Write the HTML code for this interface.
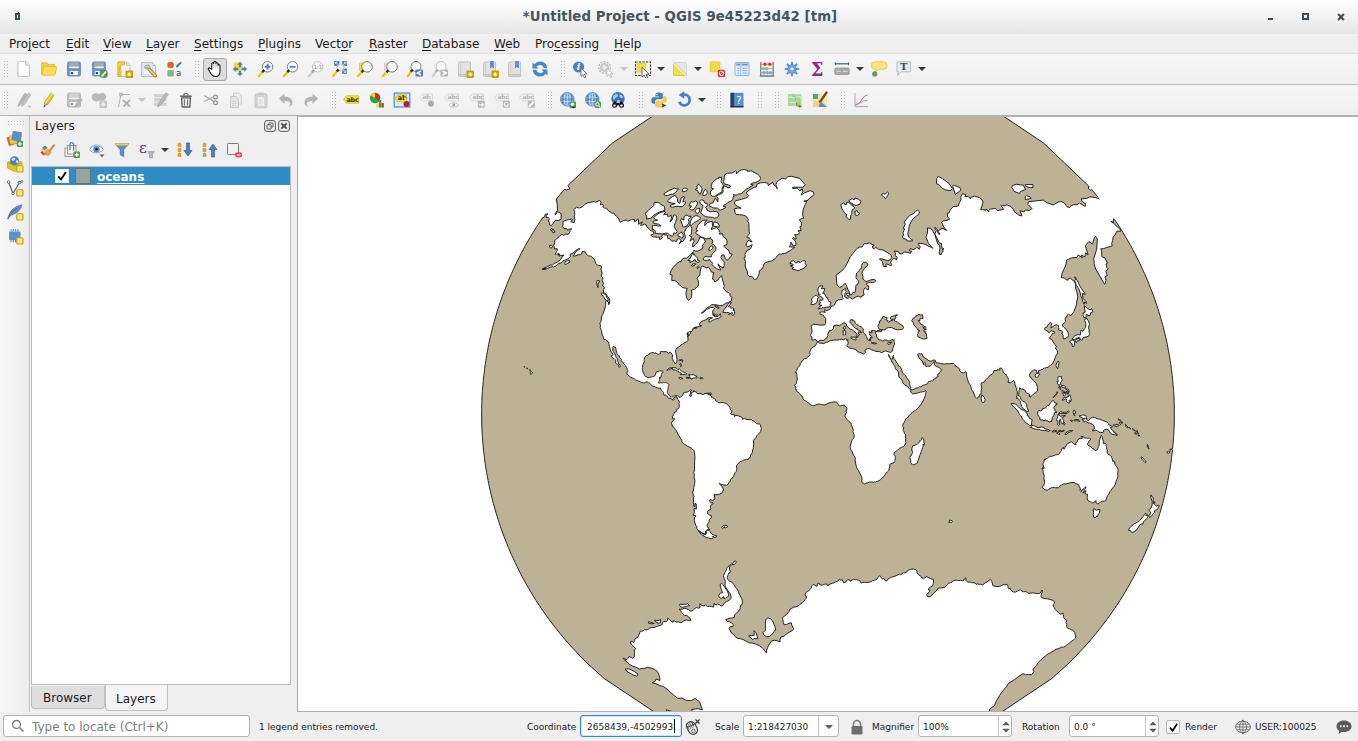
<!DOCTYPE html><html><head><meta charset="utf-8"><title>QGIS</title><style>
*{box-sizing:border-box;margin:0;padding:0}
html,body{width:1358px;height:741px;overflow:hidden;background:#efefef}
body{position:relative;font-family:"DejaVu Sans","Liberation Sans",sans-serif;font-size:12px;color:#1b1b1b}
.abs{position:absolute}
#title{left:0;top:0;width:1358px;height:34px;background:linear-gradient(#fefefe 0,#f5f5f5 40%,#e4e4e4 100%)}
#title .t{position:absolute;left:1px;width:1358px;top:9px;letter-spacing:.065px;text-align:center;font-weight:bold;font-size:13.33px;color:#44555f;line-height:16px;white-space:pre}
#menu{left:0;top:34px;width:1358px;height:20px;background:#efefef;border-bottom:1px solid #dcdcdc}
#menu span{position:absolute;top:3px;line-height:14px;white-space:pre}
#menu u{text-decoration:underline;text-underline-offset:1.5px;text-decoration-thickness:1px}
.tb{left:0;width:1358px;background:linear-gradient(#f6f6f6,#efefef)}
#tb1{top:54px;height:31px;border-bottom:1px solid #bdbdbd}
#tb2{top:85px;height:31px;border-bottom:1px solid #b2b2b2}
.ic{position:absolute;width:24px;height:24px}
.ic svg{position:absolute;left:0;top:0}
.hd{position:absolute;width:5px;height:17px;background-image:radial-gradient(circle at 1px 1px,#b0b0b0 0.55px,transparent 0.95px);background-size:3px 3px}
.arr{position:absolute;width:0;height:0;border-left:4px solid transparent;border-right:4px solid transparent;border-top:4.5px solid #3a3a3a}
.arr.dis{border-top-color:#c4c4c4}
#ltb{left:0;top:116px;width:29px;height:596px;background:linear-gradient(90deg,#f9f9f9,#ececec)}
#lsep{left:29px;top:116px;width:1px;height:596px;background:#c4c4c4}
#dock{left:30px;top:116px;width:267px;height:596px;background:#efefef}
#tree{left:31px;top:166px;width:260px;height:519px;background:#fff;border:1px solid #bdbdbd}
#row{left:32px;top:167px;width:258px;height:18px;background:#308cc6}
#canvasframe{left:297px;top:116px;width:1062px;height:596px;background:#fff;border:1px solid #b0b0b0;border-left-color:#a4a4a4}
#status{left:0;top:712px;width:1358px;height:29px;background:#efefef}
.fld{position:absolute;background:#fff;border:1px solid #b3b3b3;border-radius:3px;height:22px}
.st{position:absolute;font-size:9px;line-height:12px;white-space:pre;color:#1b1b1b}
</style></head><body>
<div id="title" class="abs"><div class="t">*Untitled Project - QGIS 9e45223d42 [tm]</div><svg class="abs" style="left:14px;top:11px" width="8" height="10" viewBox="0 0 8 10"><rect x="0.3" y="1.3" width="6.4" height="8.400" rx="1" fill="#fff" opacity=".85"/><rect x="1" y="2" width="5" height="7" fill="#354b58"/><rect x="4" y="1" width="1.200" height="1.200" fill="#354b58"/><rect x="3" y="4" width="1" height="3.200" fill="#fff"/></svg><svg class="abs" style="left:1268px;top:18px" width="5" height="2" viewBox="0 0 5 2"><rect width="5" height="2" fill="#3e4e59"/></svg><svg class="abs" style="left:1302px;top:13px" width="7" height="7" viewBox="0 0 7 7"><rect x="1" y="1" width="5" height="5" fill="#fff" stroke="#3e4e59" stroke-width="2"/></svg><svg class="abs" style="left:1336.5px;top:12.7px" width="8" height="8" viewBox="0 0 8 8"><path d="M1.100 1.100L6.900 6.900M6.900 1.100L1.100 6.900" stroke="#3e4e59" stroke-width="2.100"/></svg></div>
<div id="menu" class="abs"><span style="left:9px">Pro<u>j</u>ect</span><span style="left:66px"><u>E</u>dit</span><span style="left:103px"><u>V</u>iew</span><span style="left:146px"><u>L</u>ayer</span><span style="left:194px"><u>S</u>ettings</span><span style="left:258px"><u>P</u>lugins</span><span style="left:315px">Vect<u>o</u>r</span><span style="left:369px"><u>R</u>aster</span><span style="left:422px"><u>D</u>atabase</span><span style="left:494px"><u>W</u>eb</span><span style="left:535px">Pro<u>c</u>essing</span><span style="left:614px"><u>H</u>elp</span></div>
<div id="tb1" class="abs tb"><svg class="abs" style="left:4px;top:7px" width="6" height="18" fill="#b9b9b9"><rect x="0" y="0" width="1" height="1"/><rect x="0" y="3" width="1" height="1"/><rect x="0" y="6" width="1" height="1"/><rect x="0" y="9" width="1" height="1"/><rect x="0" y="12" width="1" height="1"/><rect x="0" y="15" width="1" height="1"/><rect x="3" y="0" width="1" height="1"/><rect x="3" y="3" width="1" height="1"/><rect x="3" y="6" width="1" height="1"/><rect x="3" y="9" width="1" height="1"/><rect x="3" y="12" width="1" height="1"/><rect x="3" y="15" width="1" height="1"/></svg><svg class="abs" style="left:15px;top:6px" width="18" height="18" viewBox="0 0 18 18"><path d="M3.9 1.5h6.8l3.8 3.8v10.2a1 1 0 0 1-1 1H3.9a1 1 0 0 1-1-1V2.5a1 1 0 0 1 1-1z" fill="#fff" stroke="#c6c6c6" stroke-width="1.2"/><path d="M10.7 1.5v3.8h3.8" fill="#eee" stroke="#c6c6c6" stroke-width="1"/></svg><svg class="abs" style="left:40px;top:6px" width="18" height="18" viewBox="0 0 18 18"><path d="M1.6 3.6a.8.8 0 0 1 .8-.8h4.2l1.4 1.6h6a.8.8 0 0 1 .8.8v9.2H1.6z" fill="#f3cf46" stroke="#d6b534" stroke-width=".8"/><path d="M3.6 6.6h12.6a.5.5 0 0 1 .5.6l-1.6 7.4a.8.8 0 0 1-.8.6H1.9z" fill="#fddc55" stroke="#dcbb3a" stroke-width=".8"/></svg><svg class="abs" style="left:65px;top:6px" width="18" height="18" viewBox="0 0 18 18"><rect x="2" y="1.5" width="14" height="15" rx="2" fill="#6a94c6"/><rect x="4.3" y="2.4" width="9.4" height="5.4" fill="#a9a9a9"/><rect x="4.3" y="6.6" width="9.4" height="1.6" fill="#f4f4f4"/><rect x="4.8" y="11" width="8.4" height="4" fill="#f2f2f2"/><rect x="5.8" y="12" width="2.2" height="2.2" fill="#2d4a73"/></svg><svg class="abs" style="left:90px;top:6px" width="18" height="18" viewBox="0 0 18 18"><rect x="2" y="1.5" width="14" height="15" rx="2" fill="#6a94c6"/><rect x="4.3" y="2.4" width="9.4" height="5.4" fill="#a9a9a9"/><rect x="4.3" y="6.6" width="9.4" height="1.6" fill="#f4f4f4"/><rect x="4.8" y="11" width="8.4" height="4" fill="#f2f2f2"/><rect x="5.8" y="12" width="2.2" height="2.2" fill="#2d4a73"/><rect x="10.2" y="10.4" width="7" height="7" rx="1.6" fill="#4e9a4e" stroke="#3d7f3d" stroke-width=".6"/><path d="M12 16l3.6-3.8" stroke="#fff" stroke-width="1.7" stroke-linecap="round"/></svg><svg class="abs" style="left:115px;top:6px" width="18" height="18" viewBox="0 0 18 18"><path d="M3 2h8.5l3.5 3.5v11H3z" fill="#f4f7fb" stroke="#bdbdbd" stroke-width="1"/><path d="M11.5 2v3.5H15" fill="#e6e6e6" stroke="#bdbdbd" stroke-width=".9"/><path d="M3 2h6.5v3H6v11.5H3z" fill="#f5d33a" stroke="#d1ae1f" stroke-width=".7"/><path d="M4 7h1.3M4 9.5h1.3M4 12h1.3M4 14.5h1.3" stroke="#c9a51c" stroke-width=".8"/><rect x="10.5" y="10.5" width="7.5" height="7.5" rx="1" fill="#c4a000"/><path d="M14.25 11.95v4.6M11.95 14.25h4.6M12.75 12.75l3 3M15.75 12.75l-3 3" stroke="#fff" stroke-width=".85"/></svg><svg class="abs" style="left:140px;top:6px" width="18" height="18" viewBox="0 0 18 18"><path d="M1.5 2.5h11l3 3v11h-14z" fill="#e9f0fb" stroke="#bcbcbc"/><path d="M12.5 2.5v3h3" fill="#e2e2e2" stroke="#bcbcbc" stroke-width=".9"/><rect x="3" y="4" width="9.5" height="10.5" fill="#f3f7fe" stroke="#c8d6ee" stroke-width=".8"/><path d="M9 9l6.3 6.8" stroke="#8a7a35" stroke-width="3.4" stroke-linecap="round"/><path d="M9.4 9.4l5.7 6.1" stroke="#f0cf58" stroke-width="2" stroke-linecap="round"/><path d="M6.2 5.2c1.2-.8 2.6-.4 3.4.8c.6 1 .5 2.100-.2 3l-1.500-1.6l-1.600.3l-.2 1.500l-1.500-1.500c-.5-1 .1-2 1.600-2.500z" fill="#c9c9c9" stroke="#8b8b8b" stroke-width=".7"/></svg><svg class="abs" style="left:165px;top:6px" width="18" height="18" viewBox="0 0 18 18"><circle cx="5.6" cy="5" r="3.3" fill="#d9672f"/><rect x="2.4" y="10" width="6.4" height="6.4" rx=".8" fill="#86b586"/><path d="M11.3 7l4.700-4.6" stroke="#3f6ea8" stroke-width="1.9"/><text x="11" y="16" font-family="DejaVu Sans,Liberation Sans,sans-serif" font-size="8.5" fill="#333">a</text></svg><svg class="abs" style="left:195px;top:7px" width="6" height="18" fill="#b9b9b9"><rect x="0" y="0" width="1" height="1"/><rect x="0" y="3" width="1" height="1"/><rect x="0" y="6" width="1" height="1"/><rect x="0" y="9" width="1" height="1"/><rect x="0" y="12" width="1" height="1"/><rect x="0" y="15" width="1" height="1"/><rect x="3" y="0" width="1" height="1"/><rect x="3" y="3" width="1" height="1"/><rect x="3" y="6" width="1" height="1"/><rect x="3" y="9" width="1" height="1"/><rect x="3" y="12" width="1" height="1"/><rect x="3" y="15" width="1" height="1"/></svg><div class="abs" style="left:203px;top:4px;width:24px;height:23px;background:#dcdcdc;border:1px solid #a6a6a6;border-radius:3px"></div><svg class="abs" style="left:206px;top:6px" width="18" height="18" viewBox="0 0 18 18"><g transform="translate(9 9) scale(1.08) translate(-9.3 -9.5)"><path d="M6.3 9.800V4.700c0-1.4 1.900-1.4 1.9 0V3.500c0-1.4 2-1.4 2 0v1.200c0-1.3 1.900-1.3 1.9 0v1.500c0-1.2 1.800-1.2 1.8 0v5.300c0 2.800-1.4 5-4.3 5c-2.3 0-3.300-1.100-4.500-3.200L3.2 10c-.7-1.300.9-2.1 1.700-1z" fill="#fff" stroke="#1a1a1a" stroke-width="1" stroke-linejoin="round"/><path d="M8.2 4.700v4M10.2 4.700v4M12.1 6.200v2.8" stroke="#9a9a9a" stroke-width=".6"/></g></svg><svg class="abs" style="left:231px;top:6px" width="18" height="18" viewBox="0 0 18 18"><rect x="2.5" y="2.5" width="9" height="9" rx="1" fill="#f7dc3f"/><path d="M9 1.800l2.7 3h-1.500v2.500h-2.400V4.800H6.300zM9 16.200l2.700-3h-1.500v-2.500h-2.400v2.500H6.300zM1.8 9l3-2.700v1.500h2.500v2.400H4.800v1.500zM16.2 9l-3-2.700v1.500h-2.500v2.400h2.500v1.500z" fill="#4f81bd"/></svg><svg class="abs" style="left:257px;top:6px" width="18" height="18" viewBox="0 0 18 18"><circle cx="10.6" cy="6.8" r="5.2" fill="#fdfdfd" stroke="#6f6f6f" stroke-width=".9"/><path d="M5.9236 11.4764L1.8 16.2" stroke="#f1c40f" stroke-width="2.3" stroke-linecap="round"/><path d="M7.2236 10.1764L5.2236 12.1764" stroke="#2b2b2b" stroke-width="2.3"/><path d="M10.6 3.800v6M7.6 6.800h6" stroke="#4f81bd" stroke-width="1.9"/></svg><svg class="abs" style="left:282px;top:6px" width="18" height="18" viewBox="0 0 18 18"><circle cx="10.6" cy="6.8" r="5.2" fill="#fdfdfd" stroke="#6f6f6f" stroke-width=".9"/><path d="M5.9236 11.4764L1.8 16.2" stroke="#f1c40f" stroke-width="2.3" stroke-linecap="round"/><path d="M7.2236 10.1764L5.2236 12.1764" stroke="#2b2b2b" stroke-width="2.3"/><path d="M7.6 6.800h6" stroke="#4f81bd" stroke-width="1.9"/></svg><svg class="abs" style="left:307px;top:6px" width="18" height="18" viewBox="0 0 18 18"><circle cx="10.6" cy="6.8" r="5.2" fill="#fafafa" stroke="#b5b5b5" stroke-width=".9"/><path d="M5.9236 11.4764L1.8 16.2" stroke="#cfcfcf" stroke-width="2.3" stroke-linecap="round"/><path d="M7.2236 10.1764L5.2236 12.1764" stroke="#a5a5a5" stroke-width="2.3"/><text x="10.6" y="9.2" text-anchor="middle" font-family="DejaVu Sans,Liberation Sans,sans-serif" font-size="6" fill="#8f8f8f" letter-spacing="-.5">1:1</text></svg><svg class="abs" style="left:331px;top:6px" width="18" height="18" viewBox="0 0 18 18"><path d="M3.500 1h5l-5 5zM16 1v5l-5-5zM16 13.500h-5l5-5zM3.500 13.500" fill="#4f81bd"/><path d="M3.500 1h5v1.800h-3.200v3.200h-1.800zM16 1v5h-1.800v-3.200h-3.200v-1.800zM16 13.500h-5v-1.800h3.200v-3.200h1.800z" fill="#4f81bd"/><rect x="3.500" y="1" width="4.600" height="4.600" fill="#4f81bd"/><rect x="11.400" y="1" width="4.600" height="4.600" fill="#4f81bd"/><rect x="11.400" y="8.900" width="4.600" height="4.600" fill="#4f81bd"/><path d="M4.600 2.100l2.500 2.500M4.600 4v-1.900h1.900M14.900 2.100l-2.500 2.500M13 2.100h1.900v1.900M14.900 12.400l-2.500-2.500M14.900 10.500v1.900h-1.900" fill="none" stroke="#dfeaf7" stroke-width=".9"/><circle cx="9.700" cy="7.300" r="3.400" fill="#e9e9e9" stroke="#a5a5a5" stroke-width=".7"/><path d="M7 10.200L1.800 16.200" stroke="#f1c40f" stroke-width="2.300" stroke-linecap="round"/><path d="M7.600 9.600l-1.800 1.900" stroke="#2b2b2b" stroke-width="2.300"/></svg><svg class="abs" style="left:356px;top:6px" width="18" height="18" viewBox="0 0 18 18"><rect x="3.5" y="3" width="7" height="8" rx=".8" fill="#f7dc3f" stroke="#d9bc2b" stroke-width=".6"/><circle cx="11" cy="6.8" r="5.3" fill="rgba(250,250,245,.86)" stroke="#6f6f6f" stroke-width=".9"/><path d="M6.2529 11.5471L1.8 16.2" stroke="#f1c40f" stroke-width="2.3" stroke-linecap="round"/><path d="M7.5529 10.2471L5.5529 12.2471" stroke="#2b2b2b" stroke-width="2.3"/></svg><svg class="abs" style="left:381px;top:6px" width="18" height="18" viewBox="0 0 18 18"><rect x="3.5" y="3" width="7" height="8" rx=".8" fill="#dcdcdc" stroke="#c4c4c4" stroke-width=".6"/><circle cx="11" cy="6.8" r="5.3" fill="rgba(250,250,250,.86)" stroke="#6f6f6f" stroke-width=".9"/><path d="M6.2529 11.5471L1.8 16.2" stroke="#f1c40f" stroke-width="2.3" stroke-linecap="round"/><path d="M7.5529 10.2471L5.5529 12.2471" stroke="#2b2b2b" stroke-width="2.3"/></svg><svg class="abs" style="left:406px;top:6px" width="18" height="18" viewBox="0 0 18 18"><circle cx="10" cy="6.5" r="5" fill="#fdfdfd" stroke="#6f6f6f" stroke-width=".9"/><path d="M5.465 11.035L1.8 16.2" stroke="#f1c40f" stroke-width="2.3" stroke-linecap="round"/><path d="M6.765 9.735L4.765 11.735" stroke="#2b2b2b" stroke-width="2.3"/><rect x="9.5" y="9.5" width="7.5" height="7" rx=".8" fill="#4f81bd"/><path d="M15 11l-3.6 2l3.6 2" fill="none" stroke="#fff" stroke-width="1.5"/></svg><svg class="abs" style="left:431px;top:6px" width="18" height="18" viewBox="0 0 18 18"><circle cx="10" cy="6.5" r="5" fill="#fdfdfd" stroke="#b5b5b5" stroke-width=".9"/><path d="M5.465 11.035L1.8 16.2" stroke="#cfcfcf" stroke-width="2.3" stroke-linecap="round"/><path d="M6.765 9.735L4.765 11.735" stroke="#a5a5a5" stroke-width="2.3"/><rect x="9.5" y="9.5" width="7.5" height="7" rx=".8" fill="#b4b4b4"/><path d="M11.5 11l3.6 2l-3.6 2" fill="none" stroke="#fff" stroke-width="1.5"/></svg><svg class="abs" style="left:456px;top:6px" width="18" height="18" viewBox="0 0 18 18"><path d="M2.5 3.500c0-1 .6-1.5 1.500-1.500h10.500v12.500H4.500c-1.2 0-2 .5-2 1.500z" fill="#e2e2e2" stroke="#bdbdbd" stroke-width=".9"/><path d="M2.5 16c0-1 .8-1.5 2-1.500h10v2h-10.500c-1 0-1.500-.2-1.500-.5z" fill="#d2d2d2" stroke="#bdbdbd" stroke-width=".8"/><path d="M4.5 2v12.5" stroke="#c9c9c9" stroke-width=".8"/><rect x="10.5" y="10.5" width="7.5" height="7.5" rx="1" fill="#c4a000"/><path d="M14.25 11.95v4.6M11.95 14.25h4.6M12.75 12.75l3 3M15.75 12.75l-3 3" stroke="#fff" stroke-width=".85"/></svg><svg class="abs" style="left:481px;top:6px" width="18" height="18" viewBox="0 0 18 18"><path d="M2.5 3.500c0-1 .6-1.5 1.500-1.500h10.500v12.500H4.500c-1.2 0-2 .5-2 1.500z" fill="#e2e2e2" stroke="#bdbdbd" stroke-width=".9"/><path d="M2.5 16c0-1 .8-1.5 2-1.500h10v2h-10.500c-1 0-1.500-.2-1.500-.5z" fill="#d2d2d2" stroke="#bdbdbd" stroke-width=".8"/><path d="M4.5 2v12.5" stroke="#c9c9c9" stroke-width=".8"/><path d="M9.5 1.500h3v6.500l-1.500-1.600l-1.5 1.600z" fill="#5b8fc9" stroke="#3f6ea8" stroke-width=".5"/><rect x="10.5" y="10.5" width="7.5" height="7.5" rx="1" fill="#c4a000"/><path d="M14.25 11.95v4.6M11.95 14.25h4.6M12.75 12.75l3 3M15.75 12.75l-3 3" stroke="#fff" stroke-width=".85"/></svg><svg class="abs" style="left:506px;top:6px" width="18" height="18" viewBox="0 0 18 18"><path d="M2.5 3.500c0-1 .6-1.5 1.500-1.500h10.500v12.500H4.500c-1.2 0-2 .5-2 1.500z" fill="#e2e2e2" stroke="#bdbdbd" stroke-width=".9"/><path d="M2.5 16c0-1 .8-1.5 2-1.500h10v2h-10.500c-1 0-1.500-.2-1.500-.5z" fill="#d2d2d2" stroke="#bdbdbd" stroke-width=".8"/><path d="M4.5 2v12.5" stroke="#c9c9c9" stroke-width=".8"/><path d="M9.5 1.500h3v6.500l-1.500-1.600l-1.5 1.600z" fill="#5b8fc9" stroke="#3f6ea8" stroke-width=".5"/></svg><svg class="abs" style="left:531px;top:6px" width="18" height="18" viewBox="0 0 18 18"><path d="M16.200 8.300A7.200 7.200 0 0 0 3.300 4.300L1.500 2.600v6h6L5.500 6.600a4 4 0 0 1 7.200 1.700z" fill="#4a86cc"/><path d="M1.800 9.700a7.200 7.200 0 0 0 12.900 4l1.800 1.700v-6h-6l2 2a4 4 0 0 1-7.200-1.700z" fill="#4a86cc"/></svg><svg class="abs" style="left:561px;top:7px" width="6" height="18" fill="#b9b9b9"><rect x="0" y="0" width="1" height="1"/><rect x="0" y="3" width="1" height="1"/><rect x="0" y="6" width="1" height="1"/><rect x="0" y="9" width="1" height="1"/><rect x="0" y="12" width="1" height="1"/><rect x="0" y="15" width="1" height="1"/><rect x="3" y="0" width="1" height="1"/><rect x="3" y="3" width="1" height="1"/><rect x="3" y="6" width="1" height="1"/><rect x="3" y="9" width="1" height="1"/><rect x="3" y="12" width="1" height="1"/><rect x="3" y="15" width="1" height="1"/></svg><svg class="abs" style="left:571px;top:6px" width="18" height="18" viewBox="0 0 18 18"><circle cx="7.6" cy="7" r="5.6" fill="#4f81bd"/><text x="7.6" y="10.3" text-anchor="middle" font-family="DejaVu Serif,Liberation Serif,serif" font-weight="bold" font-style="italic" font-size="9.5" fill="#fff">i</text><path d="M10 8.3l0 8l1.900-1.700l1.5 3.200l1.500-.7l-1.500-3.100l2.600-.2z" fill="#fff" stroke="#555" stroke-width=".8" stroke-linejoin="round"/></svg><svg class="abs" style="left:597px;top:6px" width="18" height="18" viewBox="0 0 18 18"><circle cx="7.5" cy="7.5" r="5.8" fill="none" stroke="#bdbdbd" stroke-width="1.4" stroke-dasharray="2 1.2"/><circle cx="7.5" cy="7.5" r="4" fill="#d4d4d4" stroke="#b4b4b4" stroke-width=".8"/><path d="M6.2 5.300l3.8 2.200l-3.8 2.200z" fill="#f4f4f4"/><path d="M10 8.3l0 8l1.900-1.700l1.5 3.200l1.500-.7l-1.500-3.100l2.600-.2z" fill="#fff" stroke="#b0b0b0" stroke-width=".8" stroke-linejoin="round"/></svg><div class="arr dis" style="left:620px;top:13px"></div><svg class="abs" style="left:634px;top:6px" width="18" height="18" viewBox="0 0 18 18"><rect x="1.500" y="2" width="15" height="13.500" fill="none" stroke="#333" stroke-width="1.100" stroke-dasharray="2.200 1.300"/><rect x="3" y="3.300" width="9" height="9" rx=".6" fill="#f7dc3f" stroke="#dcc032" stroke-width=".5"/><path d="M8 7.300l0 9.800l2.300-2l1.800 3.600l1.700-.8l-1.800-3.500l3-.3z" fill="#fff" stroke="#444" stroke-width=".8" stroke-linejoin="round"/></svg><div class="arr" style="left:657px;top:13px"></div><svg class="abs" style="left:671px;top:6px" width="18" height="18" viewBox="0 0 18 18"><rect x="2.5" y="2.5" width="13" height="13" rx="1" fill="#e6e6e6" stroke="#c9c9c9" stroke-width=".7"/><path d="M2.5 2.800v12.700h12.700z" fill="#f7dc3f" stroke="#d8bc2e" stroke-width=".6"/><path d="M2.5 2.5l13 13" stroke="#fff" stroke-width="1.5"/><path d="M2.9 2.3l13 13" stroke="#777" stroke-width=".5"/></svg><div class="arr" style="left:694px;top:13px"></div><svg class="abs" style="left:708px;top:6px" width="18" height="18" viewBox="0 0 18 18"><rect x="2" y="1.8" width="10" height="10" rx="1" fill="#f7dc3f" stroke="#dcc032" stroke-width=".6"/><rect x="9.8" y="9.8" width="7.2" height="7.2" rx="1.6" fill="#d9212c"/><circle cx="13.4" cy="13.4" r="2.3" fill="none" stroke="#fff" stroke-width="1"/><path d="M11.9 14.900l3-3" stroke="#fff" stroke-width="1"/></svg><svg class="abs" style="left:733px;top:6px" width="18" height="18" viewBox="0 0 18 18"><rect x="2" y="2.5" width="14" height="13" rx="1" fill="#eaf1fa" stroke="#8cb0dd" stroke-width="1"/><rect x="2.5" y="3" width="13" height="3.2" fill="#a9c6ea"/><path d="M3.8 4.600h3.500M9 4.600h5.5" stroke="#5b8fc9" stroke-width="1"/><path d="M7.7 6.200v9" stroke="#8cb0dd" stroke-width=".8"/><path d="M3.8 8.300h2.700M9 8.300h5.500M3.8 10.700h2.700M9 10.700h5.500M3.8 13.100h2.700M9 13.100h5.5" stroke="#8cb0dd" stroke-width="1"/></svg><svg class="abs" style="left:758px;top:6px" width="18" height="18" viewBox="0 0 18 18"><path d="M2.8 2v14M15.2 2v14" stroke="#7d7d7d" stroke-width="1.3"/><path d="M1.8 16h14.4" stroke="#8a8a8a" stroke-width="1.8"/><path d="M2.8 4.200h12.400M2.8 8.600h12.400M2.8 12.800h12.4" stroke="#9a9a9a" stroke-width=".8"/><circle cx="7" cy="4.2" r="1.7" fill="#d9352b"/><circle cx="11.8" cy="4.2" r="1.7" fill="#d9352b"/><circle cx="5.6" cy="8.6" r="1.7" fill="#7fc77f"/><circle cx="8.8" cy="8.6" r="1.7" fill="#7fc77f"/><circle cx="6" cy="12.8" r="1.7" fill="#7fa8d6"/><circle cx="9.3" cy="12.8" r="1.7" fill="#7fa8d6"/><circle cx="12.5" cy="12.8" r="1.7" fill="#7fa8d6"/></svg><svg class="abs" style="left:783px;top:6px" width="18" height="18" viewBox="0 0 18 18"><path d="M16.36 8.27L16.36 9.73L13.40 10.34L13.06 11.17L14.72 13.69L13.69 14.72L11.17 13.06L10.34 13.40L9.73 16.36L8.27 16.36L7.66 13.40L6.83 13.06L4.31 14.72L3.28 13.69L4.94 11.17L4.60 10.34L1.64 9.73L1.64 8.27L4.60 7.66L4.94 6.83L3.28 4.31L4.31 3.28L6.83 4.94L7.66 4.60L8.27 1.64L9.73 1.64L10.34 4.60L11.17 4.94L13.69 3.28L14.72 4.31L13.06 6.83L13.40 7.66Z" fill="#5b8fd0"/><circle cx="9" cy="9" r="1.7" fill="#f4f4f4"/><circle cx="9" cy="9" r="3.3" fill="none" stroke="#8fb3e0" stroke-width=".7"/></svg><svg class="abs" style="left:808px;top:6px" width="18" height="18" viewBox="0 0 18 18"><text x="9" y="15.8" text-anchor="middle" font-family="DejaVu Serif,Liberation Serif,serif" font-weight="bold" font-size="18" fill="#93268f">Σ</text></svg><svg class="abs" style="left:833px;top:6px" width="18" height="18" viewBox="0 0 18 18"><path d="M2.3 3.800h13.4" stroke="#2f5d8f" stroke-width="1.2"/><path d="M2.3 2.300v3M15.7 2.300v3" stroke="#2f5d8f" stroke-width="1"/><rect x="1.8" y="8" width="14.4" height="6.5" rx="1.3" fill="#a9a9a9" stroke="#8f8f8f" stroke-width=".7"/><path d="M3.5 11.300h4.500M10 11.300h4.5" stroke="#d4d4d4" stroke-width="1.2"/></svg><div class="arr" style="left:856px;top:13px"></div><svg class="abs" style="left:870px;top:6px" width="18" height="18" viewBox="0 0 18 18"><path d="M5 1.800h8.500a3.2 3.2 0 0 1 0 7.400H8.500L5 13.500l.8-4.300H5a3.2 3.2 0 0 1 0-7.400z" fill="#fbe47e" stroke="#e6c84a" stroke-width=".9"/><circle cx="4.8" cy="14" r="2.3" fill="#5ea65e" stroke="#3f8a3f" stroke-width=".7"/></svg><svg class="abs" style="left:895px;top:6px" width="18" height="18" viewBox="0 0 18 18"><path d="M2 1.800h13.500v10H6.500L2.5 15.500l1-3.700H2z" fill="#e3edf5" stroke="#b7bcc0" stroke-width="1"/><text x="8.8" y="10.3" text-anchor="middle" font-family="DejaVu Serif,Liberation Serif,serif" font-weight="bold" font-size="10" fill="#4a4a4a">T</text></svg><div class="arr" style="left:918px;top:13px"></div></div>
<div id="tb2" class="abs tb"><svg class="abs" style="left:4px;top:7px" width="6" height="18" fill="#b9b9b9"><rect x="0" y="0" width="1" height="1"/><rect x="0" y="3" width="1" height="1"/><rect x="0" y="6" width="1" height="1"/><rect x="0" y="9" width="1" height="1"/><rect x="0" y="12" width="1" height="1"/><rect x="0" y="15" width="1" height="1"/><rect x="3" y="0" width="1" height="1"/><rect x="3" y="3" width="1" height="1"/><rect x="3" y="6" width="1" height="1"/><rect x="3" y="9" width="1" height="1"/><rect x="3" y="12" width="1" height="1"/><rect x="3" y="15" width="1" height="1"/></svg><svg class="abs" style="left:15px;top:6px" width="18" height="18" viewBox="0 0 18 18"><path d="M3 15.500l1-4l6-9.500l2.5 1.600l-6 9.500z" fill="#b4b4b4" stroke="#a5a5a5" stroke-width=".5"/><path d="M6.5 15.500l1-4l6-9.500l2.5 1.600l-6 9.500z" fill="#c2c2c2" stroke="#a9a9a9" stroke-width=".5"/><path d="M12.5 14.800h4l-2 2.200z" fill="#c4c4c4"/></svg><svg class="abs" style="left:40px;top:6px" width="18" height="18" viewBox="0 0 18 18"><path d="M3.7 16.3L4.3 11.6L7.6 13.8z" fill="#9a9a9a"/><path d="M3.7 16.3l.3-2l1.300 .9z" fill="#2b2b2b"/><path d="M4.3 11.6L10.6 2.4l3.300 2.300L7.6 13.8z" fill="#dcc116" stroke="#a98f0f" stroke-width=".5"/><path d="M5.4 12.300L11.700 3.100" stroke="#f6e66a" stroke-width="1.200"/><path d="M10.6 2.4l.8-1.200l3.300 2.300l-.8 1.200z" fill="#e2e2e2" stroke="#aaa" stroke-width=".4"/></svg><svg class="abs" style="left:65px;top:6px" width="18" height="18" viewBox="0 0 18 18"><rect x="2" y="1.5" width="14" height="15" rx="2" fill="#bcbcbc"/><rect x="4.3" y="2.4" width="9.4" height="5.4" fill="#d2d2d2"/><rect x="4.3" y="6.6" width="9.4" height="1.6" fill="#f4f4f4"/><rect x="4.8" y="11" width="8.4" height="4" fill="#f2f2f2"/><rect x="5.8" y="12" width="2.2" height="2.2" fill="#9a9a9a"/><path d="M10 16l1-3l4.600-5.500l1.7 1.400l-4.6 5.500z" fill="#b4b4b4" stroke="#a0a0a0" stroke-width=".5"/></svg><svg class="abs" style="left:90px;top:6px" width="18" height="18" viewBox="0 0 18 18"><path d="M2 6c0-3 3.500-3.8 6-3c2 .6 3.200-.8 5.500-.5c2.500.4 2.8 3.5 1.5 5.500c-1 1.500-3 1.200-4.5 1c-2-.3-2.5 1.500-4.5 1.200c-2.500-.4-4-2-4-4.200z" fill="#b9b9b9" stroke="#a7a7a7" stroke-width=".6"/><rect x="9.5" y="9.5" width="7.5" height="7.5" rx="1" fill="#c2c2c2"/><path d="M13.250 10.800v5M10.750 13.300h5M11.5 11.500l3.5 3.500M15 11.500l-3.5 3.5" stroke="#f0f0f0" stroke-width="1"/></svg><svg class="abs" style="left:115px;top:6px" width="18" height="18" viewBox="0 0 18 18"><path d="M3.5 16L6 3.500h9" fill="none" stroke="#b4b4b4" stroke-width="1.1"/><rect x="4.6" y="2" width="3" height="3" fill="#c2c2c2" stroke="#aaa" stroke-width=".5"/><path d="M8 9l7 6.500M15 9l-6.5 6.5" stroke="#b0b0b0" stroke-width="1.9"/></svg><div class="arr dis" style="left:138px;top:13px"></div><svg class="abs" style="left:152px;top:6px" width="18" height="18" viewBox="0 0 18 18"><rect x="2" y="3" width="12.5" height="3.2" rx=".6" fill="#d0d0d0"/><rect x="2" y="7.3" width="12.5" height="3.2" rx=".6" fill="#d0d0d0"/><rect x="2" y="11.6" width="12.5" height="3.2" rx=".6" fill="#d0d0d0"/><path d="M5.5 16l1.200-4L14 1.800l2.4 1.600L9 13.800z" fill="#b9b9b9" stroke="#9f9f9f" stroke-width=".6"/></svg><svg class="abs" style="left:177px;top:6px" width="18" height="18" viewBox="0 0 18 18"><path d="M3.3 5.200h11.4" stroke="#5e5e5e" stroke-width="1.5"/><path d="M6.8 4.500c0-1.500.5-2 2.200-2s2.200.5 2.2 2" fill="none" stroke="#5e5e5e" stroke-width="1.2"/><path d="M4.5 6.800h9l-.7 9.200h-7.600z" fill="#e4e4e4" stroke="#5e5e5e" stroke-width="1.3" stroke-linejoin="round"/><path d="M7.4 8.500v6M10.6 8.500v6" stroke="#6a6a6a" stroke-width="1"/></svg><svg class="abs" style="left:202px;top:6px" width="18" height="18" viewBox="0 0 18 18"><path d="M2 4.500l10 6M2 10.500l10-5" stroke="#a9a9a9" stroke-width="1.2"/><circle cx="13.5" cy="6" r="1.9" fill="none" stroke="#8f8f8f" stroke-width="1.2"/><circle cx="13.5" cy="11.8" r="1.9" fill="none" stroke="#8f8f8f" stroke-width="1.2"/></svg><svg class="abs" style="left:227px;top:6px" width="18" height="18" viewBox="0 0 18 18"><path d="M6.5 2h5.500l2.5 2.500v8.500h-8z" fill="#ececec" stroke="#c9c9c9" stroke-width=".9"/><path d="M3.5 5.500h5.500l2.5 2.500v8.500h-8z" fill="#e4e4e4" stroke="#c4c4c4" stroke-width=".9"/><path d="M5 10.500h4.500M5 12.500h4.500M5 14.500h3" stroke="#cfcfcf" stroke-width=".9"/></svg><svg class="abs" style="left:252px;top:6px" width="18" height="18" viewBox="0 0 18 18"><rect x="3" y="2.8" width="12" height="14" rx="1.3" fill="#d6d6d6" stroke="#c2c2c2" stroke-width=".9"/><rect x="6.5" y="1.5" width="5" height="2.6" rx=".8" fill="#c9c9c9"/><path d="M5.3 5.500h5.500l2 2v7.800H5.300z" fill="#efefef" stroke="#c9c9c9" stroke-width=".7"/><path d="M6.8 9h4M6.8 11h4M6.8 13h2.5" stroke="#cfcfcf" stroke-width=".9"/></svg><svg class="abs" style="left:277px;top:6px" width="18" height="18" viewBox="0 0 18 18"><path d="M2 7.500l5.500-5v3.200c4.5 0 8 2 8 5.800c0 2.500-1.8 4-4 4.500c1.200-.8 1.800-1.8 1.800-3c0-2-2-3-5.800-3v3z" fill="#b4b4b4"/></svg><svg class="abs" style="left:302px;top:6px" width="18" height="18" viewBox="0 0 18 18"><path d="M16 7.500l-5.500-5v3.200c-4.5 0-8 2-8 5.800c0 2.5 1.8 4 4 4.500c-1.200-.8-1.800-1.800-1.800-3c0-2 2-3 5.800-3v3z" fill="#b4b4b4"/></svg><svg class="abs" style="left:332px;top:7px" width="6" height="18" fill="#b9b9b9"><rect x="0" y="0" width="1" height="1"/><rect x="0" y="3" width="1" height="1"/><rect x="0" y="6" width="1" height="1"/><rect x="0" y="9" width="1" height="1"/><rect x="0" y="12" width="1" height="1"/><rect x="0" y="15" width="1" height="1"/><rect x="3" y="0" width="1" height="1"/><rect x="3" y="3" width="1" height="1"/><rect x="3" y="6" width="1" height="1"/><rect x="3" y="9" width="1" height="1"/><rect x="3" y="12" width="1" height="1"/><rect x="3" y="15" width="1" height="1"/></svg><svg class="abs" style="left:342px;top:6px" width="18" height="18" viewBox="0 0 18 18"><path d="M1.5 8.5l3-3.8h12v7.6h-12z" fill="#f7dc3f" stroke="#d4b21c" stroke-width=".7" stroke-linejoin="round"/><text x="4.5" y="10.7" font-family="DejaVu Sans,Liberation Sans,sans-serif" font-weight="bold" font-size="6.5" fill="#3a3000" letter-spacing="-.3">abc</text></svg><svg class="abs" style="left:368px;top:6px" width="18" height="18" viewBox="0 0 18 18"><circle cx="7" cy="7" r="5.2" fill="#2fa14b"/><path d="M7 7V1.800a5.2 5.2 0 0 1 4.5 7.800z" fill="#d42a2a"/><path d="M7 7L2.5 4.400A5.2 5.2 0 0 1 7 1.800z" fill="#f4d03f"/><path d="M7 7l4.5 2.600A5.2 5.2 0 0 1 4 11.300z" fill="#c0392b" opacity=".0"/><rect x="8.5" y="12.5" width="2.3" height="4" fill="#f4d03f"/><rect x="11" y="9" width="2.3" height="7.5" fill="#2fa14b"/><rect x="13.5" y="12" width="2.3" height="4.5" fill="#d42a2a"/></svg><svg class="abs" style="left:393px;top:6px" width="18" height="18" viewBox="0 0 18 18"><rect x="1.2" y="2" width="15.6" height="14" fill="#dbe8f8" stroke="#4a8be0" stroke-width="1.2"/><path d="M1.8 7.3l3-3.5h9v7h-9z" fill="#f7dc3f" stroke="#d4b21c" stroke-width=".7" stroke-linejoin="round"/><text x="4.8" y="9.2" font-family="DejaVu Sans,Liberation Sans,sans-serif" font-weight="bold" font-size="6.5" fill="#3a3000" letter-spacing="-.3">ab</text><path d="M12.5 6.500v5" stroke="#e8e8e8" stroke-width="1.6"/><circle cx="13.5" cy="13" r="3" fill="#b22222"/></svg><svg class="abs" style="left:418px;top:6px" width="18" height="18" viewBox="0 0 18 18"><path d="M1.5 6.5l3-3.5h10v7h-10z" fill="#f3f3f3" stroke="#cdcdcd" stroke-width=".7" stroke-linejoin="round"/><text x="4.5" y="8.4" font-family="DejaVu Sans,Liberation Sans,sans-serif" font-weight="bold" font-size="6" fill="#b4b4b4" letter-spacing="-.3">ab</text><path d="M12 6v4.5" stroke="#ddd" stroke-width="1.4"/><circle cx="13" cy="12.8" r="3" fill="#ababab"/></svg><svg class="abs" style="left:443px;top:6px" width="18" height="18" viewBox="0 0 18 18"><path d="M1.5 6.5l3-3.5h11v7h-11z" fill="#f3f3f3" stroke="#cdcdcd" stroke-width=".7" stroke-linejoin="round"/><text x="4.5" y="8.4" font-family="DejaVu Sans,Liberation Sans,sans-serif" font-weight="bold" font-size="6" fill="#b4b4b4" letter-spacing="-.3">abc</text><path d="M6 14c2-3 7-3 9.5 0c-2.5 3-7.5 3-9.5 0z" fill="#f6f6f6" stroke="#b9b9b9" stroke-width=".8"/><circle cx="10.8" cy="14" r="1.4" fill="#999"/></svg><svg class="abs" style="left:468px;top:6px" width="18" height="18" viewBox="0 0 18 18"><path d="M1.5 6.5l3-3.5h11v7h-11z" fill="#f3f3f3" stroke="#cdcdcd" stroke-width=".7" stroke-linejoin="round"/><text x="4.5" y="8.4" font-family="DejaVu Sans,Liberation Sans,sans-serif" font-weight="bold" font-size="6" fill="#b4b4b4" letter-spacing="-.3">abc</text><rect x="9.8" y="9.8" width="7" height="7" rx="1" fill="#b9b9b9"/><path d="M10.8 13.300h3v-1.800l2.5 2.300l-2.5 2.300v-1.800h-3z" fill="#fff"/></svg><svg class="abs" style="left:493px;top:6px" width="18" height="18" viewBox="0 0 18 18"><path d="M1.5 6.5l3-3.5h11v7h-11z" fill="#f3f3f3" stroke="#cdcdcd" stroke-width=".7" stroke-linejoin="round"/><text x="4.5" y="8.4" font-family="DejaVu Sans,Liberation Sans,sans-serif" font-weight="bold" font-size="6" fill="#b4b4b4" letter-spacing="-.3">abc</text><rect x="9.8" y="9.8" width="7" height="7" rx="1" fill="#b9b9b9"/><path d="M15.3 13.300a2 2 0 1 1-1-1.7" fill="none" stroke="#fff" stroke-width="1.1"/><path d="M13.5 10.700l1.800.8l-1 1.500z" fill="#fff"/></svg><svg class="abs" style="left:518px;top:6px" width="18" height="18" viewBox="0 0 18 18"><path d="M1.5 6.5l3-3.5h11v7h-11z" fill="#f3f3f3" stroke="#cdcdcd" stroke-width=".7" stroke-linejoin="round"/><text x="4.5" y="8.4" font-family="DejaVu Sans,Liberation Sans,sans-serif" font-weight="bold" font-size="6" fill="#b4b4b4" letter-spacing="-.3">abc</text><rect x="9.8" y="9.8" width="7" height="7" rx="1" fill="#b9b9b9"/><path d="M11.3 15.300l3.800-3.8" stroke="#fff" stroke-width="1.8" stroke-linecap="round"/></svg><svg class="abs" style="left:548px;top:7px" width="6" height="18" fill="#b9b9b9"><rect x="0" y="0" width="1" height="1"/><rect x="0" y="3" width="1" height="1"/><rect x="0" y="6" width="1" height="1"/><rect x="0" y="9" width="1" height="1"/><rect x="0" y="12" width="1" height="1"/><rect x="0" y="15" width="1" height="1"/><rect x="3" y="0" width="1" height="1"/><rect x="3" y="3" width="1" height="1"/><rect x="3" y="6" width="1" height="1"/><rect x="3" y="9" width="1" height="1"/><rect x="3" y="12" width="1" height="1"/><rect x="3" y="15" width="1" height="1"/></svg><svg class="abs" style="left:559px;top:6px" width="18" height="18" viewBox="0 0 18 18"><circle cx="8.3" cy="8.3" r="6.8" fill="#5b9be0"/><ellipse cx="8.3" cy="8.3" rx="3.2" ry="6.8" fill="none" stroke="#cfe2f7" stroke-width="1"/><path d="M8.3 1.500v13.600M1.8 6h13M1.8 10.600h13" stroke="#cfe2f7" stroke-width=".9"/><path d="M3.3 4.500c1.5 2.5 1.5 5.5 0 7.600M13.3 4.500c-1.5 2.500-1.5 5.5 0 7.6" fill="none" stroke="#777" stroke-width="1.6" stroke-dasharray="2 1"/><circle cx="8.3" cy="8.3" r="6.8" fill="none" stroke="#4a86c9" stroke-width=".8"/><rect x="10.5" y="10.5" width="6.5" height="6.5" rx="1" fill="#4e9a4e"/><circle cx="13.5" cy="13.3" r="1.8" fill="#e9f5e9"/><path d="M12 15.800h4.500l-2.2 1.700z" fill="#222"/></svg><svg class="abs" style="left:584px;top:6px" width="18" height="18" viewBox="0 0 18 18"><circle cx="8.3" cy="8.3" r="6.8" fill="#5b9be0"/><ellipse cx="8.3" cy="8.3" rx="3.2" ry="6.8" fill="none" stroke="#cfe2f7" stroke-width="1"/><path d="M8.3 1.500v13.600M1.8 6h13M1.8 10.600h13" stroke="#cfe2f7" stroke-width=".9"/><path d="M3.3 4.500c1.5 2.5 1.5 5.5 0 7.600M13.3 4.500c-1.5 2.500-1.5 5.5 0 7.6" fill="none" stroke="#777" stroke-width="1.6" stroke-dasharray="2 1"/><circle cx="8.3" cy="8.3" r="6.8" fill="none" stroke="#4a86c9" stroke-width=".8"/><rect x="10.5" y="10.5" width="6.5" height="6.5" rx="1" fill="#4e9a4e"/><circle cx="13.4" cy="13.4" r="1.7" fill="none" stroke="#fff" stroke-width="1"/><path d="M14.7 14.700l1.6 1.6" stroke="#fff" stroke-width="1.1"/></svg><svg class="abs" style="left:609px;top:6px" width="18" height="18" viewBox="0 0 18 18"><circle cx="9" cy="7.8" r="6.8" fill="#3f73b5"/><path d="M4 5c1.500-1.5 3-2 4.500-1.500c1 .5.5 2-.5 2.500s-2 1-2 2s-1.500.500-2-.500zM10.5 3.500c2 0 3.5 1.5 4 3c-1 0-1.5 1-2.500.500s-2-2-1.500-3.500zM8.5 9c1.5 0 3 .5 3 2s-1.5 2.500-2.5 2s-1.500-2.500-.5-4z" fill="#a9c8ea"/><circle cx="5.5" cy="14.3" r="2.5" fill="#111"/><circle cx="12.5" cy="14.3" r="2.5" fill="#111"/><circle cx="5.5" cy="14.5" r="1.2" fill="#f2f2f2"/><circle cx="12.5" cy="14.5" r="1.2" fill="#f2f2f2"/><path d="M6.5 10.500l-1.5 2.500M11.5 10.500l1.5 2.500M7.5 13h3" stroke="#111" stroke-width="2"/></svg><svg class="abs" style="left:639px;top:7px" width="6" height="18" fill="#b9b9b9"><rect x="0" y="0" width="1" height="1"/><rect x="0" y="3" width="1" height="1"/><rect x="0" y="6" width="1" height="1"/><rect x="0" y="9" width="1" height="1"/><rect x="0" y="12" width="1" height="1"/><rect x="0" y="15" width="1" height="1"/><rect x="3" y="0" width="1" height="1"/><rect x="3" y="3" width="1" height="1"/><rect x="3" y="6" width="1" height="1"/><rect x="3" y="9" width="1" height="1"/><rect x="3" y="12" width="1" height="1"/><rect x="3" y="15" width="1" height="1"/></svg><svg class="abs" style="left:650px;top:6px" width="18" height="18" viewBox="0 0 18 18"><path d="M8.8 1.500c-3 0-3.3 1.300-3.3 2.300v1.800h3.600v.7H3.600c-1.5 0-2.3 1.200-2.3 3.200s.8 3.2 2.3 3.200h1.400v-2c0-1.4 1-2.4 2.400-2.400h3.400c1.2 0 2-.8 2-2V3.800c0-1.400-1.300-2.300-4-2.300z" fill="#3f7cc0"/><circle cx="7" cy="3.5" r=".7" fill="#fff"/><path d="M9.2 16.500c3 0 3.300-1.3 3.300-2.300v-1.800H8.900v-.7h5.500c1.5 0 2.300-1.2 2.300-3.200s-.8-3.200-2.300-3.200H13v2c0 1.400-1 2.400-2.4 2.400H7.200c-1.2 0-2 .8-2 2v2.500c0 1.4 1.3 2.3 4 2.300z" fill="#f7c93d"/><circle cx="11" cy="14.5" r=".7" fill="#fff"/><path d="M11.5 12l5 2.500l-5 2.200l1-2.200z" fill="#444"/></svg><svg class="abs" style="left:675px;top:6px" width="18" height="18" viewBox="0 0 18 18"><path d="M9.3 2.300a6.7 6.7 0 1 1-6.3 9l2.600-.9a4 4 0 1 0 3.700-5.400v2.800L3.6 4l5.700-3.700z" fill="#3f7fd0"/><path d="M9.3 2.300a6.7 6.7 0 0 1 6.7 6.7" fill="none" stroke="#7fb0ea" stroke-width="1"/></svg><div class="arr" style="left:698px;top:13px"></div><svg class="abs" style="left:717px;top:7px" width="6" height="18" fill="#b9b9b9"><rect x="0" y="0" width="1" height="1"/><rect x="0" y="3" width="1" height="1"/><rect x="0" y="6" width="1" height="1"/><rect x="0" y="9" width="1" height="1"/><rect x="0" y="12" width="1" height="1"/><rect x="0" y="15" width="1" height="1"/><rect x="3" y="0" width="1" height="1"/><rect x="3" y="3" width="1" height="1"/><rect x="3" y="6" width="1" height="1"/><rect x="3" y="9" width="1" height="1"/><rect x="3" y="12" width="1" height="1"/><rect x="3" y="15" width="1" height="1"/></svg><svg class="abs" style="left:728px;top:6px" width="18" height="18" viewBox="0 0 18 18"><rect x="2.5" y="1.8" width="13" height="14.4" rx="1" fill="#5b8fc9"/><rect x="2.5" y="1.8" width="3.6" height="14.4" fill="#2c3e50"/><rect x="2.5" y="15" width="13" height="1.4" fill="#23303e"/><text x="11" y="12.8" text-anchor="middle" font-family="DejaVu Sans,Liberation Sans,sans-serif" font-size="10" fill="#fff">?</text></svg><svg class="abs" style="left:758px;top:7px" width="6" height="18" fill="#b9b9b9"><rect x="0" y="0" width="1" height="1"/><rect x="0" y="3" width="1" height="1"/><rect x="0" y="6" width="1" height="1"/><rect x="0" y="9" width="1" height="1"/><rect x="0" y="12" width="1" height="1"/><rect x="0" y="15" width="1" height="1"/><rect x="3" y="0" width="1" height="1"/><rect x="3" y="3" width="1" height="1"/><rect x="3" y="6" width="1" height="1"/><rect x="3" y="9" width="1" height="1"/><rect x="3" y="12" width="1" height="1"/><rect x="3" y="15" width="1" height="1"/></svg><svg class="abs" style="left:775px;top:7px" width="6" height="18" fill="#b9b9b9"><rect x="0" y="0" width="1" height="1"/><rect x="0" y="3" width="1" height="1"/><rect x="0" y="6" width="1" height="1"/><rect x="0" y="9" width="1" height="1"/><rect x="0" y="12" width="1" height="1"/><rect x="0" y="15" width="1" height="1"/><rect x="3" y="0" width="1" height="1"/><rect x="3" y="3" width="1" height="1"/><rect x="3" y="6" width="1" height="1"/><rect x="3" y="9" width="1" height="1"/><rect x="3" y="12" width="1" height="1"/><rect x="3" y="15" width="1" height="1"/></svg><svg class="abs" style="left:786px;top:6px" width="18" height="18" viewBox="0 0 18 18"><path d="M2 3c2 1 4-1 6.5 0s4.500-.5 7 .500v12c-2.500-1-4.500.500-7-.500s-4.5 1-6.5 0z" fill="#a9d6a0"/><path d="M3 6c3-1 5 2 8 0s3 1 4 1M4 12c2-2 4 1 7-1" fill="none" stroke="#d6ecd0" stroke-width="1.3"/><path d="M7 5c2 0 3 1.5 2.5 3.5" fill="none" stroke="#7fb3d5" stroke-width="1"/><path d="M10.5 11l5.5 5l-2.500.500l-3.500-2.500z" fill="#4a7d2c"/><circle cx="12.5" cy="13" r="1.8" fill="#d6c23a"/></svg><svg class="abs" style="left:811px;top:6px" width="18" height="18" viewBox="0 0 18 18"><path d="M2 3h14v13H2z" fill="#f4e2b0"/><path d="M2 3h5v5H2z" fill="#4fae5e"/><path d="M8 9l8 7H6z" fill="#5b8fd0"/><path d="M2 10h6v6H2z" fill="#f0d090"/><path d="M15.5 1.500L9 11" stroke="#7a4a20" stroke-width="2.3" stroke-linecap="round"/><path d="M9 11l-2.5 3.500l3.500-2z" fill="#e9c46a"/></svg><svg class="abs" style="left:841px;top:7px" width="6" height="18" fill="#b9b9b9"><rect x="0" y="0" width="1" height="1"/><rect x="0" y="3" width="1" height="1"/><rect x="0" y="6" width="1" height="1"/><rect x="0" y="9" width="1" height="1"/><rect x="0" y="12" width="1" height="1"/><rect x="0" y="15" width="1" height="1"/><rect x="3" y="0" width="1" height="1"/><rect x="3" y="3" width="1" height="1"/><rect x="3" y="6" width="1" height="1"/><rect x="3" y="9" width="1" height="1"/><rect x="3" y="12" width="1" height="1"/><rect x="3" y="15" width="1" height="1"/></svg><svg class="abs" style="left:852px;top:6px" width="18" height="18" viewBox="0 0 18 18"><path d="M3 2v13.500h13" fill="none" stroke="#a9a9a9" stroke-width="1"/><path d="M3.5 13.500c3-.5 4-1 5.500-3.500s3-5.5 6.500-6" fill="none" stroke="#e05a6a" stroke-width="1"/><path d="M3.5 14c3-.3 5-2.5 7-3.500s3-.8 5-1" fill="none" stroke="#7a8fe0" stroke-width=".9"/><path d="M4.5 15.500v1M6.5 15.500v1M8.5 15.500v1M10.5 15.500v1M12.5 15.500v1M14.5 15.500v1" stroke="#bbb" stroke-width=".6"/></svg></div>
<div id="ltb" class="abs"><svg class="abs" style="left:8px;top:5px" width="18" height="6" fill="#b9b9b9"><rect x="0" y="0" width="1" height="1"/><rect x="0" y="3" width="1" height="1"/><rect x="3" y="0" width="1" height="1"/><rect x="3" y="3" width="1" height="1"/><rect x="6" y="0" width="1" height="1"/><rect x="6" y="3" width="1" height="1"/><rect x="9" y="0" width="1" height="1"/><rect x="9" y="3" width="1" height="1"/><rect x="12" y="0" width="1" height="1"/><rect x="12" y="3" width="1" height="1"/><rect x="15" y="0" width="1" height="1"/><rect x="15" y="3" width="1" height="1"/></svg><svg class="abs" style="left:6px;top:14px" width="18" height="18" viewBox="0 0 18 18"><rect x="1.5" y="6" width="9" height="9" rx="1" transform="rotate(-18 6 10.500)" fill="#d9672f"/><rect x="3.5" y="4.5" width="9" height="9" rx="1" transform="rotate(-8 8 9)" fill="#f3c53a"/><rect x="6" y="1.5" width="9.5" height="9.5" rx="1" transform="rotate(8 10.7 6.200)" fill="#5b8fc9"/><rect x="10.8" y="10.8" width="6.2" height="6.2" rx="1.2" fill="#4e9a4e"/><path d="M13.9 12v3.800M12 13.900h3.8" stroke="#fff" stroke-width="1.4"/></svg><svg class="abs" style="left:6px;top:39px" width="18" height="18" viewBox="0 0 18 18"><path d="M1.5 7.500l7-3l7.5 3v5.500l-7.5 3.500l-7-3.500z" fill="#e9c21f" stroke="#b8960f" stroke-width=".7"/><path d="M1.5 7.500l7 3l7.500-3" fill="none" stroke="#b8960f" stroke-width=".7"/><circle cx="8.5" cy="5.8" r="4.5" fill="#4f81bd"/><path d="M5.5 4c1-1 2.500-1.5 3.500-1s0 2-1 2.500s-2 .500-2.500-1.500zM10 5.500c1-.5 2.5 0 2.5 1.500s-2 1.500-2.5 0z" fill="#cfe0f4"/><rect x="10.8" y="10.8" width="6.2" height="6.2" rx="1" fill="#f5e38c" stroke="#c4a000" stroke-width="1.1"/></svg><svg class="abs" style="left:6px;top:63px" width="18" height="18" viewBox="0 0 18 18"><path d="M2.5 3L7 14.500L13.5 3.5" fill="none" stroke="#4a5a66" stroke-width="1.1"/><circle cx="2.5" cy="3" r="1.3" fill="#fff" stroke="#4a5a66" stroke-width=".8"/><circle cx="7" cy="14.5" r="1.3" fill="#fff" stroke="#4a5a66" stroke-width=".8"/><circle cx="13.5" cy="3.5" r="1.3" fill="#fff" stroke="#4a5a66" stroke-width=".8"/><path d="M11.5 3.300l4.500-.8" stroke="#4a5a66" stroke-width=".9"/><circle cx="16" cy="2.5" r="1" fill="#fff" stroke="#4a5a66" stroke-width=".7"/><rect x="10.8" y="10.8" width="6.2" height="6.2" rx="1" fill="#f5e38c" stroke="#c4a000" stroke-width="1.1"/></svg><svg class="abs" style="left:6px;top:87px" width="18" height="18" viewBox="0 0 18 18"><path d="M1.8 16C3 9 7 3.5 16 1.800C15 7 11 10.5 4.5 12.500z" fill="#5b8fc9" stroke="#3f6ea8" stroke-width=".6"/><path d="M1.8 16c1.500-4 4-7 9-10.5" fill="none" stroke="#2f5d8f" stroke-width=".8"/><rect x="10.8" y="10.8" width="6.2" height="6.2" rx="1" fill="#f5e38c" stroke="#c4a000" stroke-width="1.1"/></svg><svg class="abs" style="left:6px;top:111px" width="18" height="18" viewBox="0 0 18 18"><rect x="3" y="4.5" width="11.5" height="8.5" rx="1.2" fill="#5b8fc9"/><path d="M5 4.500v-2.300M7.3 4.500v-2.300M9.6 4.500v-2.300M11.9 4.500v-2.300M5 13v2.300M7.3 13v2.300M9.6 13v2.3" stroke="#5b8fc9" stroke-width="1.2"/><rect x="10.8" y="10.8" width="6.2" height="6.2" rx="1" fill="#f5e38c" stroke="#c4a000" stroke-width="1.1"/></svg></div><div id="lsep" class="abs"></div>
<div id="dock" class="abs"></div>
<div class="abs" style="left:35px;top:118px;line-height:17px">Layers</div>
<svg class="abs" style="left:263.5px;top:119.5px" width="12" height="12" viewBox="0 0 12 12"><rect x="0.6" y="0.6" width="10.8" height="10.8" rx="2.4" fill="none" stroke="#5a5a5a" stroke-width="1"/><rect x="4.800" y="3" width="4.200" height="4.200" rx=".5" fill="none" stroke="#5a5a5a" stroke-width="1"/><rect x="3" y="4.800" width="4.200" height="4.200" rx=".5" fill="#efefef" stroke="#5a5a5a" stroke-width="1"/></svg><svg class="abs" style="left:277.5px;top:119.5px" width="12" height="12" viewBox="0 0 12 12"><rect x="0.6" y="0.6" width="10.8" height="10.8" rx="2.4" fill="none" stroke="#5a5a5a" stroke-width="1"/><path d="M3.3 3.3L8.7 8.7M8.7 3.3L3.3 8.7" stroke="#4a4a4a" stroke-width="1.9"/></svg>
<svg class="abs" style="left:38px;top:141px" width="18" height="18" viewBox="0 0 18 18"><path d="M2.300 11.200l3.500-2.200l3.200 3.400l-3.600 2z" fill="#e3342f"/><path d="M2.800 8.600l5-3l3.600 4.200l-5 3z" fill="#f3d03a"/><path d="M4.200 6.300l3.200-1.900l2.200 2.600l-3.200 1.900z" fill="#4f81bd"/><path d="M8.300 10.800l2.400-2.300l2.600 2.800l-2.300 2.700c-.8.800-2 .8-2.700 0c-.8-.9-.8-2.300 0-3.200z" fill="#d9a866" stroke="#b98a4a" stroke-width=".5"/><path d="M11.600 9.900L16 4.200" stroke="#d8883a" stroke-width="2" stroke-linecap="round"/></svg><svg class="abs" style="left:63px;top:141px" width="18" height="18" viewBox="0 0 18 18"><rect x="2" y="7" width="8.5" height="8.5" fill="#f2f2f2" stroke="#8f8f8f" stroke-width=".9"/><rect x="4.5" y="4.5" width="8.5" height="8.5" fill="#f2f2f2" stroke="#8f8f8f" stroke-width=".9"/><path d="M7 9V3.500a1.8 1.8 0 0 1 3.6 0v6" fill="none" stroke="#4f81bd" stroke-width="1.2"/><rect x="10.5" y="10.5" width="6.5" height="6.5" rx="1.2" fill="#4e9a4e"/><path d="M13.750 11.800v4M11.750 13.800h4" stroke="#fff" stroke-width="1.4"/></svg><svg class="abs" style="left:88px;top:141px" width="18" height="18" viewBox="0 0 18 18"><path d="M1.5 8.500c3-5 10-5 14 0c-4 4.500-11 4.500-14 0z" fill="#f4f4f4" stroke="#9a9a9a" stroke-width=".9"/><path d="M2 6.500c3-3.5 9-3.5 12.500-.5" fill="none" stroke="#b4b4b4" stroke-width=".8"/><circle cx="8.5" cy="8.3" r="3.2" fill="#5b8fc9"/><circle cx="8.5" cy="8.3" r="1.4" fill="#1c2b3a"/><path d="M11.5 13.500h5l-2.5 2.800z" fill="#555"/></svg><svg class="abs" style="left:113px;top:141px" width="18" height="18" viewBox="0 0 18 18"><path d="M2 2.800h14l-5.3 6v7l-3.400-2v-5z" fill="#5b8fc9" stroke="#3f6ea8" stroke-width=".7"/><path d="M2.3 3.500h13.4" stroke="#f3d03a" stroke-width="2"/></svg><svg class="abs" style="left:138px;top:141px" width="18" height="18" viewBox="0 0 18 18"><text x="1" y="12" font-family="DejaVu Serif,Liberation Serif,serif" font-size="15" fill="#6a2c7a">ε</text><path d="M9.5 10.500h7l-2 3v3.500h-3v-3.500z" fill="#b4b4b4" stroke="#8f8f8f" stroke-width=".5"/></svg><svg class="abs" style="left:175px;top:141px" width="18" height="18" viewBox="0 0 18 18"><path d="M3 2.500h3v3H3zM3 7.500h3v3H3zM3 12.500h3v3H3z" fill="#f5a623" stroke="#c97f10" stroke-width=".5"/><path d="M4.5 1v16" stroke="#999" stroke-width=".6" stroke-dasharray="1 1"/><path d="M11.5 2h3v7.500h2.500l-4 5.500l-4-5.500h2.500z" fill="#4f81bd" stroke="#2f5d8f" stroke-width=".7"/></svg><svg class="abs" style="left:200px;top:141px" width="18" height="18" viewBox="0 0 18 18"><path d="M3 2.500h3v3H3zM3 7.500h3v3H3zM3 12.500h3v3H3z" fill="#f5a623" stroke="#c97f10" stroke-width=".5"/><path d="M4.5 1v16" stroke="#999" stroke-width=".6" stroke-dasharray="1 1"/><path d="M11.5 16h3V8.500h2.500l-4-5.500l-4 5.500h2.500z" fill="#4f81bd" stroke="#2f5d8f" stroke-width=".7"/></svg><svg class="abs" style="left:225px;top:141px" width="18" height="18" viewBox="0 0 18 18"><rect x="2.5" y="2.5" width="11" height="11" rx=".8" fill="#f2f2f2" stroke="#7a7a7a" stroke-width="1"/><rect x="10.3" y="11.5" width="6.5" height="4.8" rx="1.2" fill="#e8384f"/><path d="M11.8 13.900h3.5" stroke="#fff" stroke-width="1.3"/></svg><div class="arr" style="left:161px;top:148px"></div>
<div id="tree" class="abs"></div><div id="row" class="abs"></div>
<div class="abs" style="left:55px;top:169px;width:14px;height:14px;background:#fff;border:1px solid #e8e8e8"></div><svg class="abs" style="left:56px;top:170px" width="12" height="12" viewBox="0 0 12 12"><path d="M2.300 6.300L5 9.500L9.900 2" fill="none" stroke="#000" stroke-width="1.800"/></svg><div class="abs" style="left:75px;top:168px;width:16px;height:16px;background:#95a5a0;border:1px solid #66726f"></div>
<div class="abs" style="left:97px;top:169px;line-height:17px;color:#fff;font-weight:bold;text-decoration:underline;text-underline-offset:2px">oceans</div>
<div class="abs" style="left:31px;top:686px;width:74px;height:23px;background:#dedede;border:1px solid #bebebe;border-top:none;border-radius:0 0 4px 4px"></div>
<div class="abs" style="left:43px;top:690px;line-height:17px">Browser</div>
<div class="abs" style="left:105px;top:685px;width:63px;height:26px;background:#f5f5f5;border:1px solid #bebebe;border-top:none;border-radius:0 0 4px 4px"></div>
<div class="abs" style="left:116px;top:691px;line-height:17px">Layers</div>
<div id="canvasframe" class="abs"></div>
<svg width="1060" height="594" viewBox="0 0 1060 594" style="position:absolute;left:298px;top:117px;background:#fff">
<path fill="#bdb196" stroke="#232323" stroke-width="1" stroke-linejoin="round" d="M530 -49.2L631 -34.2L669.8 -19.8L697.7 -6L745.8 26.2L790.4 68.8L793.6 72.4L801.5 82L815.8 101.4L818.9 106L821.9 110.6L824.7 115.1L827.4 119.6L829.9 123.9L832.4 128.2L834.7 132.4L836.9 136.6L839 140.7L841 144.7L842.9 148.7L844.7 152.6L846.5 156.4L848.1 160.2L849.7 163.9L851.2 167.5L852.6 171.2L854 174.7L855.3 178.2L856.5 181.7L857.7 185L858.8 188.4L859.9 191.7L860.9 194.9L861.9 198.1L862.8 201.3L863.7 204.4L864.6 207.5L865.4 210.5L866.1 213.5L866.8 216.4L867.5 219.3L868.2 222.2L868.8 225L869.4 227.8L869.9 230.6L870.4 233.3L870.9 236L871.4 238.6L871.8 241.2L872.2 243.8L872.6 246.4L873 248.9L873.3 251.4L873.6 253.8L873.9 256.2L874.2 258.6L874.5 261L874.7 263.3L874.9 265.6L875.1 267.9L875.3 270.1L875.5 272.4L875.6 274.6L875.8 276.7L875.9 278.9L876 281L876.1 283.1L876.1 285.2L876.2 287.2L876.3 289.2L876.3 291.2L876.3 293.2L876.3 295.2L876.3 297.1L876.3 299L876.3 301L876.3 303L876.3 305L876.2 307L876.1 309L876.1 311.1L876 313.2L875.9 315.3L875.8 317.5L875.6 319.6L875.5 321.8L875.3 324.1L875.1 326.3L874.9 328.6L874.7 330.9L874.5 333.2L874.2 335.6L873.9 338L873.6 340.4L873.3 342.8L873 345.3L872.6 347.8L872.2 350.4L871.8 353L871.4 355.6L870.9 358.2L870.4 360.9L869.9 363.6L869.4 366.4L868.8 369.2L868.2 372L867.5 374.9L866.8 377.8L866.1 380.7L865.4 383.7L864.6 386.7L863.7 389.8L862.8 392.9L861.9 396.1L860.9 399.3L859.9 402.5L858.8 405.8L857.7 409.2L856.5 412.6L855.3 416L854 419.5L852.6 423L851.2 426.7L849.7 430.3L848.1 434L846.5 437.8L844.7 441.6L842.9 445.5L841 449.5L839 453.5L836.9 457.6L834.7 461.8L832.4 466L829.9 470.3L827.4 474.6L824.7 479.1L821.9 483.6L818.9 488.2L815.7 492.9L812.4 497.6L808.9 502.5L805.2 507.4L801.3 512.4L797.2 517.5L792.8 522.7L788.2 528L783.2 533.4L778 538.9L772.4 544.5L766.4 550.2L760 556L753.2 562L688.6 605L669.8 614L631 628.4L530 643.5L429 628.4L390.2 614L371.4 605L306.8 562L300 556L293.6 550.2L287.6 544.5L282 538.9L276.8 533.4L271.8 528L267.2 522.7L262.8 517.5L258.7 512.4L254.8 507.4L251.1 502.5L247.6 497.6L244.3 492.9L241.1 488.2L238.1 483.6L235.3 479.1L232.6 474.6L230.1 470.3L227.6 466L225.3 461.8L223.1 457.6L221 453.5L219 449.5L217.1 445.5L215.3 441.6L213.5 437.8L211.9 434L210.3 430.3L208.8 426.7L207.4 423L206 419.5L204.7 416L203.5 412.6L202.3 409.2L201.2 405.8L200.1 402.5L199.1 399.3L198.1 396.1L197.2 392.9L196.3 389.8L195.4 386.7L194.6 383.7L193.9 380.7L193.2 377.8L192.5 374.9L191.8 372L191.2 369.2L190.6 366.4L190.1 363.6L189.6 360.9L189.1 358.2L188.6 355.6L188.2 353L187.8 350.4L187.4 347.8L187 345.3L186.7 342.8L186.4 340.4L186.1 338L185.8 335.6L185.5 333.2L185.3 330.9L185.1 328.6L184.9 326.3L184.7 324.1L184.5 321.8L184.4 319.6L184.2 317.5L184.1 315.3L184 313.2L183.9 311.1L183.9 309L183.8 307L183.7 305L183.7 303L183.7 301L183.7 299L183.6 297.1L183.7 295.2L183.7 293.2L183.7 291.2L183.7 289.2L183.8 287.2L183.9 285.2L183.9 283.1L184 281L184.1 278.9L184.2 276.7L184.4 274.6L184.5 272.4L184.7 270.1L184.9 267.9L185.1 265.6L185.3 263.3L185.5 261L185.8 258.6L186.1 256.2L186.4 253.8L186.7 251.4L187 248.9L187.4 246.4L187.8 243.8L188.2 241.2L188.6 238.6L189.1 236L189.6 233.3L190.1 230.6L190.6 227.8L191.2 225L191.8 222.2L192.5 219.3L193.2 216.4L193.9 213.5L194.6 210.5L195.4 207.5L196.3 204.4L197.2 201.3L198.1 198.1L199.1 194.9L200.1 191.7L201.2 188.4L202.3 185L203.5 181.7L204.7 178.2L206 174.7L207.4 171.2L208.8 167.5L210.3 163.9L211.9 160.2L213.5 156.4L215.3 152.6L217.1 148.7L219 144.7L221 140.7L223.1 136.6L225.3 132.4L227.6 128.2L230.1 123.9L232.6 119.6L235.3 115.1L238.1 110.6L241.1 106L244.2 101.4L258.5 82L266.4 72.4L269.6 68.8L314.2 26.2L362.3 -6L390.2 -19.8L429 -34.2L530 -49.2Z"/>
<path fill="#fff" d="M301.6 83.5L302.9 85.3L302.3 87.9L303.6 87.2L305.8 88.4L304.9 89.5L306.5 91.1L308.4 91.2L310.4 93.8L312.9 95.2L313.6 96.2L316 96.1L317.3 98.2L318.5 99.4L320.6 101.4L321.5 104.3L322.8 105.2L325.3 103.7L328 102.9L329.9 104.1L333.4 102.8L336.5 102.4L336.4 104.6L338.1 103.9L339.8 101.8L340.5 102.6L340.6 107.3L344.4 104.9L342.6 108.3L344.8 108.1L346.2 107L347.8 107.7L349.1 110.2L351.7 112.7L353.4 114L355 114L356 116.7L352.7 118.3L355 119.8L359.5 120.3L361.1 119.9L361.6 122.7L364.3 121L363.6 118.9L365.3 117.7L367.2 118L368.7 117.8L369.4 119.1L369.9 121.6L371.7 121.7L373.6 124.1L376.3 123.9L378.5 124.5L379.5 122L381.2 121.6L383 123.4L381.2 127.2L383.7 124.2L384.8 124.6L387.4 120.7L386.9 117.8L386 115.8L388.4 111.1L391.7 108.3L393.3 109.5L393.8 111.7L393.6 116.9L391.3 118.7L393.8 120.1L391.9 124.2L395.4 121.4L396.1 124.3L394.4 127.2L394.8 130L397.6 127.6L400.1 124.4L402 120L404.1 120.7L406 121.7L407.3 124.1L406.6 126L404.6 127.9L404.9 130.1L404 132L399.9 134.1L397.5 134.3L396.3 132.9L395.1 134.7L392.4 137.5L391.3 139L388.5 141.2L386.1 141.1L384.2 142.3L383.2 144.6L381.2 144.7L378.1 147.3L374.9 150.8L373.2 153.4L371.8 157.2L374.1 158.1L373.8 161.2L373.8 163.7L376.4 163.4L379.1 165.1L380.5 166.5L381.3 168.1L383.2 169.2L384.6 170.6L387.4 171.1L389.2 171.6L388.2 174.1L388 177.1L388.4 180.4L390.3 183.3L391.9 182.5L393.6 179.7L393.9 175L393.1 173.4L396.2 172.3L398.7 170.4L400.3 168.4L400.7 166.4L400.3 163.6L398.9 161.1L401.9 158L402.1 154.9L403.2 149.7L404.6 149.1L407.1 150.3L408.7 150.9L410.3 150.2L411.5 151.5L412.9 153.6L413.1 154.9L415.9 155.5L415.1 158.2L414.6 162.2L416 162.8L416.8 164.8L419.6 163.3L422.1 160L423.6 158.7L424.2 161.6L425.4 165.7L426.4 169.4L425.3 171.2L427.2 173L428.4 174.8L431 175.7L431.9 176.6L432.1 179.1L433.4 179.5L433.9 180.6L433.4 183.7L432 184.6L430.5 185.5L427.5 186.3L424.8 188.4L421.8 188.6L418.1 187.8L415.5 187.6L413.6 187.7L411.7 189.5L409.2 190.6L405.9 193.9L403.3 196.2L404.9 195.8L408.5 192.6L412.7 190.6L415.4 190.5L416.7 191.9L414.7 193.6L414.7 196.4L415 198.3L417.1 199.7L420.1 199.5L422.4 196.7L422.2 198.6L423.2 199.6L420.7 201.1L416.5 202.4L414.5 203.3L412.2 205L410.8 204.8L411.1 202.6L414.6 200.7L411.7 200.7L409.6 200.9L409.8 201.7L407.7 202.8L405.6 203.6L403.6 204.3L402.3 205.7L401.9 206.2L401.7 207.5L402 208.9L402.8 209L402.8 208L403.2 208.6L402.9 209.3L401.6 209.6L400.8 209.6L399.3 209.9L397.4 210.1L395.8 210.7L398.6 210.4L399 210.9L396.3 211.5L395.2 211.4L395.3 211.2L394.6 211.8L395.1 211.9L394.4 213.7L392.7 215.4L392.7 214.8L392.3 214.7L391.8 214L392 215.4L392.4 215.8L392.2 216.7L391.5 217.6L390.2 219.5L390 219.4L390.8 217.8L390 216.8L390.2 214.8L389.6 215.8L389.8 217.4L388.6 217L389.8 217.8L389.5 220L390 220.2L390 221L389.9 223.4L388.5 225L386.4 225.7L385 227L384.1 227.1L383 227.9L382.6 228.7L380.3 230.1L379.1 231.1L378 232.5L377.5 234L377.7 235.6L378 237.5L378.7 239.1L378.6 240.1L379.1 242.6L378.9 244.1L378.7 244.9L378.1 246.2L377.5 246.5L376.6 246.2L376.4 245.3L375.8 244.8L375 242.9L374.3 241.2L374.1 240.3L374.7 238.9L374.3 237.6L373.1 235.7L372.4 235.4L370.4 236.3L370.1 236.2L369.3 235.1L368.2 234.5L366 234.8L364.4 234.5L362.9 234.6L362.1 234.9L362.3 235.5L362.2 236.4L362.5 236.9L362.1 237.2L361.5 236.8L360.7 237.2L359.3 237.1L358.1 235.9L356.4 236.1L355.1 235.6L353.9 235.7L352.2 236.2L350.3 237.8L348.3 238.7L347.1 239.8L346.5 240.8L346.3 242.3L346.2 243.4L346.5 244.1L345.5 246.1L345 247.6L344.5 250.6L344.2 251.6L344.4 252.8L344.9 253.9L345.1 255.5L346.2 257.1L346.5 258.3L347.2 259.4L349.2 260L349.9 260.9L351.6 260.3L353.1 260.1L354.5 259.7L355.8 259.4L357.1 258.6L357.6 257.3L358 255.5L358.3 254.9L359.7 254.4L361.8 253.9L363.4 254L364.6 253.9L365 254.3L364.9 255.3L363.7 256.6L363.2 257.8L363.5 258.2L363.1 259.1L362.5 260.7L362.1 260.2L361.7 260.2L361.6 261.3L362 260.6L361.9 261.1L361.5 262L361.7 262.3L361.4 263.1L361.5 263.3L361.2 264.3L360.8 264.8L360.5 264.9L360 265.6L360.6 266L360.8 265.7L361.3 266L361.5 266L362 265.7L362.5 265.7L362.7 265.8L363 265.7L363.9 265.9L364.8 265.9L365.4 265.7L365.7 265.4L366.3 265.5L366.7 265.7L367.2 265.6L367.6 265.5L368.4 265.7L368.7 265.8L369.3 266.2L369.8 266.7L370.5 267L371 267.5L370.8 267.7L370.7 268.2L370.8 268.9L370.3 269.6L370.1 270.4L370 271.3L370 271.8L370 272.7L369.7 272.9L369.5 273.8L369.6 274.3L369.2 274.8L369.3 275.4L369.5 275.7L370 276.8L370.7 277.6L371.5 278.4L372.2 279.1L372.1 279.6L372.9 279.7L373.1 279.5L373.6 280L374.6 279.8L375.4 279.3L376.6 279L377.3 278.4L378.3 278.5L378.2 278.7L379.3 278.7L380.1 279.1L380.8 279.7L381.5 280.2L382.4 280.3L383.9 278.9L384.7 278.7L384.8 278.1L385.2 276.4L386.3 275.5L387.6 275.4L387.7 275L389.2 275.2L390.8 274.2L391.5 273.7L392.5 272.8L393.2 272.9L393.7 273.4L393.3 274.1L392 274.4L392.6 275.7L392.6 276.7L391.7 277.9L392.3 279.5L393.2 279.3L393.7 277.9L393.1 277.2L393.1 275.7L395.5 274.9L395.3 274L396 273.4L396.6 274.7L397.9 274.8L399.1 275.9L399.2 276.6L400.9 276.6L403 276.4L404 277.3L405.5 277.5L406.6 276.9L406.6 276.4L409 276.3L411.3 276.3L409.7 276.8L410.3 277.8L411.8 277.9L413.2 278.9L413.5 280.5L414.5 280.4L415.2 280.9L416.5 281.6L417.6 282.9L417.7 283.9L418.4 283.9L419.4 284.9L420.1 285.6L422.4 286L422.7 285.6L424.2 285.4L426.3 286L426.9 286.2L428.3 286.7L430.3 288.3L430.6 289.1L431.3 289L431.8 290.1L432.8 293.4L433.9 293.7L433.9 295.1L432.4 296.7L433 297.3L436.4 297.6L436.5 299.5L438 298.2L440.4 298.9L443.6 300.1L444.5 301.2L444.2 302.3L446.5 301.7L450.2 302.7L453.1 302.6L455.9 304.2L458.4 306.4L459.9 307L461.6 307L462.3 307.6L462.9 310.1L463.3 311.3L462.6 314.5L461.6 315.8L459 318.5L457.8 320.7L456.5 322.4L456 322.4L455.5 323.9L455.7 327.6L455.3 330.7L455.2 332L454.6 332.8L454.4 335.5L452.6 338.1L452.4 340.2L450.9 341.1L450.5 342.4L448.5 342.4L445.5 343.2L444.3 344.1L442.2 344.7L440.1 346.4L438.6 348.5L438.5 350L438.9 351.2L438.7 353.4L438.3 354.4L437.1 355.6L435.4 359.4L433.9 361.2L432.7 362.2L432.1 364.3L431 365.6L430.3 367L428.4 368.3L427 367.9L426 368.2L424.2 367.3L422.9 367.4L421.6 366.2L421.6 367.3L424.2 369.2L424.2 370.8L425.4 371.7L425.5 372.8L424.1 375.8L421.6 377.2L417.9 377.8L415.9 377.6L416.5 379L416.4 380.8L416.9 382L415.9 382.9L414.1 383.3L412.2 382.5L411.6 383.1L412.2 385.5L413.6 386.2L414.4 385.4L415.2 386.6L413.6 387.4L412.5 389.1L412.6 391.6L412.4 392.9L410.7 393L409.6 394.4L409.4 396.3L411.5 398.1L413.3 398.5L413.2 400.9L411.4 402.5L410.9 405.7L409.5 406.8L409 408.2L410.2 411L411.8 412.5L411 412.4L409.4 412.5L408.7 413.3L407.4 414.4L407.7 417L407 417.2L404.8 416.4L402.4 414.6L399.8 413.2L398.8 411.4L398.9 409.8L397.6 408L396.3 403.4L396.5 400.8L398 398.7L395.1 398.1L396.3 395.7L396.1 391.4L398.3 392.2L398.2 386.9L396.9 386.4L396.9 389.5L395.7 389.2L395.6 385.6L395.4 381.1L396 379.4L395.1 377.1L394.5 374.4L395.3 374.3L395.8 370.5L396.6 366.8L396.9 363.4L396 360.1L396.4 358.3L395.8 355.6L396.6 352.9L396.5 348.7L396.7 344.3L396.9 339.6L396.5 336.2L395.9 333.3L393.9 332.2L393.7 331.3L389.7 329.3L386.2 327.1L384.6 325.9L383.7 324.2L384 323.7L382.2 321L380.2 317.4L378.2 313.4L377.4 312.5L376.7 311.1L375.2 309.8L373.8 309L374.4 308.1L373.4 306.3L374 304.9L375.5 303.7L376.5 302.2L376.1 301.4L375.4 302.3L374.2 301.4L374.6 300.9L374.3 299.1L375 298.9L375.3 297.6L376 296.4L375.9 295.6L377 295.2L378.3 294.4L378 293.8L378.7 293.7L378.7 292.7L379.1 292L380.1 291.9L380.9 290.7L381.6 289.7L380.9 289.2L381.3 288.1L380.9 286.3L381.4 285.8L381.1 284.1L380.4 283.1L379.7 282.5L379.3 281.4L379.8 280.9L379.4 280.8L379 280.1L378.1 279.6L377.2 279.7L376.8 280.4L376 280.9L375.6 280.9L375.4 281.4L376.3 282.4L375.8 282.7L375.5 283L374.6 283.1L374.3 281.9L374 282.2L373.4 282.1L373 281.3L372.2 281.2L371.8 281L370.9 281L370.9 281.4L370.6 281.1L369.6 280.6L369.2 280.2L369.5 279.9L369.4 279.5L368.9 279L368.2 278.6L367.5 278.3L367.4 277.7L366.9 277.4L367 278L366.6 278.4L366.2 277.9L365.6 277.7L365.3 277.3L365.4 276.7L365.7 276.1L365.1 275.8L365.6 275.4L365 274.8L364.1 273.9L363.7 273.3L362.9 272.6L362 271.7L362.3 271.4L362.6 271.7L362.7 271.6L362.4 270.9L361.9 270.8L361.6 271.2L360.5 271.2L359.8 271L359.1 270.6L358 270.4L357.5 270L356.5 269.6L355.3 269.6L354.5 269.2L353.5 268.3L351.5 266.1L350.5 265.4L349 264.9L348 265L346.4 265.8L345.4 266L344.1 265.4L342.7 265L340.9 264.1L339.5 263.7L337.4 262.8L335.9 261.7L335.5 261.2L334.4 261L332.5 260.3L331.8 259.4L329.9 258.1L329.1 256.8L328.7 255.7L329.4 255.5L329.3 254.9L329.8 254.3L329.8 253.6L329.3 252.6L329.2 251.7L328.7 250.6L327.3 248.4L325.6 246.6L324.9 245.2L323.4 244.2L323.1 243.7L323.6 242.3L322.7 241.7L321.7 240.6L321.5 239L320.5 238.8L319.6 237.5L318.9 236.3L318.9 235.6L318.2 233.8L317.8 231.9L318 231L316.8 230L316.1 230.1L315.2 229.4L314.7 230.4L314.8 231.5L314.7 233.3L315.2 234.3L316.3 236L316.6 236.5L316.8 236.7L316.9 237.5L317.3 237.5L317.4 239L317.9 239.6L318.2 240.5L319.2 241.7L319.6 243.8L320 244.8L320.4 245.9L320.3 247L321.2 247.1L321.9 248.2L322.4 249.2L322.3 249.6L321.4 250.4L321.1 250.4L320.8 249L319.7 247.7L318.4 246.6L317.5 246L317.8 244.3L317.7 243.1L316.9 242.4L315.8 241.3L315.4 241.6L315.1 241L314 240.4L313 239L313.2 238.9L314 239L314.8 238.2L315.1 237.1L313.9 235.4L312.9 234.7L312.4 233.2L312 231.6L311.5 229.6L311.1 227.4L311 226.2L310.1 224.7L309.2 224.4L309.2 223.6L308.1 223.4L307.6 222.7L305.9 222.4L305.5 222L305.6 220.6L304.3 217.9L303.5 214.2L303.7 213.6L303.1 212.7L302.2 210.4L302.5 208.2L301.8 206.7L302.8 204.4L303.4 202.1L303.4 199.9L304.8 197.3L306.7 192.2L307.6 188.3L307.8 185.7L307.7 184.2L308.1 183.7L310.4 185L310.5 187.8L311.2 187.1L311.7 184.7L311.8 182.1L311.6 182.1L309.1 178.7L308.3 177.2L305.5 175.5L305.5 172.6L306.5 170.7L304.7 168.9L305.4 166.3L304.2 163.5L304.9 161.8L304.4 160.4L303.3 159.1L304.1 156L303.1 152.7L303.6 149.2L302.1 148.7L299.4 148.1L297.9 146.6L296.2 142.1L295 141L292.7 139.1L290.2 138.9L287.8 136.3L286.7 134.3L284.4 134.6L283.4 137.4L282.3 137.5L280 137.8L277.8 138.8L275.5 139.2L276.4 136.9L279.2 133.2L281.6 132.4L281.7 131.3L278.4 133L275.9 135.4L272 137.6L272.3 139.8L269.3 142.2L266.7 143.4L264.4 144.2L263.2 145.8L259.6 147.2L258.2 148.9L255.4 150L254.4 149.5L252.2 150.2L249.9 151.2L247.9 152.1L244.4 152.6L244.4 151.9L247.1 150.5L249.4 149.7L252.2 148L254.5 148L256.1 146.6L259.6 144.9L260.4 144.2L262.3 143.1L264 140.2L266.1 138.1L263.5 138.8L263.3 138L261.7 139.3L261.6 137L260.4 138.3L260.8 136.2L258.3 137.4L257.2 137.2L258.4 134.7L259.4 133.4L259.1 131.6L256.5 131.9L256.2 129.6L255.6 128.3L256.9 126L256.7 123.8L258.7 121.6L261.4 119.5L263.4 117.4L264.9 117.5L265.5 118.5L268.1 116.8L269 117.5L271.1 116.5L272 114.5L271.6 113.4L273.8 112L272.8 111.8L270.5 112.3L269.4 113.1L268.8 111.7L266.2 111.5L264.6 109.8L265.1 107.7L264.9 104.5L268.3 103.2L273.3 102.1L274.6 102.6L272.8 104.8L276.2 105.7L276.9 102.4L276.2 100L276.7 97.3L276.7 94.8L275.8 92.5L278.4 90.3L281.2 91.1L284.7 89.6L286.8 87.3L290 85.6L291.9 85.6L296.3 84.4L297.3 85.3L301.6 83.5ZM406.9 105.7L406.7 108.7L409.7 105.4L414.2 104.3L414.5 109.4L413.1 112.3L416.5 111.6L418.6 110.1L420.8 112.9L422 115.3L421.5 117.2L424.6 116.7L425.1 119.6L428.1 121.7L428.9 123.6L429 127.4L425.6 128.8L428.4 131.8L430.6 133L431.8 136.6L434.2 137.2L432.9 139.6L429 143.4L427.4 141.7L426 137.9L423.8 138.1L423 140.2L424 142.4L425.7 144.3L426.1 145.3L426.2 148.7L425 151.1L423.1 149.9L419.9 146.8L421.3 150L422.4 152.1L422.4 153.3L418.3 151.5L415.4 149.2L413.9 147.3L414.8 146.4L412.9 144.3L411.2 142.3L410.9 143.3L406 143.3L405.1 141.9L407 139.4L410.1 139.8L413.5 139.8L413.4 138.4L414.6 136.7L417.8 133.4L418 131.7L417.8 130.3L416.2 128.1L413.6 126.3L414.9 125.4L414.3 122.7L413 122.2L412.4 120.6L411.1 121.7L408.1 121.8L403.1 119.8L400.4 118L398.3 116.9L397.7 115.2L400.1 113.5L398 113.1L399.7 108.6L402.7 104.9L405.1 103.3L409.3 103L406.9 105.7ZM479 64.8L484 61.1L487.6 62.1L489.8 59.6L493.7 59.4L501.7 61.4L507.3 67.8L504.9 70.3L500.6 70.2L494.5 70.2L494.8 71.5L498.9 71.2L501.9 73.7L504.4 72L504.9 74.4L503.1 78L506.4 75.9L512.2 73.7L515.5 75.1L515.9 77.9L510.7 82L509.9 83.3L505.9 84.1L508.7 84.6L506.7 88.6L505.3 92.1L504.6 97.9L505.7 101.2L503.7 101.4L501.3 102.8L503.4 105.4L503.3 109.4L501.8 109.7L503.1 113.6L500 113.8L501.4 115.6L500.7 117.2L498.7 117.7L496.7 117.6L498.1 120.5L497.9 122.3L495.3 120.5L494.4 121.5L496.2 122.7L497.8 125.2L498 128.4L495.2 129L494.3 127.4L492.8 125.1L492.9 127.8L490.9 129.7L494.8 130.1L496.8 130.4L492.4 133.4L487.9 136.1L483.3 137.1L481.6 137L479.8 138.3L477 141.8L473.3 144L472.2 144.1L469.9 144.8L467.5 145.4L465.8 147.4L465.3 149.7L464.1 151.8L461 154.2L461.2 156.8L460 159.3L458.6 162.2L456.2 162.3L454.3 159.6L451 159.3L449.7 157.5L449.3 154.3L447.4 150L447.1 147.8L447.6 144.7L446.2 141.3L447.5 138.8L446.7 137.4L449.4 133.3L452 132.2L453.1 130.6L454.2 127.7L452.1 128.9L451.1 129.3L449.6 129.8L448.1 128.3L448.8 125.6L449.9 123.6L451.3 123.7L454.1 125.1L452.2 122.3L451.3 120.7L449.7 121.1L448.8 120L451.6 116.3L451.2 114.6L451 111.4L450.9 106.4L449.7 104.4L450.4 102.4L447.8 99L445.1 98.1L441.4 97.7L438 97.4L437.1 95.5L436.2 91.9L440.3 91L443.1 91.2L438.1 88.7L436.2 85.9L437.4 83.9L443.3 82.3L449.1 80.6L450.5 78.6L448.2 75.8L450.3 73.6L456.3 70.3L458.3 70L459.1 67L462.6 65.8L466.4 65.5L469.8 66.2L470.3 68.5L474.6 65.4L476.3 68.4L477.7 69.2L479.3 71.7L477.8 67.7L479 64.8ZM590.2 234.6L587.7 234L586.1 234.3L583.9 235.6L581.2 234.6L576.8 234.2L576.4 233.5L573.2 232.9L572.5 231.9L570 231.5L567.4 232.8L566.9 233.8L567.4 235.5L566.5 236.4L565.6 237L563.6 236L560.9 235.1L559.3 234.7L558.3 232.8L555.8 231.9L554.3 231.5L551.3 231L550.6 230.6L550.1 229.6L549.1 229.6L548.8 228.4L550 227.3L550.2 225.4L549.5 223.9L550.4 222.8L550.2 222.4L548.7 223.2L548.7 222.1L547.4 221.8L545.5 222.7L543.4 222.3L541.5 222.4L539.8 223.2L538.8 222.9L535.8 223.1L532.7 223.5L530.9 224.2L529.8 225.1L527.8 225.4L526 226.6L525.2 226.6L523.3 226.1L521.5 226.3L520.4 225.3L519.1 225.3L518.5 226.7L517.2 228.9L515.8 229.8L513.9 230.8L512.7 232.2L512.5 233.3L511.7 235.2L512.1 237.8L510.5 239.5L509.6 240.1L508.1 241.5L506.3 241.7L505.3 242.6L504.1 244.7L502.8 245.4L502.1 246.7L502.1 247.8L501.5 249L500.9 249.3L499.8 250.6L499.1 252L499.2 252.7L498.6 253.7L497.8 254.3L497.7 255.2L497.6 256.1L498 255.4L499.1 257.9L498.9 258.9L499.1 259.9L499.2 261.9L499 263.7L498.4 264.7L498.6 265.8L498.1 266.8L497.2 268.2L496.3 268.5L497.3 269.3L498 270.8L497.8 271.6L498.1 273.2L499.1 272.8L498.2 273.6L498.8 274L499.2 274.8L500 274.9L501 275.8L501.5 276.1L501.8 276.5L502 277.4L502.5 277.8L503 278L503.7 278.8L504.6 279.9L505.1 282.1L506.1 283.1L507.5 283.9L508 284L509.3 285.3L510.9 286.3L512.7 287.8L514.7 288.7L515.5 288.7L517.4 288L518.8 287.5L521.1 287.1L523.6 287.5L524.5 287.5L526.2 288L528 287.5L530 286.4L532 285.7L533.6 285.3L535.2 285L536.9 285L538.3 285L539.7 286.3L540.3 287.7L541.3 288.9L542.9 288.9L543.6 288.5L544.3 288.6L546.3 287.9L546.3 288.4L547.2 289.6L548.1 289.9L548.9 291.2L548.6 292.7L547.9 294.9L548.3 295.2L548.9 295L547.9 296.6L547 298.6L546.9 299.2L548.1 301.2L549.4 302.8L551.3 304.8L552.8 305.9L553.4 308.3L553.7 308.9L554.5 310.5L555.4 313.6L554.8 314.4L555.7 317.1L556.2 317.8L556.3 318.9L556.1 320.4L555.5 321.2L554.4 322.5L553.9 323.3L553.3 325.1L553.2 325.9L552.2 329.5L552.4 330.7L552.5 332.2L554 334.2L555.3 337.8L557 340.3L557.2 341.5L557.2 343.9L557.8 347L558.6 350.5L559.3 352L560.6 353.6L561.9 356.4L562.8 358.2L563.9 360.1L563.9 361.8L563.8 364.9L564 365.5L564.9 366.1L565.5 366.2L566.2 367L567.1 366.9L568.3 366.1L569.8 365.8L571.8 364.9L572.6 365.1L573.7 364.8L575.7 365.3L576.6 364.8L577.7 365.2L578 364.6L579 364.5L580.9 363.7L582.4 362.7L583.8 361.4L586 359.2L587.2 357.7L587.7 356.6L588.6 355.5L589 355.3L590.3 354.2L590.9 353.3L591.2 351.5L591.7 350L592 348.9L591.4 347.9L592.2 347.1L596.2 345.4L597 344.6L597.3 343.8L596.9 343.4L597.4 340.5L597 338.8L595.9 337.2L596.1 335.8L596.9 335.3L598.3 333.9L599.1 333.6L601.3 331.4L603.5 330.4L605.3 329.7L606.5 328.5L608 325.7L607.6 324.7L607.7 321.6L607.5 319.9L607.6 318L607.3 317.1L606.6 316.6L605.9 314.7L605.2 313.5L605.4 312.6L605.3 312L605.8 310.3L604.6 309.6L604.5 308.5L605.4 306.1L606.2 305.5L606.6 304.2L607.2 303.4L607.5 302L608.2 301.9L608.6 301.1L610 300.3L610.9 298.9L613 296.5L614.8 295.1L617.7 293.2L619.6 291.6L621.8 289L623.4 286.8L625 284L626.2 281.5L627 279.3L627.5 277.2L627.9 276.5L627.9 275.4L628 274.3L627.9 273.7L627.2 273.7L626.3 274.4L625.3 274.6L624.4 274.9L623.8 275L622.7 275L622.1 275.4L621.1 275.5L619.5 276.1L617.4 276.4L615.6 276.9L614.6 276.9L613.7 276.1L613.3 275.2L612.7 274.9L611.9 274.3L612.9 273.9L613 273.1L612.5 272.4L611.5 271.9L610.9 271.2L609.8 270L608.7 268.9L606.5 267.9L606.1 267L605 266.1L604.4 264.3L603.2 262L602.1 261.2L601.4 260.7L600.5 258.3L600.6 255.9L599.9 253.9L597.2 251.7L597.1 250.3L597.4 250L595.6 247.7L595 246.5L594.2 245.4L592.6 242.2L591.3 240.1L590.4 237.9L590.9 237.5L591.3 238.5L592.1 240.7L593 241.6L593.7 242.3L594.3 242.1L594.6 240.8L594.8 239.2L595.3 238.4L595.4 238.7L595.2 239.5L595.9 241.4L597 242.8L598.2 244.5L599 246L599.6 246.5L600.1 248L600.8 249.2L601.8 249.6L602.8 250.4L604 253.9L604.3 255.3L605.6 257.2L606.5 257.6L607.9 258.9L608.5 260.6L609.6 262.3L610.6 263L610.8 263.8L611.4 264.4L611.7 265.2L611.8 266.1L611.6 266.5L611.8 267.4L612 268.3L612.4 269.8L612.8 270.3L612.7 271.4L613.3 272.6L614.6 272.7L615.2 272.4L616.2 272.4L616.4 271.9L616.9 271.8L617.3 271.3L617.8 271.1L619.4 271L620.6 270.7L621.7 269.8L622.3 269.9L623.1 269.8L624.8 268.4L627.8 267.5L629.7 266.6L630 265.1L631.4 264.5L633.5 263.7L634.5 263.9L635.4 263.3L635.4 262.5L636.1 262L637.3 262L637.7 261.6L637.8 260.6L639 259.8L639.8 259.8L640 259.6L639.7 258.2L639.9 257.2L640.3 256.7L641.2 256.8L641.8 255.4L642.5 254.7L642.8 254.1L643.4 252.9L643.4 252.4L642.7 252.2L642.1 251.5L641.1 250.3L640 249.9L638.6 249.7L637.5 249L636.5 247.5L636.1 245.9L636.4 244.6L636.2 244.4L635.7 245.2L634.6 246.5L633.3 247.8L632.1 249.3L630.9 249.2L629.4 249.2L627.9 249.5L627.5 249L627.1 248.3L627.4 247L627.3 245.8L626.6 245.2L626.1 245.4L625.7 246.5L625.9 248L625.6 247.5L624.7 246.2L624.4 245.5L624.6 244.8L624.4 244L623 243.1L622.7 242.4L621.7 241.9L620.8 240.1L620.1 238.5L619.7 237L620.8 237.1L621.5 236.3L622.7 237L623.7 236.6L625.3 239.5L626.8 241.4L628.6 242L630.7 243.6L633 244.3L634.8 243.3L636.3 242.9L637.2 243.2L638.2 245.8L640.4 246L642.5 246.5L646.1 247.1L648.8 246.7L651.8 246.7L655.3 246.2L656.9 247.8L657.6 249.3L659 249.8L661.4 251.6L662.1 252.4L661.2 253.2L663.9 255.7L665.3 255.9L667.9 254.6L668.5 256.6L668.7 259.1L669.4 261.7L670.5 265.6L672.4 268.4L672.8 269.7L673.4 272.2L674.5 274.1L675.3 275L676.1 277L677.1 279.8L678.9 281.6L679.7 281.1L680.3 279.7L682 279.1L681.4 278.5L682.2 277L683.2 276.9L683.1 273.5L683.8 271.6L683.6 269.9L683 267.3L683.5 265.7L684.4 265.6L686.1 264.9L687 264.3L686.9 263.4L688.7 262.1L690 260.7L692 258.3L694.6 256.8L695.4 255.6L695.3 254L697.6 253.5L698.9 253.5L699 252.7L700.4 253.1L700.6 252.7L701.5 253.1L701.9 252L701.7 251.1L703.4 251.1L704.4 252.4L704.8 253.4L705 254.5L705.7 255.6L707.2 257.3L708.4 257.5L708.2 258.3L709.9 260.7L710.5 262.7L710 265.2L711.3 265.7L712.3 265.9L714.4 264.4L715.6 263.3L716.6 265.1L717.1 267.7L717.9 270.1L718.7 271.2L718.7 273.4L719.4 274.6L719.2 277.6L718.5 280.8L718.9 281.9L719.2 280.7L720.2 281.6L721.2 282.8L721.6 283.7L722.4 284.5L722.7 286.8L723.4 287.8L723.7 289.5L724.8 290.8L725.1 291.8L727.3 293.3L729.2 294.7L730.5 294.6L730.6 294L729.8 292.2L728.8 289.9L728.9 289L728.8 287.7L728 286.4L726.8 285.2L726.4 285L724.2 283.7L723 282.6L722.6 280.9L721.8 279.1L720.5 279L720.3 277.5L720.9 275.8L721 273.7L721.6 272.8L721.7 270.6L723.2 272.1L724.9 272.1L726.7 273L727.8 275.1L728.6 276.2L730.2 276.5L731.7 277.6L731.2 279L732 280.2L734.3 278.4L735.8 276.7L737.9 275.4L739.4 274L739.5 270.4L738.3 266.6L737 264.9L735.2 263.6L733.1 260.9L731.4 258.7L731.7 257.2L733.1 255.1L735.4 253.2L736.3 252.8L738.9 253.5L738.6 254.3L739.3 255.9L740.3 255.8L740.7 253.5L742.7 253.1L745.2 251.9L746.2 250.8L746.9 251.5L748 250.5L750.1 250.2L752.5 248.3L754.9 246.1L756.2 243.4L757.3 240.3L758.3 237.7L759.3 237.4L759.5 235.5L759.1 233.4L757.5 231.6L758.3 229.1L756.7 227.3L755.1 225L753.9 222.6L751.6 221.4L752.2 219.5L753.7 218.2L754.3 216.7L756.8 215.9L756.2 214.5L754.9 214.5L753 213.6L751.4 215.6L749.7 214.9L749.4 213.8L747.8 213.4L746.4 211.7L747.1 210.5L748.8 210.2L749.6 208.4L751.2 206.4L752.6 205.3L753.9 206.7L752.9 208.6L753.6 209.6L752.8 210.9L754.7 210L755.8 208.7L758.2 207.7L760.4 208.6L760.6 209L760.5 210.5L760.8 211L760.8 212.9L760.2 212.5L761.3 213.1L761.5 213.6L763.1 213.3L764.9 215.5L763.6 216L765.1 218.6L765.1 220.6L765.6 221.9L767.3 221.6L768.6 220.5L770.1 219.9L770.6 218.4L769.9 215.4L769 213.7L766.6 210.7L765.3 209.6L764.5 209.2L764.6 208.9L764.3 207.7L765 206.9L766.1 206.4L766.6 205.5L766.8 205L767.6 204.3L767 202.4L767.3 201.4L767.8 200.3L768.6 200.4L769 198.3L770.5 197.2L772.1 198.4L773.2 198.3L775.9 194.5L777.3 190.9L778.7 187.1L778.6 184.9L779.8 180.1L778.8 174.9L777.5 171L777.6 167.4L776.4 164.6L772.4 161.3L770.4 161.4L769.9 163.2L767.9 162.7L766.2 160.8L763.3 160.8L764.1 156.3L766.4 151.4L767.8 148.1L768.6 143.1L773.6 140.8L779.1 140.4L780.2 138L784.4 140.8L783.2 138L786.9 139.9L787.5 135.9L790.1 138L788.7 133.2L787.3 128.5L790.9 124.5L794.5 127.3L795.5 124L796.3 120.6L797.5 119.4L799.3 121.8L799 127.1L798.7 132.2L797.2 137.1L795.7 141.9L796.3 145.5L796.1 146.8L797.7 152.2L801.1 157.7L805.1 165L806.7 167.3L808 163.7L807 159.9L809.2 158.6L808 154.3L810.2 151.8L808.7 150.3L808 147L809.5 146.5L806.9 140.8L804.4 140.1L803.7 138.8L803.7 134.5L802.8 131.7L805.4 131.7L807.6 130.9L814.2 128.8L813.7 126.7L814.6 123.4L815.3 119.7L816.5 118.8L819 114.1L822.6 114.2L822.3 112.8L820.9 111L819.4 110L816 106.5L812.9 104.5L815.7 105.4L815.2 104.2L817.8 100L803.4 80.5L797.7 80.6L791.6 79.9L788.8 81.4L783.1 81.9L784.3 84.4L787.9 87.1L787.2 89.4L781.4 86L779 87.6L775.5 87.7L773.1 88.8L771.8 90.5L769 89.8L766.5 86.2L763.7 84.6L760.3 84.9L755.2 88L748.7 85.6L745.3 83.1L730.2 84.7L729.9 87.4L734.1 91.6L731.2 93.4L727.4 92.9L725.8 95L722.1 93.6L723.9 99L720.4 97.9L716.2 94.7L715.7 92.5L712.9 89.6L708.9 87.8L706.7 88.6L703.2 88.7L705.6 92.4L699.2 93.6L697.4 91.4L692.5 92.1L690.7 93.5L690.9 94.9L688.2 92L687.5 93.3L684.7 92.7L682.6 92.6L684.6 87L685.1 85L683.6 82.2L681.3 80.6L676.6 79.1L672.7 80.3L672.4 81.9L670.3 79.5L666.8 79.6L667.8 77.7L664.4 76.7L662.8 79.8L663 82.5L661.5 85.5L660.2 89L655.2 89.7L652.3 92.8L651 95.9L649.4 96.3L649.4 99.9L651.7 102L649 103.3L645.5 103.9L643.5 105.3L645.8 110L648.6 113.4L644.9 111.4L642 112.2L640.2 114.4L642.1 117.3L640.2 116.8L639.1 112.6L637.4 110.4L636.7 110.6L638.3 113.6L636.8 116.9L640.4 124.2L641.6 126.3L643.4 126.4L643.6 129L644.6 133.1L645.3 131.1L644.8 134.9L643.4 136.1L643.2 137.5L641.2 137.2L641.4 134.2L641.9 131.8L641.6 128.7L639.5 126.1L637.9 121.3L636.8 117.6L634.5 113.5L632.7 111.3L629.6 110.9L629.4 116L628 120.2L630.5 126.3L634.7 131.3L632.4 130L627.8 127.7L625.3 126.8L620.4 126.2L620.1 127.6L622.3 129.6L621.3 132.3L618.9 130.3L617.1 132.1L614.3 132.6L612.4 131.4L611.5 133.8L613.5 134L612.6 136.3L610.1 135.5L606.7 135.1L603.5 136.9L601.8 136.7L600.4 134.8L595.9 134L597.5 136.1L597.2 138.4L599 140.3L598.6 142.8L596.9 141.7L595.4 141.6L593.3 143.8L592.4 145.3L593.9 147.7L592.7 148.6L588.5 146.8L587.7 148.1L588.9 149.5L585.4 149.5L584.7 146L584.4 144.5L581.4 142.1L582.5 141.6L589.9 143.7L592.3 142.6L593.6 140.7L593.1 138.3L591.5 136.7L585 133L580.7 132.5L577.8 130.3L576.5 131.8L574.7 131L574.5 129.5L576.2 128.4L571.2 125.8L568.7 126.7L566 126.7L564.1 130.1L561.7 130L558.6 131.8L556.8 134.3L554.9 136.6L552.5 139.3L549.3 146.1L546.7 150.7L543.7 154.1L539.5 156.8L538.1 158.8L538.7 165.8L539.4 168.9L541.8 170.3L543.9 169.6L547.1 166.2L548.3 168L549.7 172.1L551.3 175.2L552 177.8L553.9 177.6L554.8 175.4L556.8 175.7L557.6 173L557.9 168.2L559.6 167.5L560.9 164.1L559.2 162.5L557.9 160.4L558.7 156L561.6 153.2L563.8 150.5L563.4 148.5L564.7 146.1L567.2 145L569.6 146.6L570 148L569 148.7L565.7 152.4L564.5 154.4L563.9 156.3L564.9 159.1L564.9 162.1L566.5 163L567.7 164.6L570.3 163.9L573.1 162.7L576 162.4L577.9 163.7L576.2 165.4L574.5 165.6L572.7 165.2L570.6 165.6L568.6 166.5L568.9 168.2L570.1 169.2L570.7 168.8L570.6 170.6L570.5 172.7L569.2 172.8L567.6 170.8L566.2 171.8L565.5 173.6L565.6 175.7L566.1 178L563.9 178.9L563.6 180.1L561.9 180.1L561.7 179.5L560 179.1L557.9 180L555.3 181.3L554.2 182.1L551.4 180.2L550.4 181L548.7 181.5L548.7 180.6L546.9 179.9L546.9 178.9L546.4 177.6L547.5 175.6L548.4 174.8L547.2 173.6L547.7 172.7L547.7 171.3L546.4 172.1L544.3 173.1L543.9 173.9L543.8 177.5L544.5 179L544.6 180.5L545.1 181.5L543.9 182.8L542.2 182.4L541.8 183L540.4 182.9L538.1 184L536.6 187.9L535.7 188.6L534.4 189.1L532.9 189.6L532.3 191.7L530.4 193L528.3 193.7L527.8 193L526.6 192.6L527.2 195.4L524.2 194.8L521.9 195.3L522.1 197.1L524.8 198.1L526.1 199.3L527.9 201.9L527.5 206.6L526.6 208L522.2 208.1L515.7 207.2L513.1 208.9L513.8 212.3L514.1 214.1L513.5 216.4L512.8 217.2L512.6 218.7L513 219.6L513.8 219.8L514 221.1L513.7 222.9L515.6 222.9L516.3 222.4L518 222.7L518.5 224L519.2 224.7L520.1 224.9L520.8 224.1L522 223.3L523.7 223.4L526.1 223.3L527.4 221.6L528.8 221.2L529.1 219.7L530.2 218.7L529.5 217.5L531.5 213.6L533.8 213.1L535.5 211.6L535.6 208.8L538.2 208.1L541.7 208.7L543.4 207.4L545.9 205.7L548.3 206.8L548.9 209.1L550.2 210.4L551.9 211.9L554.7 213.1L555.5 214L558 215.7L558.6 216.8L559.4 218.1L559 218.6L558.7 220.5L559.5 220.3L560.4 218.4L561.1 218.2L561.3 217.1L559.9 216.2L560.6 214.7L562.2 215.1L563.3 216.2L563.6 215.3L563.4 214.9L561.8 213.7L560.4 213.1L558.8 212.2L559.2 211.8L557.4 211.3L555.3 209.4L554.3 207.5L552.6 206.3L551.9 205.1L552.1 203.3L553.4 202.4L554.8 202.8L554.4 203.8L555.5 203.6L556.6 204L557.2 205.9L558.8 207.7L560.5 208.3L561.5 209.2L563.3 210L564.6 211.2L565.3 211.8L565 214L565.3 215.1L566.7 216.6L568.6 219.5L569 221L569.8 222.8L571.4 223.7L571.8 221.7L572.6 223.7L572.4 221.7L572.9 221.5L572.3 220.3L574.1 220.9L574 219.6L573 219L571.9 218L571.6 216.4L571.1 215L571.4 214.5L572.5 215.7L573.5 215.7L574.4 215.3L573 214L575.2 213.4L576.2 213.6L577.3 213.7L577.3 214.1L577.7 215.4L577.7 216.8L578.9 217.8L578.2 219.6L579.6 220.8L580.8 223L582.8 222.9L584.7 224.1L585.9 223.8L586.3 222.9L588.3 223L589.9 224.1L592.6 223.8L593.8 222.5L595.4 223L596.5 222.8L595.9 223.7L596.3 225.6L596.6 227.3L595.7 228.9L595.2 230.7L594.9 231.2L594.6 232.9L594.2 233.9L593.9 234.7L593 235.3L591.5 235.2L590.2 234.6ZM256.6 80.5L259.2 87.2L259.5 93.6L257.2 96.5L257.4 98.1L259.5 94.5L263.1 96.7L263.1 102.1L260.2 103.6L257.3 103.2L254.3 107.7L253 108.5L251.6 107.9L251.5 105.9L250.3 103.8L251.3 101.7L250.3 100.4L248.1 100.4L248.4 98.4L250 96.8L247.3 97.3L246.5 99.8L242.2 100ZM805.1 325L805.7 326.7L807 325.9L807.5 326.8L808.4 327.7L808.1 328.7L808.4 330.6L808.5 331.7L809 332L809.3 333.9L809 335L809.5 336.6L811.4 337.8L812.6 338.9L813.8 339.9L813.5 340.5L814.4 342L814.8 344.5L815.6 344L816.3 345.1L816.8 344.7L816.8 347.2L817.9 348.8L818.6 349.7L819.9 351.7L820.1 353.7L819.9 355.1L819.5 356.7L820 358.8L819.5 361.1L818.9 362.3L818 364.5L817.7 366L817 367.9L815.6 370.2L814 371.5L812.8 373.5L811.9 374.8L810.8 377.1L809.7 378.4L808.8 380.4L808.1 382.3L807.9 383.2L806.6 384.1L804.5 384.1L802.5 385.1L801.3 386.1L799.9 387.2L798.7 385.8L797.6 385.3L798.3 383.8L797.1 384.3L795 386.2L793.6 385.3L792.6 384.8L791.6 384.5L790 383.6L789.2 381.8L789.3 379.7L789.5 377.2L788.5 377.1L786.8 376.7L787.7 375.5L787.7 373.5L786.4 375.3L784.6 375.6L785.9 374.3L786.5 372.8L787.5 371.5L787.8 369.6L785.8 371.7L784.4 372.5L783.2 374.6L782 373.4L782.4 372L781.6 370.1L780.8 369.1L781.2 368.5L779.1 366.9L777.8 366.7L776.2 365.4L772.8 365.5L770.2 366.3L767.9 367L766.1 366.8L763.8 367.9L762.1 368.4L761.5 369.7L760.6 370.7L759 370.7L757.7 370.8L756.2 370.3L754.7 370.5L753.4 370.6L752 371.8L751.5 371.7L750.4 372.4L749.4 373.1L748 373L746.8 372.9L745.1 371.2L744.2 370.7L744.5 369.2L745.5 369L745.9 368.4L746 367.5L746.6 365.9L746.6 364.4L746 361.9L746 360.6L746.3 359.2L745.8 357.7L745.8 357L745.1 356L745.2 354.2L744.4 352.4L744.2 351.4L744.9 352.4L744.6 350.3L745.4 350.9L745.9 351.8L746 350.7L745.3 348.9L745.2 348.1L744.9 347.5L745.2 346.2L745.7 345.6L746.1 344.5L746.1 343.2L747 341.7L747 343.3L748 341.8L749.6 341.1L750.7 340.2L752.2 339.4L753.1 339.3L753.6 339.5L755.2 338.7L756.4 338.5L756.7 338L757.2 337.9L758.3 337.9L760.4 337.3L761.5 336.4L762.1 335.2L763.4 334.1L763.5 333.3L763.7 332.1L765.2 330.3L765.8 332.1L766.7 331.7L766.1 330.7L766.8 329.7L767.6 330.2L768 328.5L769.1 327.5L769.7 326.7L770.7 326.3L770.7 325.7L771.6 326L771.6 325.4L772.5 325.1L773.5 324.9L774.8 325.9L775.8 327.1L777 327.2L778.2 327.4L777.8 326.2L778.9 324.5L779.8 324L779.5 323.4L780.5 322.2L781.7 321.5L782.7 321.7L784.3 321.4L784.3 320.3L782.9 319.6L784 319.3L785.2 319.8L786.2 320.7L787.8 321.2L788.4 321L789.5 321.7L790.7 321.1L791.4 321.3L791.8 320.9L792.7 321.9L792.1 323.1L791.3 323.9L790.6 324L790.8 324.8L790.1 325.9L789.4 326.9L789.4 327.5L790.9 328.7L792.3 329.4L793.2 330.2L794.5 331.5L795 331.5L796 332.1L796.2 332.8L797.9 333.6L799.3 332.8L799.8 331.6L800.2 330.7L800.6 329.5L801.3 327.8L801.2 326.7L801.4 326.1L801.2 324.9L801.6 323.2L802 322.8L801.8 322.1L802.3 321L802.7 319.8L802.8 319.2L803.6 318.5L804.1 319.5L804.1 320.8L804.6 321.1L804.6 322L805.2 323L805.3 324.3L805.1 325ZM796.8 392.1L798.3 393.3L799.4 392.9L801 392.5L802.1 392.8L801.2 396.3L800.3 397.3L799.4 399.7L799 398.8L797.1 400.7L796.7 400.5L795.6 400.3L795.3 397.6L795.6 395.7L795.2 393L795.6 391.7L796.8 392.1ZM856 395.7L854.8 397.3L853.2 399.4L851.4 400.5L851.4 399.6L850.7 399L852.6 396.6L852.5 394.8L850.8 393.3L851.2 392.2L852.9 391.3L853.8 388.9L854.3 387L854.1 384.9L854.3 384.4L853.7 383.1L852.8 380.4L852.6 378.2L853.3 378.1L853.9 379.8L855.2 380.6L855.1 383.3L855.6 386.6L856.2 384.5L856.8 385.4L856.5 387.7L857.7 388.8L859 389.2L860.3 388.1L861.2 388.6L860 391.3L858.9 393L857.5 392.8L856.7 393.7L856.5 395.1L856 395.7ZM839.2 405.3L841.3 403.8L843 402.2L844.5 400L845.5 399.2L846.3 397.5L848 396.2L848 397.6L848.1 398.9L849.8 397.8L849.9 399.2L849.5 400.5L848.3 401.9L846.4 404.2L845 405.4L845.1 407L843.7 406.9L841.7 407.9L840.5 410L838.3 413.3L836.3 414.6L835 415.4L833.4 415.1L832.6 413.8L830.7 413.3L830.8 412L832.7 409.7L836.1 406.8L837.4 406.3L839.2 405.3ZM788.1 299.3L788.6 302.5L790.6 303.7L792.2 301.6L794.4 300.4L796.2 300.4L797.8 301.1L799.2 301.8L801.3 302.1L804.6 303.5L808.1 304.6L809.4 305.6L810.5 306.7L810.7 307.8L813.9 309.1L814.3 310.2L812.5 310.4L812.9 311.7L814.6 313.1L815.7 315.3L816.8 315.2L816.7 316.1L818.2 316.5L817.6 316.9L819.6 317.8L819.3 318.4L818 318.5L817.6 318L815.9 317.7L814 317.4L812.6 316.1L811.6 314.9L810.7 313.1L808.2 312.2L806.5 312.8L805.3 313.5L805.5 315L804 315.7L802.9 315.3L800.9 315.2L799.3 313.6L797.3 313.1L796.8 313.7L794.4 313.8L795.3 312.1L796.5 311.5L796.1 309.3L795.2 307.7L791.6 306L790 305.8L787.1 304L786.5 304.9L785.8 305.1L785.4 304.4L785.4 303.5L783.9 302.6L786 301.9L787.4 301.9L787.2 301.4L784.4 301.4L783.7 300.2L781.9 299.9L781.1 298.9L783.7 298.4L784.7 297.8L787.8 298.6L788.1 299.3ZM756.7 289.1L755.7 290.8L757.1 292.7L756.8 293.6L759 295.4L756.7 295.6L756.1 296.9L756.1 298.6L754.3 300L754.2 301.9L753.4 304.9L753.1 304.2L750.9 305.1L750.2 303.9L748.8 303.8L747.9 303.1L745.6 303.8L744.9 302.9L743.6 303L742 302.8L741.8 300.2L740.8 299.6L739.9 298L739.6 296.3L739.9 294.5L741 293.2L742.4 293.9L743.9 293.5L744.3 291.9L745.1 291.5L747.4 291.1L748.7 289.5L749.6 288.3L750.9 288.6L751.9 286.5L753.4 285.1L754.4 283.5L755.1 283.5L756.2 284.5L756.3 285.4L757.6 286L759.2 286.5L759.1 287.3L757.8 287.4L758.1 288.4L756.7 289.1ZM713.2 286.5L717.4 286.9L719.2 288.8L720.7 290.1L721.8 291L723.6 293L725.6 293.1L727.2 294.4L728.3 296L729.8 296.9L729 298.5L730.1 299.1L730.8 299.2L731.1 300.5L731.8 301.6L733.2 301.8L734.1 303L733.6 305.5L733.5 308.5L731.3 308.5L729.7 306.9L727.3 305.3L726.5 304.1L725.1 302.5L724.1 301.1L722.7 298.4L721 296.8L720.4 295.1L719.7 293.6L718 292.4L716.9 290.7L715.5 289.6L713.4 287.5L713.2 286.5ZM738.8 310.3L742.5 310.5L742.9 309.7L746.4 310.7L747.1 312L750 312.4L752.3 313.6L750 314.3L748 313.5L746.2 313.6L744.2 313.4L742.5 313L740.3 312.3L738.9 312.1L738.1 312.3L734.6 311.5L734.3 310.6L732.5 310.5L733.9 308.6L736.2 308.7L737.7 309.5L738.6 309.6L738.8 310.3ZM771 294.4L769.4 296.3L768 296.6L766.1 296.3L762.9 296.4L761.2 296.6L761 298.1L762.7 299.8L763.7 299L767.3 298.3L767.2 299.2L766.3 298.9L765.5 300L763.8 300.8L765.6 303.3L765.2 304L766.9 306.2L766.8 307.5L765.8 308.1L765.1 307.4L766 305.8L764.1 306.6L763.7 306L763.9 305.3L762.6 304.1L762.7 302.2L761.5 302.8L761.6 305.1L761.6 307.9L760.4 308.2L759.5 307.6L760.1 305.8L759.9 303.9L759.1 303.9L758.5 302.5L759.3 301.3L759.6 299.7L760.6 296.8L761 296L762.6 294.6L764.1 295.2L766.5 295.4L768.7 295.3L770.6 293.9L771 294.4ZM761.5 259.4L762.8 260L763.3 259.5L763.6 260L763.3 260.9L764.1 262.5L763.8 264.2L762.7 265L762.6 266.7L763.1 268.3L764.2 268.6L765 268.3L767.5 269.5L767.4 270.6L768 271.1L767.9 272.1L766.3 271L765.5 270L765.1 270.7L763.8 269.5L762.1 269.8L761.1 269.3L761.1 268.5L761.7 267.9L761.1 267.5L760.9 268.2L759.8 267L759.5 266.1L759.2 264.1L760.1 264.8L759.9 261.4L760.4 259.4L761.5 259.4ZM772.8 280.5L773.1 281.8L773.2 283L772.6 284.8L771.8 282.8L771 283.8L771.6 285.3L771.1 286.2L768.8 285L768.2 283.6L768.8 282.6L767.5 281.7L767 282.5L766.1 282.4L764.7 283.6L764.3 283L765 281.3L766.2 280.7L767.2 280L767.9 280.9L769.4 280.3L769.6 279.4L771 279.3L770.8 277.8L772.4 278.7L772.6 279.8L772.8 280.5ZM768.3 272L770.1 272L770.7 272.8L771.4 275.1L769.9 274.6L769.9 275.3L770.5 276.5L769.6 277L769.4 275.6L768.8 275.5L768.5 274.2L769.6 274.4L769.5 273.6L768.3 272ZM763.8 273.4L765 274.1L766.2 274.1L766.2 274.9L765.4 275.8L764.2 276.4L764.1 275.4L764.1 274.4L763.8 273.4ZM768 276.7L767.3 277.4L766.8 278.7L766.2 279.3L765 277.9L765.4 277.3L765.8 276.8L765.9 275.5L767 275.4L766.8 276.7L768.1 274.8L768 276.7ZM759.3 274.5L759.7 276.2L758.5 277.3L757.6 278.7L755.1 280.6L756 279.2L757.3 278L758.4 276.6L759.3 274.5ZM760.5 270.2L762.2 270.2L762.9 271L762.5 272.8L761.6 271.8L760.5 270.2ZM760.9 246.3L760.2 250L759.6 251.8L758.4 250L757.9 248.3L758.7 246L760 244.3L761 244.9L760.9 246.3ZM740.5 259.4L738.9 260.4L737.3 259.8L737.1 257.9L737.9 256.9L739.9 256.3L741 256.3L741.5 257.1L740.8 258.1L740.5 259.4ZM687.1 282.5L686.9 284.5L686.1 285.1L684.5 285.5L683.5 284L683.1 281.1L683.8 277.9L685.2 279L686.1 280.4L687.1 282.5ZM624.9 321.3L625.4 322.2L625.8 323.5L626 325.9L626.5 326.8L626.2 327.8L625.9 328.3L625.3 327.2L624.9 327.8L625.2 329.2L625 330.1L624.4 330.6L624.2 332.2L623.3 334.6L622.2 337.4L620.8 341.3L619.9 344.1L618.9 346.5L617.3 347L615.6 347.8L614.6 347.3L613.1 346.6L612.7 345.4L612.7 343.6L612.1 342L612 340.5L612.4 339L613.3 338.7L613.4 338L614.3 336.5L614.6 335.2L614.2 334.2L613.9 333L613.8 331.1L614.5 330L614.9 328.7L615.8 328.7L616.9 328.2L617.6 327.9L618.4 327.9L619.6 326.7L621.2 325.5L621.8 324.5L621.6 323.7L622.4 323.9L623.5 322.6L623.6 321.4L624.2 320.5L624.9 321.3ZM791.2 213L791 215.2L791.7 216.5L791.1 218.5L789 219.9L785.7 220.2L783.7 223.4L782.2 222.4L781.7 220.5L778.5 221.2L776.6 222.6L774.4 222.8L774 221.9L775.6 220.5L776.6 218.6L780.1 217.6L782.3 218L783.1 213.1L784.7 214.3L786.8 211.4L787.6 210.3L787.9 206.8L786.7 203.7L787 201.8L788.8 201.1L790.9 205L791.5 207.3L790.5 210.2L791.2 213ZM775.2 230L774.1 229.1L774.2 226.8L772.8 226.1L771.7 224.4L773.3 223.6L774.2 222.8L775.9 223.4L776.6 225.2L776.2 228.9L775.2 230ZM781.1 221.7L781.5 222.6L780.8 224.2L779.8 223.4L779 224.1L778.8 225.6L777.4 224.9L777.2 223.7L777.9 222.1L779.1 222.4L779.6 221.2L781.1 221.7ZM791.1 192.4L792.6 192.9L793.5 191.5L795 194.8L792.5 195.9L791.7 199L788.2 197.3L788.1 200.6L786.1 200.8L785 197.9L785.3 195.6L787.2 195.2L786.5 191.1L786.3 188.6L789.4 191.6L791.1 192.4ZM783.6 171.8L787.5 177.3L784.4 176.6L785 181.4L787.8 184.3L788.5 186.5L786.5 184.8L786.1 187.3L784.9 184.8L784.1 181.7L782.7 178.4L782.2 175.9L780.7 171.5L778.4 168.4L776.7 163.8L777.7 161.9L776.4 160.4L776.9 159.8L778.3 162.1L780.3 165.2L781.6 168.6L783.6 171.8ZM605.2 111.5L607.3 107.1L606.2 105.1L608.5 102.1L611.8 98.3L615.9 96.5L617.4 94.3L619.7 93.1L621.5 94.9L621.2 96.6L617.4 99.9L614.1 102.9L611.4 108L610.7 112.6L609.7 117.1L611.1 120.4L614.9 123.4L614.1 123.9L609.1 124L608.2 122.2L605.3 121.5L604.4 119.3L605.7 118.2L604.9 115.9L606.7 111.9L605.2 111.5ZM548.5 87.4L548.8 85.4L550.5 85.1L552.3 87L556.9 90.8L554 93.2L553.8 97L552.7 98.1L552.6 102.2L551 102.5L547.9 99.6L548.9 97.7L546.9 96.4L544 92L542.8 87.7L545.9 85.6L546.8 87.5L548.5 87.4ZM563.1 84.1L561.8 87.3L558.4 88.3L554.6 87.6L554.2 86.1L552.4 86.1L550.8 83.5L554.2 81.6L556.2 82.9L557.1 81L560.4 82.2L563.1 84.1ZM561.8 96.4L559.2 98.7L556.8 97.6L557.5 96.2L556.5 94.7L559 93.5L559.8 95.4L561.8 96.4ZM583.1 78L585.2 76.5L586.8 77.3L589.5 75.1L590.9 76.2L589.5 78.9L587.4 81.6L585.5 79.5ZM654.5 71.9L652.3 73.5L647.9 73L644.4 71.4L640.9 67.5L638.5 66.8L638.7 61.6L640.2 59.2L644.5 61.6L651.3 66.6L654.5 71.9ZM663 73L657.4 77.5L654.8 69.4L655.3 68.3L656.5 68.4L661.8 70.6L663 73ZM714.6 68.5L718.2 67.3L725.3 68.2L727.6 72.5L722.6 74.4L721.4 76.5L716 74.2L713.8 70.2L714.6 68.5ZM728.4 69.7L727.2 67.8L730.3 67.5L734.8 67.5L735.1 70.3L732.6 70.7L728.4 69.7ZM728.5 78.7L732 79.9L733.2 81.2L731.1 82L727.9 82.5L727.4 82.4L727.2 79.9L728.5 78.7ZM795.5 70.8L792.2 73.3L790.6 71.8L792.3 67.1ZM267.7 67.1L269.9 68.6L271.8 71.6L271 72.3L268.5 72.9L264.5 70.8ZM525 168.8L523.2 171.9L524.9 171.5L526.7 171.5L526.3 173.8L524.7 176.3L526.5 176.5L528.1 180L529.3 180.4L530.3 183.4L530.8 184.5L532.9 185L532.7 186.7L531.8 187.4L532.5 188.7L531 190.1L528.6 190.1L525.7 190.8L524.8 190.3L523.7 191.4L522.1 191.2L520.8 192.1L519.9 191.6L522.5 188.9L524.1 188.4L521.4 188L520.9 186.9L522.7 186.1L521.8 184.7L522.1 183L524.7 183.2L525 181.7L523.8 180L521.8 179.5L521.4 178.8L522 177.5L521.5 176.8L520.5 178.1L520.5 175.4L519.7 174L520.3 171.1L521.7 168.8L523 169L525 168.8ZM519.4 182L519.6 183.9L518.3 186.2L515.2 187.7L512.7 187.3L514.2 184.6L513.4 181.9L515.8 179.8L517.1 178.5L518.6 178.4L520.4 180.1L519.4 182ZM507.5 144L507 146.2L508.6 148.5L506.4 151L501.6 153.1L500.2 153.6L498.2 153.1L493.8 151.9L495.5 150.5L492.2 148.8L495.1 148.3L495.1 147.3L491.9 146.4L493.2 144.2L495.7 143.8L497.8 146.2L500.4 144.4L502.3 145.5L504.9 143.7L507.5 144ZM374.1 250.5L375.7 250.7L377.2 250.7L378.9 251.5L379.6 252.3L381.4 252.1L382 252.6L383.5 253.9L384.6 254.8L385.3 254.8L386.3 255.2L386.2 255.8L387.6 256L388.9 256.8L388.7 257.3L387.4 257.6L386.1 257.6L384.8 257.5L382 257.6L383.4 256.5L382.7 255.9L381.4 255.8L380.9 255.2L380.5 254L379.4 254L377.7 253.4L377.2 253L374.7 252.6L374.1 252.2L374.9 251.7L373 251.6L371.5 252.6L370.7 252.7L370.4 253.2L369.4 253.4L368.7 253.2L369.7 252.5L370.2 251.8L371.1 251.3L372.1 250.9L373.6 250.7L374.1 250.5ZM393.5 258L393.8 257.7L395.3 257.7L396.4 258.3L396.9 258.2L397.2 258.9L398.2 258.9L398.1 259.5L399 259.6L399.8 260.4L399.1 261.2L398.2 260.7L397.3 260.8L396.7 260.7L396.3 261.1L395.6 261.2L395.3 260.7L394.7 261L393.8 262.4L393.3 262.1L393.3 261.5L392 261.1L391.1 261.2L390 261.1L389.1 261.5L388.1 260.8L388.3 260.2L390 260.4L391.5 260.6L392.2 260.2L391.4 259.3L391.5 258.5L390.3 258.2L390.7 257.6L391.9 257.7L393.5 258ZM382.2 260.5L383.4 260.7L384.4 261.2L384.7 261.7L383.3 261.7L382.7 262.1L381.7 261.8L380.6 261L380.9 260.5L381.7 260.4L382.2 260.5ZM403.7 260.6L404.7 260.8L405 261.2L404.5 261.7L403 261.7L401.9 261.7L401.9 260.9L402.2 260.6L403.7 260.6ZM411.7 276.2L412.8 275.9L413.2 276L413.1 277.5L411.5 277.7L411.1 277.5L411.7 276.9L411.7 276.2ZM382.3 246.3L382.8 246.4L383.3 248.2L383.2 249.4L382.7 249.5L382.4 248.3L381.7 247.7L382.3 246.3ZM381.2 242.9L382.1 242.7L383.3 242.8L383.3 243.4L381.2 243.7L381.2 242.9ZM383.5 242.4L384.9 243.4L384.4 244.9L384 244.6L384.2 243.5L383.5 242.6L383.5 242.4ZM431.9 187.6L430.3 189.8L431.6 189L432.7 189.6L431.9 190.5L433.4 191.3L434.3 190.7L435.9 191.6L435.1 193.5L436.4 193.1L436.4 194.5L436.7 196.1L435.6 198.3L434.8 198.3L433.7 197.8L434.4 195.7L433.9 195.4L431.5 197.5L430.5 197.4L431.9 196.2L430.3 195.5L428.4 195.6L424.9 195.3L424.8 194.6L426 193.7L425.4 193L427.2 191.5L429.8 187.4L431.1 185.9L432.8 185.1L433.6 185.2L433.2 185.9L431.9 187.6ZM416.6 197.6L417.8 198L419.5 198.1L418.4 199L417.7 199.2L415.6 198L415.3 197.1L416.2 196.3L416.6 197.6ZM416.7 188.9L417.4 188.7L419.6 189.5L421.1 190.7L421.1 191.2L420.2 191.2L418.1 190.2L416.7 188.9ZM310.2 183.5L309.1 183.8L306.6 182.1L306.4 180.9L305.2 179.7L305.1 178.8L303.5 178L303.4 176.2L303.8 175.5L305.4 176.4L306.4 177L307.9 177.5L308.2 178.7L308.6 180.3L310 181.7L310.2 183.5ZM300 163.8L301.8 163.8L299.8 167.5L300.4 170.3L299.7 170.2L299.2 168.6L299.1 167L298.6 165.8L298.9 164.3L299.4 163.2L300 163.8ZM269.5 146.5L267.1 147.6L266.7 146.5L267.3 144.6L269.5 143.6L270.7 143.2L271.7 143.7L271.9 145.1L269.5 146.5ZM253.8 130.7L252.5 131.1L251.8 130L251.4 128.6L253.4 128.3L254.5 129.1L253.8 130.7ZM253.6 111.2L254 112.4L255.3 112.2L255.9 113.8L257.1 114.8L256.7 115.3L254.9 115.8L254.3 114.6L254.2 113.5L252.6 113.4L252.5 112.8L253.6 111.2ZM244.5 151.8L247.6 151.4L247.7 152L244.9 152.7L244.5 151.8ZM372.2 104.8L374 103.1L375.7 98.2L377.3 97.8L378.3 99L378.8 101.3L377.3 105.9L376.1 109.1L377.4 111.9L379.1 114.5L378 116.3L375.3 116.1L375.5 117.9L374.3 119.3L371.8 118.1L369.8 116.3L367.9 116.2L364.3 116.9L360.1 116.6L357.2 116.3L357.4 114.2L356 112.5L354.4 112.6L354.4 108.7L355.7 108.5L358.4 108.4L360.4 109.1L362.8 108.9L360.5 107.1L357.1 106.6L355.1 105.9L355.3 104.1L359.7 103.2L357.5 102.6L355.6 100.7L359 97.6L361.1 96L366.7 94.3L367.6 95.7L365.5 97.7L369.6 97.1L370.1 100.1L373.2 98.2L373.6 100.1L372.2 104.8ZM347.1 96.4L349 94.6L352.3 91.5L355.7 88.6L356.4 85.2L361.6 85.9L362.8 87.6L366.2 89L366.6 90.9L366.8 93.4L364.2 94.1L358.7 96.3L354.8 99.1L353.6 101.1L348.4 102.1L348.9 99.9L347.1 96.4ZM385.4 83L384.8 84.9L386.5 84.5L387.7 85.1L386.4 87.7L384.1 89.8L379 89.2L374.2 90.2L372.1 89.7L372.9 88L377.2 86.7L370.7 85.4L369.4 83.8L374.7 79.4L377 78.3L379.4 81.4L379.8 85.2L381.8 86.3L383.2 80.8L385.7 79.3L386.6 80.3L385.4 83ZM380.5 71.7L377.3 75.8L374.9 77.3L373.5 77.1L369.5 78.5L366.8 78.6L365.9 76.8L371 73.6L376.3 71.1L378.2 71.9L380.5 71.7ZM388.9 109L385.7 110.1L384.5 109.4L384.3 107.5L382.6 103.1L383.4 101.7L386 103L386.1 99.6L389 97.8L390.2 99.2L393 99.2L392.6 100.7L390.1 102.6L391.3 105L388.9 109ZM396.5 105.2L393.3 108.2L391.8 107.7L392.9 103.5L394.1 101.2L395.9 99.4L398 98.5L400.8 99.4L402.9 101.2L398.7 104.7L396.5 105.2ZM406.4 85.8L409.1 86.5L409.3 88.5L407.9 90.4L408.8 91.9L409.1 93.3L410.8 93.9L412.5 94.9L415.2 94.3L418.2 94.6L420.2 95.4L420.8 97.6L420.2 99.6L418.7 100.7L416.2 101.2L414.7 100.3L410.3 100.1L407.4 99.5L405.5 98.3L402.7 95.9L403.6 93.1L404.8 90.6L404.7 88L402.3 86.7L401.7 84.6L403.5 82.6L406 83.7L406.4 85.8ZM453.3 53.9L459.8 57.4L461.6 59L462.7 61.4L461.8 63.2L457.7 65.5L454.4 66.1L452.7 67.3L455.2 67.9L450.6 71.1L447.9 72.3L443.5 76.7L440.5 77.1L439.2 78.1L435.1 77.8L436.5 78.9L435.1 79.7L434.8 82.7L432.7 84.3L430 85.3L428.3 87.2L425.7 88.3L425.3 89.6L427.7 89.9L427.1 91.1L422.1 93.3L419.3 91.1L415 90.9L413.3 89.8L411 88.9L412.2 86.4L415.2 85.8L416.7 81.8L417.7 81.7L419.9 84.9L420 81L418.6 79.4L420.8 77.5L423.7 76.8L425.2 74.9L424.8 72.1L426.2 68.9L429.2 70.1L429.8 71.1L432.9 69.4L430.7 67.9L426.4 67L425.6 64.3L426.3 61.4L426.3 59.1L427.5 56.8L430 56L431.4 56.2L434.3 55.9L437.5 53.9L438.6 54.7L438.5 57L441.7 53.5L443.8 52.8L446.1 52.6L449.5 53.3L449.5 54.3L453.3 53.9ZM424 72.4L424.3 74.7L421.7 75.9L416.9 79.4L414.5 79.2L412.3 77.7L412.4 75L413.6 73L415.6 71.7L413.3 71.1L413.3 68.7L414.3 65.7L416.9 63.3L419.1 61.6L420.5 61.6L421 60L423.8 60.6L423.1 64.5L424.2 66.4L425.4 68.2L424 72.4ZM399.4 86.9L397.9 89.5L395.2 93L392.7 92.9L391.7 91.7L393.4 88.8L391 88.6L393.3 84.6L394.6 85.2L397.7 84L399.3 84.9L399.4 86.9ZM403.2 75L402.3 77.4L400.6 76.2L399.7 73.7L397.1 72.5L399.5 71.3L398.9 69.4L400.4 67.1L402.2 68.7L404.1 72L403.2 75ZM407.6 78.1L405.1 78.7L404.8 77.1L405.6 74.8L407 72.5L408.5 73.2L409 73.8L409.2 76.3L407.6 78.1ZM388.2 74.1L384.8 74.9L384.2 72.5L386.5 71.1L388.7 71.2L389.8 72.6L388.2 74.1ZM401.5 91.1L401.7 93.1L401.4 94.8L399.6 96.5L397.8 95.6L396.9 93.9L398.8 91.9L401.5 91.1ZM385.3 120.1L383.7 121.3L382.2 119.6L380.8 119.8L379.6 117.5L381.5 116.5L383.5 115L384.5 116.5L385 117.4L385.1 118.3L385.3 120.1ZM396 136.4L395.6 138L396.7 137.6L397.2 138.7L398.5 140.2L400 141.6L399.5 143.3L400.8 143.2L401.6 144.5L399.7 145.4L397.5 144.2L397.2 142.5L394.9 144.1L391.9 145.6L392.1 143.4L389.8 143.5L391.8 141.9L393.1 139.2L394.9 135.9L396 136.4ZM397.4 147.6L394.9 149.2L393.7 149L393.7 148L395.5 146.6L397.7 146.9L397.4 147.6ZM400.3 149.1L400.9 149.3L401.1 150L399.9 151.7L399.3 151.3L399.2 150.2L399.3 150L400.3 149.1ZM412.6 133.2L410.8 133.1L411.1 131.2L412.6 129.2L414.2 128.8L415 130.1L414.4 131.7L414 132.2L412.6 133.2ZM415.9 109.3L415.3 106.6L416.1 105L417 104.9L420 106L421.4 109L421 110.2L419.5 109.8L418 109.4L416.2 109.7L415.9 109.3ZM411.1 413.4L412.1 414.6L413.4 416.7L416.1 418.2L418.7 418.7L418.2 420.2L416.6 420.5L415.5 419.5L414.4 419.5L415.2 420.7L413.9 421.8L413.1 421.8L412 421.6L410.5 420.8L408.6 420.6L406.1 419.1L403.9 417.7L400.7 414.7L402.3 415.2L405.2 416.9L407.7 417.7L408.3 416.4L408.4 414.4L409.8 413.1L411.1 413.4ZM423.6 410.3L425.4 408.5L427 409.1L427.9 408L429.5 409.1L429.2 410.1L427 411L426 410.1L424.8 411.5L423.6 410.3ZM650.8 405.6L651.6 403L652.8 403.4L654.4 403.9L654.4 404.4L653.6 405.5L652.3 405.2L650.8 405.6ZM233 257L232.7 257.4L232.2 257.1L232.4 256.4L232.2 255.6L232.7 254.9L232.7 254.3L233.6 254.7L234.1 255.3L234.5 256.1L233.7 256.7L233 257ZM231.3 252.8L232.3 252.7L232.6 253.3L231.8 253.5L231.3 252.8ZM228.5 251.1L229.2 250.8L229.6 251.8L228.7 251.7ZM225.8 249.8L226.6 249.5L226.7 250.1L226.1 250.3ZM870.7 334.3L871.2 334L871.8 334.7L871.4 335.9L870.2 336.2L869.1 335.9L869.1 334.8L869.9 334L870.7 334.3ZM873.3 332.7L872 333.2L871.9 332.3L872.9 331.9L873.5 331.8L877.2 331.3L877.1 332.4L873.3 332.7ZM846 342.3L847.4 343.8L848.2 345L847.4 345.6L846.5 344.9L845.2 343.7L844.2 342.4L843.1 340.7L843 339.9L843.8 340L844.8 340.8L845.5 341.6L846 342.3ZM841.3 318.3L841.8 319L840.4 319L839.8 317.7L840.9 318.2L841.3 318.3ZM840.6 316.4L840.3 316.8L838.9 315L838.6 313.7L839.2 313.7L839.8 315.4L840.6 316.4ZM838.9 317L838.2 317L837 316.8L836.6 316.5L836.8 315.6L838 316L838.7 316.4L838.9 317ZM836.8 313.1L837.2 313.8L837.3 314.2L835.8 313.3L834.8 312.5L834.1 311.9L834.4 311.7L835.3 312.1L836.8 313.1ZM832.1 311L832.8 311.7L832.4 311.8L831.6 311.4L830.9 310.5L831 310.2L832.1 311ZM827.4 307L827.6 307.6L828.2 308.1L829.1 309.4L830 310L829.7 310.6L829.1 310.8L828.3 310L827.5 308.7L827.2 307.2L827.4 307ZM823 305.5L823 306.7L822.3 307.9L821.3 308L820.9 308.6L819.9 309.1L818.9 309.6L817.8 309.6L816.3 309L815.2 308.4L815.4 307.8L817.1 308.1L818.2 307.9L818.5 307L818.8 306.9L818.9 308L820 307.8L820.6 307.1L821.7 306.4L821.5 305.3L822.6 305.2L823 305.5ZM824.6 305.9L823.9 306.5L823.6 305.3L823.2 304.5L822.3 303.9L821.2 303L819.9 302.4L820.4 302L821.4 302.5L822.1 302.9L822.9 303.4L823.6 304.2L824.3 304.9L824.6 305.9ZM851.2 331.6L850.6 331.9L850 330.9L850.2 330.3L851.2 331.6ZM850.2 328.1L850.3 329.9L849.8 329.6L849.4 329.8L849.2 329.1L849.3 327.4L850.2 328.1ZM770 314.7L770.3 314.2L772 313.7L773.3 313.7L773.9 313.4L774.6 313.7L773.9 314.2L771.9 315.1L770.2 315.7L768.9 317.2L767.2 317.6L767 317.4L767.2 316.7L768.1 315.5L770 314.7ZM756.5 313L757.2 313.5L758.4 313.4L758.8 314.3L756.6 314.7L755.2 314.9L754.2 314.9L754.9 313.7L756 313.7L756.5 313ZM766.1 313L765.8 314.2L762.9 314.7L760.3 314.5L760.4 313.7L761.9 313.3L763.1 313.9L764.4 313.8L766.1 313ZM760.3 315.6L761.2 316.2L761.9 316.8L761.7 317.4L760.9 317.4L758.4 316L760.3 315.6ZM777.6 294.9L777.5 296.6L776.5 296.4L776.2 297.6L777 298.6L776.5 298.8L775.7 297.6L775.1 295.2L775.5 293.6L776.1 292.9L776.3 293.9L777.4 294.1L777.6 294.9ZM781 303.1L781.7 304.6L780.1 303.8L778.5 303.6L777.4 303.8L776 303.7L776.5 302.6L778.9 302.5L781 303.1ZM774.3 303.2L774.8 303.8L774 304.5L772.7 304.1L772.4 303.3L774.3 303.2ZM558.4 219.8L557.8 221.5L558.1 222.2L557.7 223.3L556.3 222.5L555.4 222.3L552.8 221.2L553 220L555.1 220.2L557 220L558.4 219.8ZM546.7 213.1L547.8 214.7L547.6 217.7L546.8 217.6L546.1 218.3L545.4 217.7L545.2 215L544.8 213.7L545.8 213.8L546.7 213.1ZM547.3 210.9L546.7 212.7L545.9 212.3L545.4 210.7L545.8 209.8L546.9 208.9L547.3 210.9ZM573.7 225.2L574.7 225.9L576.2 225.8L577.5 226L577.5 226.3L578.5 226.1L578.3 226.7L575.6 226.9L575.7 226.6L573.4 226.2L573.7 225.2ZM589.6 226.4L590.7 225.7L592.1 225.7L593.8 225L592.6 226L592.8 226.6L591 227.5L590 227.2L589.6 226.4ZM550.9 175.8L551.5 177.1L550.6 179.4L548.7 177.9L548.4 176.7L550.9 175.8ZM371.4 605L371.6 605L364.7 600.5L369.9 601.4L366.4 598.3L366.8 598.2L372.9 600.1L368.8 596.5L368.3 595.9L368.4 592.8L371.9 593.8L373.6 594.4L378.6 595.8L383.8 595.9L389.3 596.8L394.8 596.3L393.6 592.5L399 591.6L404.4 592.7L402.9 588.9L401.8 585.2L397.1 581.4L393.5 583.4L388.6 583.5L383.9 581.1L379.5 581.2L375.4 577.9L372 574.9L369 572L365.4 569.4L361.6 568.6L358.1 566.8L354 565.7L356.9 564.6L358.1 562.1L362.1 563.4L361.6 560.4L360.7 557.1L359.4 554.5L356.3 552.2L353.1 551.2L349.6 550.3L347 551.2L344.1 551.5L341.3 552.1L338.2 550.3L334.8 549.2L331.8 547.6L324.8 541.2L325.9 541.5L328.8 542.7L330.2 541.1L331.4 539.4L334.7 541.4L336.1 539.9L336.5 537.8L336.6 535.6L336.4 533.1L337.7 531.6L335.9 529.6L333.7 527.8L332.4 525.7L333.3 524L335.6 525.5L336.7 523.6L337.1 521.6L338.9 520.8L340.3 519.5L341.1 517.5L341.7 515.9L342.5 514.1L343.7 514.1L345 514.1L346.5 512.7L348.9 512.9L350.7 512.1L352 510.8L354.2 510.6L356.6 510.4L358.3 509.6L360.4 509L362.5 508.4L364.2 507.6L364.6 505.7L365.8 504.3L368.2 504.8L369.3 503.5L369.7 501.3L371.5 502.5L373.1 504.1L375 505.4L375.6 503.6L378.3 504.9L380.6 504.9L383 505.8L384.7 504.9L385.9 503.5L388.1 503.1L390.3 503.3L392.7 503.6L392.2 501.3L390.4 499.9L388.7 498.4L386.7 498.6L384.9 497L383.6 495.3L381.2 492L382.6 492.3L384.6 492.1L386.3 491.4L388.4 491.7L390.6 492.7L392.1 494.1L394.1 493.9L395.6 492.8L397.1 491.4L398.5 490.5L400.5 491.2L402.2 490.4L401.8 486.7L403.9 488.5L406 488.9L407.5 488L409.5 489.6L411.5 489.3L413.4 489.5L415.6 490.1L415.9 488.2L415.8 486.5L418 487.9L419.7 487.1L421.6 487.8L423.2 489.1L424.9 488.3L425.9 487L426.9 485.6L428.4 484.7L430.2 483.8L431.8 482.9L432.8 481.7L433.2 480.2L432.8 478.3L432.1 476.6L431 475.1L429.9 473.6L428.9 472.1L428 470.7L427.4 469.2L427 467.6L427.2 466.1L427.3 464.4L427 462.9L426.2 461.3L425.5 459.9L425.7 458.1L426.3 456.9L426.9 455.6L427.6 454.2L428.5 453L428.7 451.5L429.3 450.4L430.1 449.4L431.5 449L432.3 447.9L433.2 447.1L434.4 446.6L435.4 445.6L436 444.4L437.2 443.9L438.3 444.7L438 445.8L436.6 447L436.1 447.8L434.8 447.4L433.6 447.9L432.7 448.8L431.8 449.8L431.3 450.9L431.5 452.3L431.9 453.6L433 454.7L432.2 455.6L430.8 456.1L430.3 457.4L429.8 458.6L429.3 460.4L429.5 461.8L430.5 463.3L431.7 464.3L433.3 465L434.8 466.1L435.9 467.5L436.7 468.9L437.6 470.4L438.8 471.7L439.7 473.1L441.2 476.9L442.1 478.4L442.8 480L443.8 481.7L444.4 484L444.3 486L444 487.6L442.4 488.5L442.3 490.2L442.1 491.9L440.7 494.1L439.2 495.2L438 496.6L436.6 498L436.4 500.2L434.3 500.9L431.9 501.2L430 502L427.8 502.5L429.1 504.4L431.6 504.9L433.7 506L435.4 507.7L434.8 509.7L432.3 509.7L431.2 511.5L433.4 516L435.8 517.5L437.2 519.7L439.9 521.4L442.9 521.8L445.8 522.9L448.4 524.4L451.5 525.9L454.8 526.1L458.4 527.3L461.2 528.7L464.2 530.6L466.7 533.6L468.4 536.1L468.6 533.3L469.5 530.8L470.6 528.3L472.2 526.1L473.6 523.9L476.3 523.3L479.4 523.8L482.1 524.9L482 522L483 519.9L485.9 519.3L487.8 517.6L489.7 516.1L491.9 514.9L494.3 513.6L495.9 511.9L494.6 509.9L493.7 507.9L493.3 505.8L490.9 506.3L488.6 507.5L486.2 507.7L485.3 505.7L484.6 501.7L484.9 500.4L486.4 499.1L488.4 497.6L491 494.4L491.8 492.3L493.5 491.4L495.1 490.6L496 490.1L498 489.8L499.9 489L501.5 488L502.9 486.8L504.3 485.6L506.1 484.1L507.1 482.5L508.3 481.2L508.5 479.5L507 478.5L507.3 476.7L508.1 475.4L509.5 474.5L511 473.5L512.4 472.2L513.4 470.5L514 468.7L515 467.6L516.7 467.7L517.5 469L519.2 469.2L519.2 467.7L519.9 466.1L521.5 466.5L521.9 467.9L523.7 468.2L525.6 467.5L527.4 467L529 467.2L529.7 468.8L531.3 467.5L532.8 466.8L534.4 466.3L536.1 465.8L537.6 464.9L539.3 464.3L540.6 463.5L541.5 462.2L542.6 463.2L544.2 462.7L545.1 464.5L545.9 465.9L547.6 465.2L548.4 463.7L549.9 462.7L551.9 463L552.4 464.4L553.7 463L555.3 462.6L557.1 462.6L558.7 462.7L560.3 463.2L561.8 463.5L562.4 464.8L563.2 466L564.9 465.4L566.7 465.4L568.4 465.4L570 465.5L571.6 465L573.2 464.7L574.7 463.7L576.2 463.2L577.8 462.9L579.1 461.9L580.3 460L581.4 458.8L582.8 459.5L583.2 460.8L584.3 461.8L585.9 461.6L586.8 463L587.7 464.1L589.4 463.3L590.2 461.8L591.7 461.2L593.6 460.1L597.1 459.2L601.3 457.1L602.7 457.7L605.6 455.7L607.1 455.9L608.5 455.2L609.2 453.9L610.7 453.1L612.2 452.5L613.9 452.2L615.4 452L616.7 452.4L618.1 452.9L619.1 454L618.9 455.5L619.9 456.9L620.6 458L622.3 458.6L623 459.8L624 460.9L625.4 461.3L626.9 460.8L628.7 459.4L629.9 460.4L632.6 461.7L634 462.2L635.5 462.4L635.4 466.5L635 467.5L634.2 469.3L632.4 470L630.7 471.4L630.4 473L632.1 473.1L631.3 474.7L630 476.1L628.7 477.7L629.3 479.2L630.8 479.9L632.7 479.5L634.2 477.9L635.3 476.4L636.6 475.3L638 474.3L638.9 472.9L640.4 471L643.3 471L646.8 470.4L648.1 468.9L649.1 467.6L650.7 466.3L652.6 465.6L654.2 465L655.5 463.9L656.7 463.4L658.1 463L659.5 463.6L661 463.5L662.7 463.3L664.3 463.8L665.9 463L667.7 460.6L667.9 461.7L667.9 463.6L668.9 464.6L670.3 465.2L672 465L673.4 465.6L674.9 465.9L676 465.7L677.2 466.2L678 467.3L679.7 467L681.4 467.4L683 467.1L684.4 468L686 466.9L687.5 465.7L689 464.9L692.3 462.4L693.1 463.2L693.8 464.4L694.2 466L695.1 468.8L696.6 469.2L698 469.5L700 469.5L701.9 469.3L703.7 468.5L705.4 467.5L707.2 467.8L708.8 467.2L709.7 468.2L709.9 469.7L710.3 471.2L712.1 471.4L712.7 472.7L714 474.2L715.7 475.1L717.5 475.1L719.4 474.1L721.2 473.1L722.8 473.1L723.9 474L725.3 474.8L727.1 474.6L728.5 474.9L729.7 475.7L730.9 476.5L732.7 476.1L734.7 475.9L736.4 476.1L738.2 476.6L739.9 476.6L741.5 476.6L743.1 474.7L744.1 473L744.5 474.4L743.7 476.3L743.2 478.2L743 479.8L743.9 480.9L745.8 481.2L747.9 481.7L749.4 481.8L751.5 482.4L753 482.7L754.9 483.5L756.4 484.4L756.6 486L755.3 487.6L755.4 489.3L756.4 490.8L757.3 492.5L758.7 493.9L760.2 495.4L761.3 496.6L762.9 497.3L764.9 496L765.3 497.8L765.4 499.7L766 501.2L767.4 502.3L768.7 503.5L768 505.7L768.8 507.5L768.5 509.6L769.5 511.1L771.2 511.6L772.5 512.5L774.3 513.1L775.7 514.2L776.7 515.5L777.2 517.4L777.8 519L777.5 521L775.6 522.9L773.3 524.4L770.6 526.5L768.5 528.2L765.8 530.2L763.4 530.1L760.8 531.7L758.1 532.1L755.6 533.9L752.7 535.6L750.2 536.8L747.5 538.9L745.1 540.8L742.5 543.3L740.3 545.5L738.6 548.1L736.6 550.4L734.9 552.8L736.1 554.8L733.7 557.7L730.6 557.4L727.5 557.7L725.1 556.7L720.3 559.7L716.7 562.5L710.1 566.6L708.7 569.6L705.8 572.6L703.4 575.6L701.5 578.6L699.8 581.6L698 584.7L696.6 588.4L691.7 592.1L691.5 595.4L687.8 598.5L692.8 598.6L690.6 602.2L688.6 605L688.6 783L371.4 783ZM423.6 466.3L424.9 467.6L425.8 469L427.1 470.7L428.2 472.4L429.3 474.1L430.1 475.9L430.5 477.6L430.6 479.2L429.2 480.1L427.8 481.2L425.9 481.5L426 479.7L423.1 481.5L421.5 480.4L420.7 478.7L421.7 476.7L422.5 476.1L424.3 475.9L423.9 473.8L423.4 472.3L422.2 469.1L422.4 467.1L423.6 466.3ZM381.3 488.2L381.8 487.3L384 487.4L386.3 487.2L388.2 487.4L389.5 486.5L391.7 488.9L390.3 488.8L388.7 489.4L386.8 489.7L385 490.4L383.1 489.9L381.3 488.2ZM357.4 504.8L356.6 503.1L358.9 503.4L361.2 503.6L362.3 502.2L362.6 504.2L362.2 505.9L360 506.1L357.4 504.8ZM350.3 506L350.6 504.7L352.8 505.3L356.2 506.5L355.2 506.6L353.1 506.8L350.3 506ZM329 554.6L327.2 552L330.3 551.7L333.4 552.9L336.6 554.6L340 557.2L338.8 559.2L335 557.9L331.9 556.2L329 554.6ZM467.7 502.3L468.4 502.2L469.9 500.8L472.2 501.6L474.4 503.7L475.9 506.9L476.8 509.3L477.7 512.2L476.4 514.3L474.9 516.1L473.2 518L471.1 519.6L468.3 519.8L465.9 518L465.2 515.5L467.2 513.4L467.6 511.3L467.5 508.7L467.4 506.6L467.6 504.6L467.7 502.3ZM458.1 515.7L459 518.8L459.8 521.7L457 521.4L454.6 522.3L452.2 520.6L450.6 518.8L453.4 518.4L456.2 518.4L456.1 515.8L455.9 513.6L458.1 515.7Z"/>
<path fill="#bdb196" stroke="#232323" stroke-width="1" stroke-linejoin="round" d="M582.5 212.5L580.9 211.7L580.6 210.8L579.9 209.5L580.4 207.8L581.3 206.8L581.6 204L583 203.6L582.9 203L584.1 201.2L584.6 199.8L586.2 199.5L587.4 200.4L589.3 200.9L587.9 202.8L590 203.5L589.7 204.6L590.7 205.1L593 203.6L594.9 203.1L595.2 202.3L593.4 202.4L592.5 201.9L592.2 200.4L593.6 199.4L595.3 199.2L596.4 198.4L597.8 198.2L599.3 197.7L599.5 198.2L596.9 199.3L598 200.3L596.8 202.4L595.5 202.8L597.2 204.2L599.4 205L601.9 207L604.8 208.8L605.5 210.4L605.3 211.4L603.3 212.7L601.7 212.5L599.6 212.9L596.9 212.1L593.6 210.5L590.6 210.6L588.5 211.3L586.5 212.9L583 212.6L582.5 212.5ZM577.7 215.4L578.5 214.6L579.6 214.6L580.9 214.7L582.7 214.5L584.3 213.7L582.6 213.3L582.7 212.7L582.5 212.7L581.1 213.2L579.9 213.3L579 214.1L577.8 215.2ZM617.4 199.2L618.9 198.6L620.9 197.4L622.4 198L624.3 197.8L624.9 199.3L624.9 201.7L623.3 201.4L621.8 201.9L622 203.7L620.2 203.5L620.4 204.3L621.5 204.9L622.6 207.1L624.8 207.8L625.3 208.6L625 209.6L625.1 210.2L625.9 211.7L625.9 210L627.2 209.3L628 210.7L628 212.9L626.2 212.3L626 214.3L627.3 214.4L627 216.1L628.5 216.8L628.6 219.2L629.1 220.8L629 221.4L626.2 222L623.5 221.7L622.1 220.6L620.3 220.2L619.5 218.5L619.4 217.4L620 216.8L620.2 216L620.3 214.2L621.8 213.9L621.1 213.3L620.3 213.3L619.1 211.6L618 210.4L616.7 208.8L615.7 207.6L615.6 206L613.7 203.8L615.1 201.2L616.8 200.7L617.4 199.2Z"/>
<path fill="none" stroke="#232323" stroke-width="1" stroke-linejoin="round" d="M301.6 83.5L302.9 85.3L302.3 87.9L303.6 87.2L305.8 88.4L304.9 89.5L306.5 91.1L308.4 91.2L310.4 93.8L312.9 95.2L313.6 96.2L316 96.1L317.3 98.2L318.5 99.4L320.6 101.4L321.5 104.3L322.8 105.2L325.3 103.7L328 102.9L329.9 104.1L333.4 102.8L336.5 102.4L336.4 104.6L338.1 103.9L339.8 101.8L340.5 102.6L340.6 107.3L344.4 104.9L342.6 108.3L344.8 108.1L346.2 107L347.8 107.7L349.1 110.2L351.7 112.7L353.4 114L355 114L356 116.7L352.7 118.3L355 119.8L359.5 120.3L361.1 119.9L361.6 122.7L364.3 121L363.6 118.9L365.3 117.7L367.2 118L368.7 117.8L369.4 119.1L369.9 121.6L371.7 121.7L373.6 124.1L376.3 123.9L378.5 124.5L379.5 122L381.2 121.6L383 123.4L381.2 127.2L383.7 124.2L384.8 124.6L387.4 120.7L386.9 117.8L386 115.8L388.4 111.1L391.7 108.3L393.3 109.5L393.8 111.7L393.6 116.9L391.3 118.7L393.8 120.1L391.9 124.2L395.4 121.4L396.1 124.3L394.4 127.2L394.8 130L397.6 127.6L400.1 124.4L402 120L404.1 120.7L406 121.7L407.3 124.1L406.6 126L404.6 127.9L404.9 130.1L404 132L399.9 134.1L397.5 134.3L396.3 132.9L395.1 134.7L392.4 137.5L391.3 139L388.5 141.2L386.1 141.1L384.2 142.3L383.2 144.6L381.2 144.7L378.1 147.3L374.9 150.8L373.2 153.4L371.8 157.2L374.1 158.1L373.8 161.2L373.8 163.7L376.4 163.4L379.1 165.1L380.5 166.5L381.3 168.1L383.2 169.2L384.6 170.6L387.4 171.1L389.2 171.6L388.2 174.1L388 177.1L388.4 180.4L390.3 183.3L391.9 182.5L393.6 179.7L393.9 175L393.1 173.4L396.2 172.3L398.7 170.4L400.3 168.4L400.7 166.4L400.3 163.6L398.9 161.1L401.9 158L402.1 154.9L403.2 149.7L404.6 149.1L407.1 150.3L408.7 150.9L410.3 150.2L411.5 151.5L412.9 153.6L413.1 154.9L415.9 155.5L415.1 158.2L414.6 162.2L416 162.8L416.8 164.8L419.6 163.3L422.1 160L423.6 158.7L424.2 161.6L425.4 165.7L426.4 169.4L425.3 171.2L427.2 173L428.4 174.8L431 175.7L431.9 176.6L432.1 179.1L433.4 179.5L433.9 180.6L433.4 183.7L432 184.6L430.5 185.5L427.5 186.3L424.8 188.4L421.8 188.6L418.1 187.8L415.5 187.6L413.6 187.7L411.7 189.5L409.2 190.6L405.9 193.9L403.3 196.2L404.9 195.8L408.5 192.6L412.7 190.6L415.4 190.5L416.7 191.9L414.7 193.6L414.7 196.4L415 198.3L417.1 199.7L420.1 199.5L422.4 196.7L422.2 198.6L423.2 199.6L420.7 201.1L416.5 202.4L414.5 203.3L412.2 205L410.8 204.8L411.1 202.6L414.6 200.7L411.7 200.7L409.6 200.9L409.8 201.7L407.7 202.8L405.6 203.6L403.6 204.3L402.3 205.7L401.9 206.2L401.7 207.5L402 208.9L402.8 209L402.8 208L403.2 208.6L402.9 209.3L401.6 209.6L400.8 209.6L399.3 209.9L397.4 210.1L395.8 210.7L398.6 210.4L399 210.9L396.3 211.5L395.2 211.4L395.3 211.2L394.6 211.8L395.1 211.9L394.4 213.7L392.7 215.4L392.7 214.8L392.3 214.7L391.8 214L392 215.4L392.4 215.8L392.2 216.7L391.5 217.6L390.2 219.5L390 219.4L390.8 217.8L390 216.8L390.2 214.8L389.6 215.8L389.8 217.4L388.6 217L389.8 217.8L389.5 220L390 220.2L390 221L389.9 223.4L388.5 225L386.4 225.7L385 227L384.1 227.1L383 227.9L382.6 228.7L380.3 230.1L379.1 231.1L378 232.5L377.5 234L377.7 235.6L378 237.5L378.7 239.1L378.6 240.1L379.1 242.6L378.9 244.1L378.7 244.9L378.1 246.2L377.5 246.5L376.6 246.2L376.4 245.3L375.8 244.8L375 242.9L374.3 241.2L374.1 240.3L374.7 238.9L374.3 237.6L373.1 235.7L372.4 235.4L370.4 236.3L370.1 236.2L369.3 235.1L368.2 234.5L366 234.8L364.4 234.5L362.9 234.6L362.1 234.9L362.3 235.5L362.2 236.4L362.5 236.9L362.1 237.2L361.5 236.8L360.7 237.2L359.3 237.1L358.1 235.9L356.4 236.1L355.1 235.6L353.9 235.7L352.2 236.2L350.3 237.8L348.3 238.7L347.1 239.8L346.5 240.8L346.3 242.3L346.2 243.4L346.5 244.1L345.5 246.1L345 247.6L344.5 250.6L344.2 251.6L344.4 252.8L344.9 253.9L345.1 255.5L346.2 257.1L346.5 258.3L347.2 259.4L349.2 260L349.9 260.9L351.6 260.3L353.1 260.1L354.5 259.7L355.8 259.4L357.1 258.6L357.6 257.3L358 255.5L358.3 254.9L359.7 254.4L361.8 253.9L363.4 254L364.6 253.9L365 254.3L364.9 255.3L363.7 256.6L363.2 257.8L363.5 258.2L363.1 259.1L362.5 260.7L362.1 260.2L361.7 260.2L361.6 261.3L362 260.6L361.9 261.1L361.5 262L361.7 262.3L361.4 263.1L361.5 263.3L361.2 264.3L360.8 264.8L360.5 264.9L360 265.6L360.6 266L360.8 265.7L361.3 266L361.5 266L362 265.7L362.5 265.7L362.7 265.8L363 265.7L363.9 265.9L364.8 265.9L365.4 265.7L365.7 265.4L366.3 265.5L366.7 265.7L367.2 265.6L367.6 265.5L368.4 265.7L368.7 265.8L369.3 266.2L369.8 266.7L370.5 267L371 267.5L370.8 267.7L370.7 268.2L370.8 268.9L370.3 269.6L370.1 270.4L370 271.3L370 271.8L370 272.7L369.7 272.9L369.5 273.8L369.6 274.3L369.2 274.8L369.3 275.4L369.5 275.7L370 276.8L370.7 277.6L371.5 278.4L372.2 279.1L372.1 279.6L372.9 279.7L373.1 279.5L373.6 280L374.6 279.8L375.4 279.3L376.6 279L377.3 278.4L378.3 278.5L378.2 278.7L379.3 278.7L380.1 279.1L380.8 279.7L381.5 280.2L382.4 280.3L383.9 278.9L384.7 278.7L384.8 278.1L385.2 276.4L386.3 275.5L387.6 275.4L387.7 275L389.2 275.2L390.8 274.2L391.5 273.7L392.5 272.8L393.2 272.9L393.7 273.4L393.3 274.1L392 274.4L392.6 275.7L392.6 276.7L391.7 277.9L392.3 279.5L393.2 279.3L393.7 277.9L393.1 277.2L393.1 275.7L395.5 274.9L395.3 274L396 273.4L396.6 274.7L397.9 274.8L399.1 275.9L399.2 276.6L400.9 276.6L403 276.4L404 277.3L405.5 277.5L406.6 276.9L406.6 276.4L409 276.3L411.3 276.3L409.7 276.8L410.3 277.8L411.8 277.9L413.2 278.9L413.5 280.5L414.5 280.4L415.2 280.9L416.5 281.6L417.6 282.9L417.7 283.9L418.4 283.9L419.4 284.9L420.1 285.6L422.4 286L422.7 285.6L424.2 285.4L426.3 286L426.9 286.2L428.3 286.7L430.3 288.3L430.6 289.1L431.3 289L431.8 290.1L432.8 293.4L433.9 293.7L433.9 295.1L432.4 296.7L433 297.3L436.4 297.6L436.5 299.5L438 298.2L440.4 298.9L443.6 300.1L444.5 301.2L444.2 302.3L446.5 301.7L450.2 302.7L453.1 302.6L455.9 304.2L458.4 306.4L459.9 307L461.6 307L462.3 307.6L462.9 310.1L463.3 311.3L462.6 314.5L461.6 315.8L459 318.5L457.8 320.7L456.5 322.4L456 322.4L455.5 323.9L455.7 327.6L455.3 330.7L455.2 332L454.6 332.8L454.4 335.5L452.6 338.1L452.4 340.2L450.9 341.1L450.5 342.4L448.5 342.4L445.5 343.2L444.3 344.1L442.2 344.7L440.1 346.4L438.6 348.5L438.5 350L438.9 351.2L438.7 353.4L438.3 354.4L437.1 355.6L435.4 359.4L433.9 361.2L432.7 362.2L432.1 364.3L431 365.6L430.3 367L428.4 368.3L427 367.9L426 368.2L424.2 367.3L422.9 367.4L421.6 366.2L421.6 367.3L424.2 369.2L424.2 370.8L425.4 371.7L425.5 372.8L424.1 375.8L421.6 377.2L417.9 377.8L415.9 377.6L416.5 379L416.4 380.8L416.9 382L415.9 382.9L414.1 383.3L412.2 382.5L411.6 383.1L412.2 385.5L413.6 386.2L414.4 385.4L415.2 386.6L413.6 387.4L412.5 389.1L412.6 391.6L412.4 392.9L410.7 393L409.6 394.4L409.4 396.3L411.5 398.1L413.3 398.5L413.2 400.9L411.4 402.5L410.9 405.7L409.5 406.8L409 408.2L410.2 411L411.8 412.5L411 412.4L409.4 412.5L408.7 413.3L407.4 414.4L407.7 417L407 417.2L404.8 416.4L402.4 414.6L399.8 413.2L398.8 411.4L398.9 409.8L397.6 408L396.3 403.4L396.5 400.8L398 398.7L395.1 398.1L396.3 395.7L396.1 391.4L398.3 392.2L398.2 386.9L396.9 386.4L396.9 389.5L395.7 389.2L395.6 385.6L395.4 381.1L396 379.4L395.1 377.1L394.5 374.4L395.3 374.3L395.8 370.5L396.6 366.8L396.9 363.4L396 360.1L396.4 358.3L395.8 355.6L396.6 352.9L396.5 348.7L396.7 344.3L396.9 339.6L396.5 336.2L395.9 333.3L393.9 332.2L393.7 331.3L389.7 329.3L386.2 327.1L384.6 325.9L383.7 324.2L384 323.7L382.2 321L380.2 317.4L378.2 313.4L377.4 312.5L376.7 311.1L375.2 309.8L373.8 309L374.4 308.1L373.4 306.3L374 304.9L375.5 303.7L376.5 302.2L376.1 301.4L375.4 302.3L374.2 301.4L374.6 300.9L374.3 299.1L375 298.9L375.3 297.6L376 296.4L375.9 295.6L377 295.2L378.3 294.4L378 293.8L378.7 293.7L378.7 292.7L379.1 292L380.1 291.9L380.9 290.7L381.6 289.7L380.9 289.2L381.3 288.1L380.9 286.3L381.4 285.8L381.1 284.1L380.4 283.1L379.7 282.5L379.3 281.4L379.8 280.9L379.4 280.8L379 280.1L378.1 279.6L377.2 279.7L376.8 280.4L376 280.9L375.6 280.9L375.4 281.4L376.3 282.4L375.8 282.7L375.5 283L374.6 283.1L374.3 281.9L374 282.2L373.4 282.1L373 281.3L372.2 281.2L371.8 281L370.9 281L370.9 281.4L370.6 281.1L369.6 280.6L369.2 280.2L369.5 279.9L369.4 279.5L368.9 279L368.2 278.6L367.5 278.3L367.4 277.7L366.9 277.4L367 278L366.6 278.4L366.2 277.9L365.6 277.7L365.3 277.3L365.4 276.7L365.7 276.1L365.1 275.8L365.6 275.4L365 274.8L364.1 273.9L363.7 273.3L362.9 272.6L362 271.7L362.3 271.4L362.6 271.7L362.7 271.6L362.4 270.9L361.9 270.8L361.6 271.2L360.5 271.2L359.8 271L359.1 270.6L358 270.4L357.5 270L356.5 269.6L355.3 269.6L354.5 269.2L353.5 268.3L351.5 266.1L350.5 265.4L349 264.9L348 265L346.4 265.8L345.4 266L344.1 265.4L342.7 265L340.9 264.1L339.5 263.7L337.4 262.8L335.9 261.7L335.5 261.2L334.4 261L332.5 260.3L331.8 259.4L329.9 258.1L329.1 256.8L328.7 255.7L329.4 255.5L329.3 254.9L329.8 254.3L329.8 253.6L329.3 252.6L329.2 251.7L328.7 250.6L327.3 248.4L325.6 246.6L324.9 245.2L323.4 244.2L323.1 243.7L323.6 242.3L322.7 241.7L321.7 240.6L321.5 239L320.5 238.8L319.6 237.5L318.9 236.3L318.9 235.6L318.2 233.8L317.8 231.9L318 231L316.8 230L316.1 230.1L315.2 229.4L314.7 230.4L314.8 231.5L314.7 233.3L315.2 234.3L316.3 236L316.6 236.5L316.8 236.7L316.9 237.5L317.3 237.5L317.4 239L317.9 239.6L318.2 240.5L319.2 241.7L319.6 243.8L320 244.8L320.4 245.9L320.3 247L321.2 247.1L321.9 248.2L322.4 249.2L322.3 249.6L321.4 250.4L321.1 250.4L320.8 249L319.7 247.7L318.4 246.6L317.5 246L317.8 244.3L317.7 243.1L316.9 242.4L315.8 241.3L315.4 241.6L315.1 241L314 240.4L313 239L313.2 238.9L314 239L314.8 238.2L315.1 237.1L313.9 235.4L312.9 234.7L312.4 233.2L312 231.6L311.5 229.6L311.1 227.4L311 226.2L310.1 224.7L309.2 224.4L309.2 223.6L308.1 223.4L307.6 222.7L305.9 222.4L305.5 222L305.6 220.6L304.3 217.9L303.5 214.2L303.7 213.6L303.1 212.7L302.2 210.4L302.5 208.2L301.8 206.7L302.8 204.4L303.4 202.1L303.4 199.9L304.8 197.3L306.7 192.2L307.6 188.3L307.8 185.7L307.7 184.2L308.1 183.7L310.4 185L310.5 187.8L311.2 187.1L311.7 184.7L311.8 182.1L311.6 182.1L309.1 178.7L308.3 177.2L305.5 175.5L305.5 172.6L306.5 170.7L304.7 168.9L305.4 166.3L304.2 163.5L304.9 161.8L304.4 160.4L303.3 159.1L304.1 156L303.1 152.7L303.6 149.2L302.1 148.7L299.4 148.1L297.9 146.6L296.2 142.1L295 141L292.7 139.1L290.2 138.9L287.8 136.3L286.7 134.3L284.4 134.6L283.4 137.4L282.3 137.5L280 137.8L277.8 138.8L275.5 139.2L276.4 136.9L279.2 133.2L281.6 132.4L281.7 131.3L278.4 133L275.9 135.4L272 137.6L272.3 139.8L269.3 142.2L266.7 143.4L264.4 144.2L263.2 145.8L259.6 147.2L258.2 148.9L255.4 150L254.4 149.5L252.2 150.2L249.9 151.2L247.9 152.1L244.4 152.6L244.4 151.9L247.1 150.5L249.4 149.7L252.2 148L254.5 148L256.1 146.6L259.6 144.9L260.4 144.2L262.3 143.1L264 140.2L266.1 138.1L263.5 138.8L263.3 138L261.7 139.3L261.6 137L260.4 138.3L260.8 136.2L258.3 137.4L257.2 137.2L258.4 134.7L259.4 133.4L259.1 131.6L256.5 131.9L256.2 129.6L255.6 128.3L256.9 126L256.7 123.8L258.7 121.6L261.4 119.5L263.4 117.4L264.9 117.5L265.5 118.5L268.1 116.8L269 117.5L271.1 116.5L272 114.5L271.6 113.4L273.8 112L272.8 111.8L270.5 112.3L269.4 113.1L268.8 111.7L266.2 111.5L264.6 109.8L265.1 107.7L264.9 104.5L268.3 103.2L273.3 102.1L274.6 102.6L272.8 104.8L276.2 105.7L276.9 102.4L276.2 100L276.7 97.3L276.7 94.8L275.8 92.5L278.4 90.3L281.2 91.1L284.7 89.6L286.8 87.3L290 85.6L291.9 85.6L296.3 84.4L297.3 85.3L301.6 83.5ZM406.9 105.7L406.7 108.7L409.7 105.4L414.2 104.3L414.5 109.4L413.1 112.3L416.5 111.6L418.6 110.1L420.8 112.9L422 115.3L421.5 117.2L424.6 116.7L425.1 119.6L428.1 121.7L428.9 123.6L429 127.4L425.6 128.8L428.4 131.8L430.6 133L431.8 136.6L434.2 137.2L432.9 139.6L429 143.4L427.4 141.7L426 137.9L423.8 138.1L423 140.2L424 142.4L425.7 144.3L426.1 145.3L426.2 148.7L425 151.1L423.1 149.9L419.9 146.8L421.3 150L422.4 152.1L422.4 153.3L418.3 151.5L415.4 149.2L413.9 147.3L414.8 146.4L412.9 144.3L411.2 142.3L410.9 143.3L406 143.3L405.1 141.9L407 139.4L410.1 139.8L413.5 139.8L413.4 138.4L414.6 136.7L417.8 133.4L418 131.7L417.8 130.3L416.2 128.1L413.6 126.3L414.9 125.4L414.3 122.7L413 122.2L412.4 120.6L411.1 121.7L408.1 121.8L403.1 119.8L400.4 118L398.3 116.9L397.7 115.2L400.1 113.5L398 113.1L399.7 108.6L402.7 104.9L405.1 103.3L409.3 103L406.9 105.7ZM479 64.8L484 61.1L487.6 62.1L489.8 59.6L493.7 59.4L501.7 61.4L507.3 67.8L504.9 70.3L500.6 70.2L494.5 70.2L494.8 71.5L498.9 71.2L501.9 73.7L504.4 72L504.9 74.4L503.1 78L506.4 75.9L512.2 73.7L515.5 75.1L515.9 77.9L510.7 82L509.9 83.3L505.9 84.1L508.7 84.6L506.7 88.6L505.3 92.1L504.6 97.9L505.7 101.2L503.7 101.4L501.3 102.8L503.4 105.4L503.3 109.4L501.8 109.7L503.1 113.6L500 113.8L501.4 115.6L500.7 117.2L498.7 117.7L496.7 117.6L498.1 120.5L497.9 122.3L495.3 120.5L494.4 121.5L496.2 122.7L497.8 125.2L498 128.4L495.2 129L494.3 127.4L492.8 125.1L492.9 127.8L490.9 129.7L494.8 130.1L496.8 130.4L492.4 133.4L487.9 136.1L483.3 137.1L481.6 137L479.8 138.3L477 141.8L473.3 144L472.2 144.1L469.9 144.8L467.5 145.4L465.8 147.4L465.3 149.7L464.1 151.8L461 154.2L461.2 156.8L460 159.3L458.6 162.2L456.2 162.3L454.3 159.6L451 159.3L449.7 157.5L449.3 154.3L447.4 150L447.1 147.8L447.6 144.7L446.2 141.3L447.5 138.8L446.7 137.4L449.4 133.3L452 132.2L453.1 130.6L454.2 127.7L452.1 128.9L451.1 129.3L449.6 129.8L448.1 128.3L448.8 125.6L449.9 123.6L451.3 123.7L454.1 125.1L452.2 122.3L451.3 120.7L449.7 121.1L448.8 120L451.6 116.3L451.2 114.6L451 111.4L450.9 106.4L449.7 104.4L450.4 102.4L447.8 99L445.1 98.1L441.4 97.7L438 97.4L437.1 95.5L436.2 91.9L440.3 91L443.1 91.2L438.1 88.7L436.2 85.9L437.4 83.9L443.3 82.3L449.1 80.6L450.5 78.6L448.2 75.8L450.3 73.6L456.3 70.3L458.3 70L459.1 67L462.6 65.8L466.4 65.5L469.8 66.2L470.3 68.5L474.6 65.4L476.3 68.4L477.7 69.2L479.3 71.7L477.8 67.7L479 64.8ZM801.5 82L797.7 80.6L791.6 79.9L788.8 81.4L783.1 81.9L784.3 84.4L787.9 87.1L787.2 89.4L781.4 86L779 87.6L775.5 87.7L773.1 88.8L771.8 90.5L769 89.8L766.5 86.2L763.7 84.6L760.3 84.9L755.2 88L748.7 85.6L745.3 83.1L730.2 84.7L729.9 87.4L734.1 91.6L731.2 93.4L727.4 92.9L725.8 95L722.1 93.6L723.9 99L720.4 97.9L716.2 94.7L715.7 92.5L712.9 89.6L708.9 87.8L706.7 88.6L703.2 88.7L705.6 92.4L699.2 93.6L697.4 91.4L692.5 92.1L690.7 93.5L690.9 94.9L688.2 92L687.5 93.3L684.7 92.7L682.6 92.6L684.6 87L685.1 85L683.6 82.2L681.3 80.6L676.6 79.1L672.7 80.3L672.4 81.9L670.3 79.5L666.8 79.6L667.8 77.7L664.4 76.7L662.8 79.8L663 82.5L661.5 85.5L660.2 89L655.2 89.7L652.3 92.8L651 95.9L649.4 96.3L649.4 99.9L651.7 102L649 103.3L645.5 103.9L643.5 105.3L645.8 110L648.6 113.4L644.9 111.4L642 112.2L640.2 114.4L642.1 117.3L640.2 116.8L639.1 112.6L637.4 110.4L636.7 110.6L638.3 113.6L636.8 116.9L640.4 124.2L641.6 126.3L643.4 126.4L643.6 129L644.6 133.1L645.3 131.1L644.8 134.9L643.4 136.1L643.2 137.5L641.2 137.2L641.4 134.2L641.9 131.8L641.6 128.7L639.5 126.1L637.9 121.3L636.8 117.6L634.5 113.5L632.7 111.3L629.6 110.9L629.4 116L628 120.2L630.5 126.3L634.7 131.3L632.4 130L627.8 127.7L625.3 126.8L620.4 126.2L620.1 127.6L622.3 129.6L621.3 132.3L618.9 130.3L617.1 132.1L614.3 132.6L612.4 131.4L611.5 133.8L613.5 134L612.6 136.3L610.1 135.5L606.7 135.1L603.5 136.9L601.8 136.7L600.4 134.8L595.9 134L597.5 136.1L597.2 138.4L599 140.3L598.6 142.8L596.9 141.7L595.4 141.6L593.3 143.8L592.4 145.3L593.9 147.7L592.7 148.6L588.5 146.8L587.7 148.1L588.9 149.5L585.4 149.5L584.7 146L584.4 144.5L581.4 142.1L582.5 141.6L589.9 143.7L592.3 142.6L593.6 140.7L593.1 138.3L591.5 136.7L585 133L580.7 132.5L577.8 130.3L576.5 131.8L574.7 131L574.5 129.5L576.2 128.4L571.2 125.8L568.7 126.7L566 126.7L564.1 130.1L561.7 130L558.6 131.8L556.8 134.3L554.9 136.6L552.5 139.3L549.3 146.1L546.7 150.7L543.7 154.1L539.5 156.8L538.1 158.8L538.7 165.8L539.4 168.9L541.8 170.3L543.9 169.6L547.1 166.2L548.3 168L549.7 172.1L551.3 175.2L552 177.8L553.9 177.6L554.8 175.4L556.8 175.7L557.6 173L557.9 168.2L559.6 167.5L560.9 164.1L559.2 162.5L557.9 160.4L558.7 156L561.6 153.2L563.8 150.5L563.4 148.5L564.7 146.1L567.2 145L569.6 146.6L570 148L569 148.7L565.7 152.4L564.5 154.4L563.9 156.3L564.9 159.1L564.9 162.1L566.5 163L567.7 164.6L570.3 163.9L573.1 162.7L576 162.4L577.9 163.7L576.2 165.4L574.5 165.6L572.7 165.2L570.6 165.6L568.6 166.5L568.9 168.2L570.1 169.2L570.7 168.8L570.6 170.6L570.5 172.7L569.2 172.8L567.6 170.8L566.2 171.8L565.5 173.6L565.6 175.7L566.1 178L563.9 178.9L563.6 180.1L561.9 180.1L561.7 179.5L560 179.1L557.9 180L555.3 181.3L554.2 182.1L551.4 180.2L550.4 181L548.7 181.5L548.7 180.6L546.9 179.9L546.9 178.9L546.4 177.6L547.5 175.6L548.4 174.8L547.2 173.6L547.7 172.7L547.7 171.3L546.4 172.1L544.3 173.1L543.9 173.9L543.8 177.5L544.5 179L544.6 180.5L545.1 181.5L543.9 182.8L542.2 182.4L541.8 183L540.4 182.9L538.1 184L536.6 187.9L535.7 188.6L534.4 189.1L532.9 189.6L532.3 191.7L530.4 193L528.3 193.7L527.8 193L526.6 192.6L527.2 195.4L524.2 194.8L521.9 195.3L522.1 197.1L524.8 198.1L526.1 199.3L527.9 201.9L527.5 206.6L526.6 208L522.2 208.1L515.7 207.2L513.1 208.9L513.8 212.3L514.1 214.1L513.5 216.4L512.8 217.2L512.6 218.7L513 219.6L513.8 219.8L514 221.1L513.7 222.9L515.6 222.9L516.3 222.4L518 222.7L518.5 224L519.2 224.7L520.1 224.9L520.8 224.1L522 223.3L523.7 223.4L526.1 223.3L527.4 221.6L528.8 221.2L529.1 219.7L530.2 218.7L529.5 217.5L531.5 213.6L533.8 213.1L535.5 211.6L535.6 208.8L538.2 208.1L541.7 208.7L543.4 207.4L545.9 205.7L548.3 206.8L548.9 209.1L550.2 210.4L551.9 211.9L554.7 213.1L555.5 214L558 215.7L558.6 216.8L559.4 218.1L559 218.6L558.7 220.5L559.5 220.3L560.4 218.4L561.1 218.2L561.3 217.1L559.9 216.2L560.6 214.7L562.2 215.1L563.3 216.2L563.6 215.3L563.4 214.9L561.8 213.7L560.4 213.1L558.8 212.2L559.2 211.8L557.4 211.3L555.3 209.4L554.3 207.5L552.6 206.3L551.9 205.1L552.1 203.3L553.4 202.4L554.8 202.8L554.4 203.8L555.5 203.6L556.6 204L557.2 205.9L558.8 207.7L560.5 208.3L561.5 209.2L563.3 210L564.6 211.2L565.3 211.8L565 214L565.3 215.1L566.7 216.6L568.6 219.5L569 221L569.8 222.8L571.4 223.7L571.8 221.7L572.6 223.7L572.4 221.7L572.9 221.5L572.3 220.3L574.1 220.9L574 219.6L573 219L571.9 218L571.6 216.4L571.1 215L571.4 214.5L572.5 215.7L573.5 215.7L574.4 215.3L573 214L575.2 213.4L576.2 213.6L577.3 213.7L577.3 214.1L577.7 215.4L577.7 216.8L578.9 217.8L578.2 219.6L579.6 220.8L580.8 223L582.8 222.9L584.7 224.1L585.9 223.8L586.3 222.9L588.3 223L589.9 224.1L592.6 223.8L593.8 222.5L595.4 223L596.5 222.8L595.9 223.7L596.3 225.6L596.6 227.3L595.7 228.9L595.2 230.7L594.9 231.2L594.6 232.9L594.2 233.9L593.9 234.7L593 235.3L591.5 235.2L590.2 234.6L587.7 234L586.1 234.3L583.9 235.6L581.2 234.6L576.8 234.2L576.4 233.5L573.2 232.9L572.5 231.9L570 231.5L567.4 232.8L566.9 233.8L567.4 235.5L566.5 236.4L565.6 237L563.6 236L560.9 235.1L559.3 234.7L558.3 232.8L555.8 231.9L554.3 231.5L551.3 231L550.6 230.6L550.1 229.6L549.1 229.6L548.8 228.4L550 227.3L550.2 225.4L549.5 223.9L550.4 222.8L550.2 222.4L548.7 223.2L548.7 222.1L547.4 221.8L545.5 222.7L543.4 222.3L541.5 222.4L539.8 223.2L538.8 222.9L535.8 223.1L532.7 223.5L530.9 224.2L529.8 225.1L527.8 225.4L526 226.6L525.2 226.6L523.3 226.1L521.5 226.3L520.4 225.3L519.1 225.3L518.5 226.7L517.2 228.9L515.8 229.8L513.9 230.8L512.7 232.2L512.5 233.3L511.7 235.2L512.1 237.8L510.5 239.5L509.6 240.1L508.1 241.5L506.3 241.7L505.3 242.6L504.1 244.7L502.8 245.4L502.1 246.7L502.1 247.8L501.5 249L500.9 249.3L499.8 250.6L499.1 252L499.2 252.7L498.6 253.7L497.8 254.3L497.7 255.2L497.6 256.1L498 255.4L499.1 257.9L498.9 258.9L499.1 259.9L499.2 261.9L499 263.7L498.4 264.7L498.6 265.8L498.1 266.8L497.2 268.2L496.3 268.5L497.3 269.3L498 270.8L497.8 271.6L498.1 273.2L499.1 272.8L498.2 273.6L498.8 274L499.2 274.8L500 274.9L501 275.8L501.5 276.1L501.8 276.5L502 277.4L502.5 277.8L503 278L503.7 278.8L504.6 279.9L505.1 282.1L506.1 283.1L507.5 283.9L508 284L509.3 285.3L510.9 286.3L512.7 287.8L514.7 288.7L515.5 288.7L517.4 288L518.8 287.5L521.1 287.1L523.6 287.5L524.5 287.5L526.2 288L528 287.5L530 286.4L532 285.7L533.6 285.3L535.2 285L536.9 285L538.3 285L539.7 286.3L540.3 287.7L541.3 288.9L542.9 288.9L543.6 288.5L544.3 288.6L546.3 287.9L546.3 288.4L547.2 289.6L548.1 289.9L548.9 291.2L548.6 292.7L547.9 294.9L548.3 295.2L548.9 295L547.9 296.6L547 298.6L546.9 299.2L548.1 301.2L549.4 302.8L551.3 304.8L552.8 305.9L553.4 308.3L553.7 308.9L554.5 310.5L555.4 313.6L554.8 314.4L555.7 317.1L556.2 317.8L556.3 318.9L556.1 320.4L555.5 321.2L554.4 322.5L553.9 323.3L553.3 325.1L553.2 325.9L552.2 329.5L552.4 330.7L552.5 332.2L554 334.2L555.3 337.8L557 340.3L557.2 341.5L557.2 343.9L557.8 347L558.6 350.5L559.3 352L560.6 353.6L561.9 356.4L562.8 358.2L563.9 360.1L563.9 361.8L563.8 364.9L564 365.5L564.9 366.1L565.5 366.2L566.2 367L567.1 366.9L568.3 366.1L569.8 365.8L571.8 364.9L572.6 365.1L573.7 364.8L575.7 365.3L576.6 364.8L577.7 365.2L578 364.6L579 364.5L580.9 363.7L582.4 362.7L583.8 361.4L586 359.2L587.2 357.7L587.7 356.6L588.6 355.5L589 355.3L590.3 354.2L590.9 353.3L591.2 351.5L591.7 350L592 348.9L591.4 347.9L592.2 347.1L596.2 345.4L597 344.6L597.3 343.8L596.9 343.4L597.4 340.5L597 338.8L595.9 337.2L596.1 335.8L596.9 335.3L598.3 333.9L599.1 333.6L601.3 331.4L603.5 330.4L605.3 329.7L606.5 328.5L608 325.7L607.6 324.7L607.7 321.6L607.5 319.9L607.6 318L607.3 317.1L606.6 316.6L605.9 314.7L605.2 313.5L605.4 312.6L605.3 312L605.8 310.3L604.6 309.6L604.5 308.5L605.4 306.1L606.2 305.5L606.6 304.2L607.2 303.4L607.5 302L608.2 301.9L608.6 301.1L610 300.3L610.9 298.9L613 296.5L614.8 295.1L617.7 293.2L619.6 291.6L621.8 289L623.4 286.8L625 284L626.2 281.5L627 279.3L627.5 277.2L627.9 276.5L627.9 275.4L628 274.3L627.9 273.7L627.2 273.7L626.3 274.4L625.3 274.6L624.4 274.9L623.8 275L622.7 275L622.1 275.4L621.1 275.5L619.5 276.1L617.4 276.4L615.6 276.9L614.6 276.9L613.7 276.1L613.3 275.2L612.7 274.9L611.9 274.3L612.9 273.9L613 273.1L612.5 272.4L611.5 271.9L610.9 271.2L609.8 270L608.7 268.9L606.5 267.9L606.1 267L605 266.1L604.4 264.3L603.2 262L602.1 261.2L601.4 260.7L600.5 258.3L600.6 255.9L599.9 253.9L597.2 251.7L597.1 250.3L597.4 250L595.6 247.7L595 246.5L594.2 245.4L592.6 242.2L591.3 240.1L590.4 237.9L590.9 237.5L591.3 238.5L592.1 240.7L593 241.6L593.7 242.3L594.3 242.1L594.6 240.8L594.8 239.2L595.3 238.4L595.4 238.7L595.2 239.5L595.9 241.4L597 242.8L598.2 244.5L599 246L599.6 246.5L600.1 248L600.8 249.2L601.8 249.6L602.8 250.4L604 253.9L604.3 255.3L605.6 257.2L606.5 257.6L607.9 258.9L608.5 260.6L609.6 262.3L610.6 263L610.8 263.8L611.4 264.4L611.7 265.2L611.8 266.1L611.6 266.5L611.8 267.4L612 268.3L612.4 269.8L612.8 270.3L612.7 271.4L613.3 272.6L614.6 272.7L615.2 272.4L616.2 272.4L616.4 271.9L616.9 271.8L617.3 271.3L617.8 271.1L619.4 271L620.6 270.7L621.7 269.8L622.3 269.9L623.1 269.8L624.8 268.4L627.8 267.5L629.7 266.6L630 265.1L631.4 264.5L633.5 263.7L634.5 263.9L635.4 263.3L635.4 262.5L636.1 262L637.3 262L637.7 261.6L637.8 260.6L639 259.8L639.8 259.8L640 259.6L639.7 258.2L639.9 257.2L640.3 256.7L641.2 256.8L641.8 255.4L642.5 254.7L642.8 254.1L643.4 252.9L643.4 252.4L642.7 252.2L642.1 251.5L641.1 250.3L640 249.9L638.6 249.7L637.5 249L636.5 247.5L636.1 245.9L636.4 244.6L636.2 244.4L635.7 245.2L634.6 246.5L633.3 247.8L632.1 249.3L630.9 249.2L629.4 249.2L627.9 249.5L627.5 249L627.1 248.3L627.4 247L627.3 245.8L626.6 245.2L626.1 245.4L625.7 246.5L625.9 248L625.6 247.5L624.7 246.2L624.4 245.5L624.6 244.8L624.4 244L623 243.1L622.7 242.4L621.7 241.9L620.8 240.1L620.1 238.5L619.7 237L620.8 237.1L621.5 236.3L622.7 237L623.7 236.6L625.3 239.5L626.8 241.4L628.6 242L630.7 243.6L633 244.3L634.8 243.3L636.3 242.9L637.2 243.2L638.2 245.8L640.4 246L642.5 246.5L646.1 247.1L648.8 246.7L651.8 246.7L655.3 246.2L656.9 247.8L657.6 249.3L659 249.8L661.4 251.6L662.1 252.4L661.2 253.2L663.9 255.7L665.3 255.9L667.9 254.6L668.5 256.6L668.7 259.1L669.4 261.7L670.5 265.6L672.4 268.4L672.8 269.7L673.4 272.2L674.5 274.1L675.3 275L676.1 277L677.1 279.8L678.9 281.6L679.7 281.1L680.3 279.7L682 279.1L681.4 278.5L682.2 277L683.2 276.9L683.1 273.5L683.8 271.6L683.6 269.9L683 267.3L683.5 265.7L684.4 265.6L686.1 264.9L687 264.3L686.9 263.4L688.7 262.1L690 260.7L692 258.3L694.6 256.8L695.4 255.6L695.3 254L697.6 253.5L698.9 253.5L699 252.7L700.4 253.1L700.6 252.7L701.5 253.1L701.9 252L701.7 251.1L703.4 251.1L704.4 252.4L704.8 253.4L705 254.5L705.7 255.6L707.2 257.3L708.4 257.5L708.2 258.3L709.9 260.7L710.5 262.7L710 265.2L711.3 265.7L712.3 265.9L714.4 264.4L715.6 263.3L716.6 265.1L717.1 267.7L717.9 270.1L718.7 271.2L718.7 273.4L719.4 274.6L719.2 277.6L718.5 280.8L718.9 281.9L719.2 280.7L720.2 281.6L721.2 282.8L721.6 283.7L722.4 284.5L722.7 286.8L723.4 287.8L723.7 289.5L724.8 290.8L725.1 291.8L727.3 293.3L729.2 294.7L730.5 294.6L730.6 294L729.8 292.2L728.8 289.9L728.9 289L728.8 287.7L728 286.4L726.8 285.2L726.4 285L724.2 283.7L723 282.6L722.6 280.9L721.8 279.1L720.5 279L720.3 277.5L720.9 275.8L721 273.7L721.6 272.8L721.7 270.6L723.2 272.1L724.9 272.1L726.7 273L727.8 275.1L728.6 276.2L730.2 276.5L731.7 277.6L731.2 279L732 280.2L734.3 278.4L735.8 276.7L737.9 275.4L739.4 274L739.5 270.4L738.3 266.6L737 264.9L735.2 263.6L733.1 260.9L731.4 258.7L731.7 257.2L733.1 255.1L735.4 253.2L736.3 252.8L738.9 253.5L738.6 254.3L739.3 255.9L740.3 255.8L740.7 253.5L742.7 253.1L745.2 251.9L746.2 250.8L746.9 251.5L748 250.5L750.1 250.2L752.5 248.3L754.9 246.1L756.2 243.4L757.3 240.3L758.3 237.7L759.3 237.4L759.5 235.5L759.1 233.4L757.5 231.6L758.3 229.1L756.7 227.3L755.1 225L753.9 222.6L751.6 221.4L752.2 219.5L753.7 218.2L754.3 216.7L756.8 215.9L756.2 214.5L754.9 214.5L753 213.6L751.4 215.6L749.7 214.9L749.4 213.8L747.8 213.4L746.4 211.7L747.1 210.5L748.8 210.2L749.6 208.4L751.2 206.4L752.6 205.3L753.9 206.7L752.9 208.6L753.6 209.6L752.8 210.9L754.7 210L755.8 208.7L758.2 207.7L760.4 208.6L760.6 209L760.5 210.5L760.8 211L760.8 212.9L760.2 212.5L761.3 213.1L761.5 213.6L763.1 213.3L764.9 215.5L763.6 216L765.1 218.6L765.1 220.6L765.6 221.9L767.3 221.6L768.6 220.5L770.1 219.9L770.6 218.4L769.9 215.4L769 213.7L766.6 210.7L765.3 209.6L764.5 209.2L764.6 208.9L764.3 207.7L765 206.9L766.1 206.4L766.6 205.5L766.8 205L767.6 204.3L767 202.4L767.3 201.4L767.8 200.3L768.6 200.4L769 198.3L770.5 197.2L772.1 198.4L773.2 198.3L775.9 194.5L777.3 190.9L778.7 187.1L778.6 184.9L779.8 180.1L778.8 174.9L777.5 171L777.6 167.4L776.4 164.6L772.4 161.3L770.4 161.4L769.9 163.2L767.9 162.7L766.2 160.8L763.3 160.8L764.1 156.3L766.4 151.4L767.8 148.1L768.6 143.1L773.6 140.8L779.1 140.4L780.2 138L784.4 140.8L783.2 138L786.9 139.9L787.5 135.9L790.1 138L788.7 133.2L787.3 128.5L790.9 124.5L794.5 127.3L795.5 124L796.3 120.6L797.5 119.4L799.3 121.8L799 127.1L798.7 132.2L797.2 137.1L795.7 141.9L796.3 145.5L796.1 146.8L797.7 152.2L801.1 157.7L805.1 165L806.7 167.3L808 163.7L807 159.9L809.2 158.6L808 154.3L810.2 151.8L808.7 150.3L808 147L809.5 146.5L806.9 140.8L804.4 140.1L803.7 138.8L803.7 134.5L802.8 131.7L805.4 131.7L807.6 130.9L814.2 128.8L813.7 126.7L814.6 123.4L815.3 119.7L816.5 118.8L819 114.1L822.6 114.2L822.3 112.8L820.9 111L819.4 110L816 106.5L812.9 104.5L815.7 105.4L815.2 104.2L815.8 101.4M258.5 82L259.2 87.2L259.5 93.6L257.2 96.5L257.4 98.1L259.5 94.5L263.1 96.7L263.1 102.1L260.2 103.6L257.3 103.2L254.3 107.7L253 108.5L251.6 107.9L251.5 105.9L250.3 103.8L251.3 101.7L250.3 100.4L248.1 100.4L248.4 98.4L250 96.8L247.3 97.3L246.5 99.8L244.2 101.4M805.1 325L805.7 326.7L807 325.9L807.5 326.8L808.4 327.7L808.1 328.7L808.4 330.6L808.5 331.7L809 332L809.3 333.9L809 335L809.5 336.6L811.4 337.8L812.6 338.9L813.8 339.9L813.5 340.5L814.4 342L814.8 344.5L815.6 344L816.3 345.1L816.8 344.7L816.8 347.2L817.9 348.8L818.6 349.7L819.9 351.7L820.1 353.7L819.9 355.1L819.5 356.7L820 358.8L819.5 361.1L818.9 362.3L818 364.5L817.7 366L817 367.9L815.6 370.2L814 371.5L812.8 373.5L811.9 374.8L810.8 377.1L809.7 378.4L808.8 380.4L808.1 382.3L807.9 383.2L806.6 384.1L804.5 384.1L802.5 385.1L801.3 386.1L799.9 387.2L798.7 385.8L797.6 385.3L798.3 383.8L797.1 384.3L795 386.2L793.6 385.3L792.6 384.8L791.6 384.5L790 383.6L789.2 381.8L789.3 379.7L789.5 377.2L788.5 377.1L786.8 376.7L787.7 375.5L787.7 373.5L786.4 375.3L784.6 375.6L785.9 374.3L786.5 372.8L787.5 371.5L787.8 369.6L785.8 371.7L784.4 372.5L783.2 374.6L782 373.4L782.4 372L781.6 370.1L780.8 369.1L781.2 368.5L779.1 366.9L777.8 366.7L776.2 365.4L772.8 365.5L770.2 366.3L767.9 367L766.1 366.8L763.8 367.9L762.1 368.4L761.5 369.7L760.6 370.7L759 370.7L757.7 370.8L756.2 370.3L754.7 370.5L753.4 370.6L752 371.8L751.5 371.7L750.4 372.4L749.4 373.1L748 373L746.8 372.9L745.1 371.2L744.2 370.7L744.5 369.2L745.5 369L745.9 368.4L746 367.5L746.6 365.9L746.6 364.4L746 361.9L746 360.6L746.3 359.2L745.8 357.7L745.8 357L745.1 356L745.2 354.2L744.4 352.4L744.2 351.4L744.9 352.4L744.6 350.3L745.4 350.9L745.9 351.8L746 350.7L745.3 348.9L745.2 348.1L744.9 347.5L745.2 346.2L745.7 345.6L746.1 344.5L746.1 343.2L747 341.7L747 343.3L748 341.8L749.6 341.1L750.7 340.2L752.2 339.4L753.1 339.3L753.6 339.5L755.2 338.7L756.4 338.5L756.7 338L757.2 337.9L758.3 337.9L760.4 337.3L761.5 336.4L762.1 335.2L763.4 334.1L763.5 333.3L763.7 332.1L765.2 330.3L765.8 332.1L766.7 331.7L766.1 330.7L766.8 329.7L767.6 330.2L768 328.5L769.1 327.5L769.7 326.7L770.7 326.3L770.7 325.7L771.6 326L771.6 325.4L772.5 325.1L773.5 324.9L774.8 325.9L775.8 327.1L777 327.2L778.2 327.4L777.8 326.2L778.9 324.5L779.8 324L779.5 323.4L780.5 322.2L781.7 321.5L782.7 321.7L784.3 321.4L784.3 320.3L782.9 319.6L784 319.3L785.2 319.8L786.2 320.7L787.8 321.2L788.4 321L789.5 321.7L790.7 321.1L791.4 321.3L791.8 320.9L792.7 321.9L792.1 323.1L791.3 323.9L790.6 324L790.8 324.8L790.1 325.9L789.4 326.9L789.4 327.5L790.9 328.7L792.3 329.4L793.2 330.2L794.5 331.5L795 331.5L796 332.1L796.2 332.8L797.9 333.6L799.3 332.8L799.8 331.6L800.2 330.7L800.6 329.5L801.3 327.8L801.2 326.7L801.4 326.1L801.2 324.9L801.6 323.2L802 322.8L801.8 322.1L802.3 321L802.7 319.8L802.8 319.2L803.6 318.5L804.1 319.5L804.1 320.8L804.6 321.1L804.6 322L805.2 323L805.3 324.3L805.1 325ZM796.8 392.1L798.3 393.3L799.4 392.9L801 392.5L802.1 392.8L801.2 396.3L800.3 397.3L799.4 399.7L799 398.8L797.1 400.7L796.7 400.5L795.6 400.3L795.3 397.6L795.6 395.7L795.2 393L795.6 391.7L796.8 392.1ZM856 395.7L854.8 397.3L853.2 399.4L851.4 400.5L851.4 399.6L850.7 399L852.6 396.6L852.5 394.8L850.8 393.3L851.2 392.2L852.9 391.3L853.8 388.9L854.3 387L854.1 384.9L854.3 384.4L853.7 383.1L852.8 380.4L852.6 378.2L853.3 378.1L853.9 379.8L855.2 380.6L855.1 383.3L855.6 386.6L856.2 384.5L856.8 385.4L856.5 387.7L857.7 388.8L859 389.2L860.3 388.1L861.2 388.6L860 391.3L858.9 393L857.5 392.8L856.7 393.7L856.5 395.1L856 395.7ZM839.2 405.3L841.3 403.8L843 402.2L844.5 400L845.5 399.2L846.3 397.5L848 396.2L848 397.6L848.1 398.9L849.8 397.8L849.9 399.2L849.5 400.5L848.3 401.9L846.4 404.2L845 405.4L845.1 407L843.7 406.9L841.7 407.9L840.5 410L838.3 413.3L836.3 414.6L835 415.4L833.4 415.1L832.6 413.8L830.7 413.3L830.8 412L832.7 409.7L836.1 406.8L837.4 406.3L839.2 405.3ZM788.1 299.3L788.6 302.5L790.6 303.7L792.2 301.6L794.4 300.4L796.2 300.4L797.8 301.1L799.2 301.8L801.3 302.1L804.6 303.5L808.1 304.6L809.4 305.6L810.5 306.7L810.7 307.8L813.9 309.1L814.3 310.2L812.5 310.4L812.9 311.7L814.6 313.1L815.7 315.3L816.8 315.2L816.7 316.1L818.2 316.5L817.6 316.9L819.6 317.8L819.3 318.4L818 318.5L817.6 318L815.9 317.7L814 317.4L812.6 316.1L811.6 314.9L810.7 313.1L808.2 312.2L806.5 312.8L805.3 313.5L805.5 315L804 315.7L802.9 315.3L800.9 315.2L799.3 313.6L797.3 313.1L796.8 313.7L794.4 313.8L795.3 312.1L796.5 311.5L796.1 309.3L795.2 307.7L791.6 306L790 305.8L787.1 304L786.5 304.9L785.8 305.1L785.4 304.4L785.4 303.5L783.9 302.6L786 301.9L787.4 301.9L787.2 301.4L784.4 301.4L783.7 300.2L781.9 299.9L781.1 298.9L783.7 298.4L784.7 297.8L787.8 298.6L788.1 299.3ZM756.7 289.1L755.7 290.8L757.1 292.7L756.8 293.6L759 295.4L756.7 295.6L756.1 296.9L756.1 298.6L754.3 300L754.2 301.9L753.4 304.9L753.1 304.2L750.9 305.1L750.2 303.9L748.8 303.8L747.9 303.1L745.6 303.8L744.9 302.9L743.6 303L742 302.8L741.8 300.2L740.8 299.6L739.9 298L739.6 296.3L739.9 294.5L741 293.2L742.4 293.9L743.9 293.5L744.3 291.9L745.1 291.5L747.4 291.1L748.7 289.5L749.6 288.3L750.9 288.6L751.9 286.5L753.4 285.1L754.4 283.5L755.1 283.5L756.2 284.5L756.3 285.4L757.6 286L759.2 286.5L759.1 287.3L757.8 287.4L758.1 288.4L756.7 289.1ZM713.2 286.5L717.4 286.9L719.2 288.8L720.7 290.1L721.8 291L723.6 293L725.6 293.1L727.2 294.4L728.3 296L729.8 296.9L729 298.5L730.1 299.1L730.8 299.2L731.1 300.5L731.8 301.6L733.2 301.8L734.1 303L733.6 305.5L733.5 308.5L731.3 308.5L729.7 306.9L727.3 305.3L726.5 304.1L725.1 302.5L724.1 301.1L722.7 298.4L721 296.8L720.4 295.1L719.7 293.6L718 292.4L716.9 290.7L715.5 289.6L713.4 287.5L713.2 286.5ZM738.8 310.3L742.5 310.5L742.9 309.7L746.4 310.7L747.1 312L750 312.4L752.3 313.6L750 314.3L748 313.5L746.2 313.6L744.2 313.4L742.5 313L740.3 312.3L738.9 312.1L738.1 312.3L734.6 311.5L734.3 310.6L732.5 310.5L733.9 308.6L736.2 308.7L737.7 309.5L738.6 309.6L738.8 310.3ZM771 294.4L769.4 296.3L768 296.6L766.1 296.3L762.9 296.4L761.2 296.6L761 298.1L762.7 299.8L763.7 299L767.3 298.3L767.2 299.2L766.3 298.9L765.5 300L763.8 300.8L765.6 303.3L765.2 304L766.9 306.2L766.8 307.5L765.8 308.1L765.1 307.4L766 305.8L764.1 306.6L763.7 306L763.9 305.3L762.6 304.1L762.7 302.2L761.5 302.8L761.6 305.1L761.6 307.9L760.4 308.2L759.5 307.6L760.1 305.8L759.9 303.9L759.1 303.9L758.5 302.5L759.3 301.3L759.6 299.7L760.6 296.8L761 296L762.6 294.6L764.1 295.2L766.5 295.4L768.7 295.3L770.6 293.9L771 294.4ZM761.5 259.4L762.8 260L763.3 259.5L763.6 260L763.3 260.9L764.1 262.5L763.8 264.2L762.7 265L762.6 266.7L763.1 268.3L764.2 268.6L765 268.3L767.5 269.5L767.4 270.6L768 271.1L767.9 272.1L766.3 271L765.5 270L765.1 270.7L763.8 269.5L762.1 269.8L761.1 269.3L761.1 268.5L761.7 267.9L761.1 267.5L760.9 268.2L759.8 267L759.5 266.1L759.2 264.1L760.1 264.8L759.9 261.4L760.4 259.4L761.5 259.4ZM772.8 280.5L773.1 281.8L773.2 283L772.6 284.8L771.8 282.8L771 283.8L771.6 285.3L771.1 286.2L768.8 285L768.2 283.6L768.8 282.6L767.5 281.7L767 282.5L766.1 282.4L764.7 283.6L764.3 283L765 281.3L766.2 280.7L767.2 280L767.9 280.9L769.4 280.3L769.6 279.4L771 279.3L770.8 277.8L772.4 278.7L772.6 279.8L772.8 280.5ZM768.3 272L770.1 272L770.7 272.8L771.4 275.1L769.9 274.6L769.9 275.3L770.5 276.5L769.6 277L769.4 275.6L768.8 275.5L768.5 274.2L769.6 274.4L769.5 273.6L768.3 272ZM763.8 273.4L765 274.1L766.2 274.1L766.2 274.9L765.4 275.8L764.2 276.4L764.1 275.4L764.1 274.4L763.8 273.4ZM768 276.7L767.3 277.4L766.8 278.7L766.2 279.3L765 277.9L765.4 277.3L765.8 276.8L765.9 275.5L767 275.4L766.8 276.7L768.1 274.8L768 276.7ZM759.3 274.5L759.7 276.2L758.5 277.3L757.6 278.7L755.1 280.6L756 279.2L757.3 278L758.4 276.6L759.3 274.5ZM760.5 270.2L762.2 270.2L762.9 271L762.5 272.8L761.6 271.8L760.5 270.2ZM760.9 246.3L760.2 250L759.6 251.8L758.4 250L757.9 248.3L758.7 246L760 244.3L761 244.9L760.9 246.3ZM740.5 259.4L738.9 260.4L737.3 259.8L737.1 257.9L737.9 256.9L739.9 256.3L741 256.3L741.5 257.1L740.8 258.1L740.5 259.4ZM687.1 282.5L686.9 284.5L686.1 285.1L684.5 285.5L683.5 284L683.1 281.1L683.8 277.9L685.2 279L686.1 280.4L687.1 282.5ZM624.9 321.3L625.4 322.2L625.8 323.5L626 325.9L626.5 326.8L626.2 327.8L625.9 328.3L625.3 327.2L624.9 327.8L625.2 329.2L625 330.1L624.4 330.6L624.2 332.2L623.3 334.6L622.2 337.4L620.8 341.3L619.9 344.1L618.9 346.5L617.3 347L615.6 347.8L614.6 347.3L613.1 346.6L612.7 345.4L612.7 343.6L612.1 342L612 340.5L612.4 339L613.3 338.7L613.4 338L614.3 336.5L614.6 335.2L614.2 334.2L613.9 333L613.8 331.1L614.5 330L614.9 328.7L615.8 328.7L616.9 328.2L617.6 327.9L618.4 327.9L619.6 326.7L621.2 325.5L621.8 324.5L621.6 323.7L622.4 323.9L623.5 322.6L623.6 321.4L624.2 320.5L624.9 321.3ZM791.2 213L791 215.2L791.7 216.5L791.1 218.5L789 219.9L785.7 220.2L783.7 223.4L782.2 222.4L781.7 220.5L778.5 221.2L776.6 222.6L774.4 222.8L774 221.9L775.6 220.5L776.6 218.6L780.1 217.6L782.3 218L783.1 213.1L784.7 214.3L786.8 211.4L787.6 210.3L787.9 206.8L786.7 203.7L787 201.8L788.8 201.1L790.9 205L791.5 207.3L790.5 210.2L791.2 213ZM775.2 230L774.1 229.1L774.2 226.8L772.8 226.1L771.7 224.4L773.3 223.6L774.2 222.8L775.9 223.4L776.6 225.2L776.2 228.9L775.2 230ZM781.1 221.7L781.5 222.6L780.8 224.2L779.8 223.4L779 224.1L778.8 225.6L777.4 224.9L777.2 223.7L777.9 222.1L779.1 222.4L779.6 221.2L781.1 221.7ZM791.1 192.4L792.6 192.9L793.5 191.5L795 194.8L792.5 195.9L791.7 199L788.2 197.3L788.1 200.6L786.1 200.8L785 197.9L785.3 195.6L787.2 195.2L786.5 191.1L786.3 188.6L789.4 191.6L791.1 192.4ZM783.6 171.8L787.5 177.3L784.4 176.6L785 181.4L787.8 184.3L788.5 186.5L786.5 184.8L786.1 187.3L784.9 184.8L784.1 181.7L782.7 178.4L782.2 175.9L780.7 171.5L778.4 168.4L776.7 163.8L777.7 161.9L776.4 160.4L776.9 159.8L778.3 162.1L780.3 165.2L781.6 168.6L783.6 171.8ZM605.2 111.5L607.3 107.1L606.2 105.1L608.5 102.1L611.8 98.3L615.9 96.5L617.4 94.3L619.7 93.1L621.5 94.9L621.2 96.6L617.4 99.9L614.1 102.9L611.4 108L610.7 112.6L609.7 117.1L611.1 120.4L614.9 123.4L614.1 123.9L609.1 124L608.2 122.2L605.3 121.5L604.4 119.3L605.7 118.2L604.9 115.9L606.7 111.9L605.2 111.5ZM548.5 87.4L548.8 85.4L550.5 85.1L552.3 87L556.9 90.8L554 93.2L553.8 97L552.7 98.1L552.6 102.2L551 102.5L547.9 99.6L548.9 97.7L546.9 96.4L544 92L542.8 87.7L545.9 85.6L546.8 87.5L548.5 87.4ZM563.1 84.1L561.8 87.3L558.4 88.3L554.6 87.6L554.2 86.1L552.4 86.1L550.8 83.5L554.2 81.6L556.2 82.9L557.1 81L560.4 82.2L563.1 84.1ZM561.8 96.4L559.2 98.7L556.8 97.6L557.5 96.2L556.5 94.7L559 93.5L559.8 95.4L561.8 96.4ZM583.1 78L585.2 76.5L586.8 77.3L589.5 75.1L590.9 76.2L589.5 78.9L587.4 81.6L585.5 79.5ZM654.5 71.9L652.3 73.5L647.9 73L644.4 71.4L640.9 67.5L638.5 66.8L638.7 61.6L640.2 59.2L644.5 61.6L651.3 66.6L654.5 71.9ZM663 73L657.4 77.5L654.8 69.4L655.3 68.3L656.5 68.4L661.8 70.6L663 73ZM714.6 68.5L718.2 67.3L725.3 68.2L727.6 72.5L722.6 74.4L721.4 76.5L716 74.2L713.8 70.2L714.6 68.5ZM728.4 69.7L727.2 67.8L730.3 67.5L734.8 67.5L735.1 70.3L732.6 70.7L728.4 69.7ZM728.5 78.7L732 79.9L733.2 81.2L731.1 82L727.9 82.5L727.4 82.4L727.2 79.9L728.5 78.7ZM793.6 72.4L792.2 73.3L790.6 71.8L790.4 68.8M269.6 68.8L269.9 68.6L271.8 71.6L271 72.3L268.5 72.9L266.4 72.4M525 168.8L523.2 171.9L524.9 171.5L526.7 171.5L526.3 173.8L524.7 176.3L526.5 176.5L528.1 180L529.3 180.4L530.3 183.4L530.8 184.5L532.9 185L532.7 186.7L531.8 187.4L532.5 188.7L531 190.1L528.6 190.1L525.7 190.8L524.8 190.3L523.7 191.4L522.1 191.2L520.8 192.1L519.9 191.6L522.5 188.9L524.1 188.4L521.4 188L520.9 186.9L522.7 186.1L521.8 184.7L522.1 183L524.7 183.2L525 181.7L523.8 180L521.8 179.5L521.4 178.8L522 177.5L521.5 176.8L520.5 178.1L520.5 175.4L519.7 174L520.3 171.1L521.7 168.8L523 169L525 168.8ZM519.4 182L519.6 183.9L518.3 186.2L515.2 187.7L512.7 187.3L514.2 184.6L513.4 181.9L515.8 179.8L517.1 178.5L518.6 178.4L520.4 180.1L519.4 182ZM507.5 144L507 146.2L508.6 148.5L506.4 151L501.6 153.1L500.2 153.6L498.2 153.1L493.8 151.9L495.5 150.5L492.2 148.8L495.1 148.3L495.1 147.3L491.9 146.4L493.2 144.2L495.7 143.8L497.8 146.2L500.4 144.4L502.3 145.5L504.9 143.7L507.5 144ZM374.1 250.5L375.7 250.7L377.2 250.7L378.9 251.5L379.6 252.3L381.4 252.1L382 252.6L383.5 253.9L384.6 254.8L385.3 254.8L386.3 255.2L386.2 255.8L387.6 256L388.9 256.8L388.7 257.3L387.4 257.6L386.1 257.6L384.8 257.5L382 257.6L383.4 256.5L382.7 255.9L381.4 255.8L380.9 255.2L380.5 254L379.4 254L377.7 253.4L377.2 253L374.7 252.6L374.1 252.2L374.9 251.7L373 251.6L371.5 252.6L370.7 252.7L370.4 253.2L369.4 253.4L368.7 253.2L369.7 252.5L370.2 251.8L371.1 251.3L372.1 250.9L373.6 250.7L374.1 250.5ZM393.5 258L393.8 257.7L395.3 257.7L396.4 258.3L396.9 258.2L397.2 258.9L398.2 258.9L398.1 259.5L399 259.6L399.8 260.4L399.1 261.2L398.2 260.7L397.3 260.8L396.7 260.7L396.3 261.1L395.6 261.2L395.3 260.7L394.7 261L393.8 262.4L393.3 262.1L393.3 261.5L392 261.1L391.1 261.2L390 261.1L389.1 261.5L388.1 260.8L388.3 260.2L390 260.4L391.5 260.6L392.2 260.2L391.4 259.3L391.5 258.5L390.3 258.2L390.7 257.6L391.9 257.7L393.5 258ZM382.2 260.5L383.4 260.7L384.4 261.2L384.7 261.7L383.3 261.7L382.7 262.1L381.7 261.8L380.6 261L380.9 260.5L381.7 260.4L382.2 260.5ZM403.7 260.6L404.7 260.8L405 261.2L404.5 261.7L403 261.7L401.9 261.7L401.9 260.9L402.2 260.6L403.7 260.6ZM411.7 276.2L412.8 275.9L413.2 276L413.1 277.5L411.5 277.7L411.1 277.5L411.7 276.9L411.7 276.2ZM382.3 246.3L382.8 246.4L383.3 248.2L383.2 249.4L382.7 249.5L382.4 248.3L381.7 247.7L382.3 246.3ZM381.2 242.9L382.1 242.7L383.3 242.8L383.3 243.4L381.2 243.7L381.2 242.9ZM383.5 242.4L384.9 243.4L384.4 244.9L384 244.6L384.2 243.5L383.5 242.6L383.5 242.4ZM431.9 187.6L430.3 189.8L431.6 189L432.7 189.6L431.9 190.5L433.4 191.3L434.3 190.7L435.9 191.6L435.1 193.5L436.4 193.1L436.4 194.5L436.7 196.1L435.6 198.3L434.8 198.3L433.7 197.8L434.4 195.7L433.9 195.4L431.5 197.5L430.5 197.4L431.9 196.2L430.3 195.5L428.4 195.6L424.9 195.3L424.8 194.6L426 193.7L425.4 193L427.2 191.5L429.8 187.4L431.1 185.9L432.8 185.1L433.6 185.2L433.2 185.9L431.9 187.6ZM416.6 197.6L417.8 198L419.5 198.1L418.4 199L417.7 199.2L415.6 198L415.3 197.1L416.2 196.3L416.6 197.6ZM416.7 188.9L417.4 188.7L419.6 189.5L421.1 190.7L421.1 191.2L420.2 191.2L418.1 190.2L416.7 188.9ZM310.2 183.5L309.1 183.8L306.6 182.1L306.4 180.9L305.2 179.7L305.1 178.8L303.5 178L303.4 176.2L303.8 175.5L305.4 176.4L306.4 177L307.9 177.5L308.2 178.7L308.6 180.3L310 181.7L310.2 183.5ZM300 163.8L301.8 163.8L299.8 167.5L300.4 170.3L299.7 170.2L299.2 168.6L299.1 167L298.6 165.8L298.9 164.3L299.4 163.2L300 163.8ZM269.5 146.5L267.1 147.6L266.7 146.5L267.3 144.6L269.5 143.6L270.7 143.2L271.7 143.7L271.9 145.1L269.5 146.5ZM253.8 130.7L252.5 131.1L251.8 130L251.4 128.6L253.4 128.3L254.5 129.1L253.8 130.7ZM253.6 111.2L254 112.4L255.3 112.2L255.9 113.8L257.1 114.8L256.7 115.3L254.9 115.8L254.3 114.6L254.2 113.5L252.6 113.4L252.5 112.8L253.6 111.2ZM244.5 151.8L247.6 151.4L247.7 152L244.9 152.7L244.5 151.8ZM372.2 104.8L374 103.1L375.7 98.2L377.3 97.8L378.3 99L378.8 101.3L377.3 105.9L376.1 109.1L377.4 111.9L379.1 114.5L378 116.3L375.3 116.1L375.5 117.9L374.3 119.3L371.8 118.1L369.8 116.3L367.9 116.2L364.3 116.9L360.1 116.6L357.2 116.3L357.4 114.2L356 112.5L354.4 112.6L354.4 108.7L355.7 108.5L358.4 108.4L360.4 109.1L362.8 108.9L360.5 107.1L357.1 106.6L355.1 105.9L355.3 104.1L359.7 103.2L357.5 102.6L355.6 100.7L359 97.6L361.1 96L366.7 94.3L367.6 95.7L365.5 97.7L369.6 97.1L370.1 100.1L373.2 98.2L373.6 100.1L372.2 104.8ZM347.1 96.4L349 94.6L352.3 91.5L355.7 88.6L356.4 85.2L361.6 85.9L362.8 87.6L366.2 89L366.6 90.9L366.8 93.4L364.2 94.1L358.7 96.3L354.8 99.1L353.6 101.1L348.4 102.1L348.9 99.9L347.1 96.4ZM385.4 83L384.8 84.9L386.5 84.5L387.7 85.1L386.4 87.7L384.1 89.8L379 89.2L374.2 90.2L372.1 89.7L372.9 88L377.2 86.7L370.7 85.4L369.4 83.8L374.7 79.4L377 78.3L379.4 81.4L379.8 85.2L381.8 86.3L383.2 80.8L385.7 79.3L386.6 80.3L385.4 83ZM380.5 71.7L377.3 75.8L374.9 77.3L373.5 77.1L369.5 78.5L366.8 78.6L365.9 76.8L371 73.6L376.3 71.1L378.2 71.9L380.5 71.7ZM388.9 109L385.7 110.1L384.5 109.4L384.3 107.5L382.6 103.1L383.4 101.7L386 103L386.1 99.6L389 97.8L390.2 99.2L393 99.2L392.6 100.7L390.1 102.6L391.3 105L388.9 109ZM396.5 105.2L393.3 108.2L391.8 107.7L392.9 103.5L394.1 101.2L395.9 99.4L398 98.5L400.8 99.4L402.9 101.2L398.7 104.7L396.5 105.2ZM406.4 85.8L409.1 86.5L409.3 88.5L407.9 90.4L408.8 91.9L409.1 93.3L410.8 93.9L412.5 94.9L415.2 94.3L418.2 94.6L420.2 95.4L420.8 97.6L420.2 99.6L418.7 100.7L416.2 101.2L414.7 100.3L410.3 100.1L407.4 99.5L405.5 98.3L402.7 95.9L403.6 93.1L404.8 90.6L404.7 88L402.3 86.7L401.7 84.6L403.5 82.6L406 83.7L406.4 85.8ZM453.3 53.9L459.8 57.4L461.6 59L462.7 61.4L461.8 63.2L457.7 65.5L454.4 66.1L452.7 67.3L455.2 67.9L450.6 71.1L447.9 72.3L443.5 76.7L440.5 77.1L439.2 78.1L435.1 77.8L436.5 78.9L435.1 79.7L434.8 82.7L432.7 84.3L430 85.3L428.3 87.2L425.7 88.3L425.3 89.6L427.7 89.9L427.1 91.1L422.1 93.3L419.3 91.1L415 90.9L413.3 89.8L411 88.9L412.2 86.4L415.2 85.8L416.7 81.8L417.7 81.7L419.9 84.9L420 81L418.6 79.4L420.8 77.5L423.7 76.8L425.2 74.9L424.8 72.1L426.2 68.9L429.2 70.1L429.8 71.1L432.9 69.4L430.7 67.9L426.4 67L425.6 64.3L426.3 61.4L426.3 59.1L427.5 56.8L430 56L431.4 56.2L434.3 55.9L437.5 53.9L438.6 54.7L438.5 57L441.7 53.5L443.8 52.8L446.1 52.6L449.5 53.3L449.5 54.3L453.3 53.9ZM424 72.4L424.3 74.7L421.7 75.9L416.9 79.4L414.5 79.2L412.3 77.7L412.4 75L413.6 73L415.6 71.7L413.3 71.1L413.3 68.7L414.3 65.7L416.9 63.3L419.1 61.6L420.5 61.6L421 60L423.8 60.6L423.1 64.5L424.2 66.4L425.4 68.2L424 72.4ZM399.4 86.9L397.9 89.5L395.2 93L392.7 92.9L391.7 91.7L393.4 88.8L391 88.6L393.3 84.6L394.6 85.2L397.7 84L399.3 84.9L399.4 86.9ZM403.2 75L402.3 77.4L400.6 76.2L399.7 73.7L397.1 72.5L399.5 71.3L398.9 69.4L400.4 67.1L402.2 68.7L404.1 72L403.2 75ZM407.6 78.1L405.1 78.7L404.8 77.1L405.6 74.8L407 72.5L408.5 73.2L409 73.8L409.2 76.3L407.6 78.1ZM388.2 74.1L384.8 74.9L384.2 72.5L386.5 71.1L388.7 71.2L389.8 72.6L388.2 74.1ZM401.5 91.1L401.7 93.1L401.4 94.8L399.6 96.5L397.8 95.6L396.9 93.9L398.8 91.9L401.5 91.1ZM385.3 120.1L383.7 121.3L382.2 119.6L380.8 119.8L379.6 117.5L381.5 116.5L383.5 115L384.5 116.5L385 117.4L385.1 118.3L385.3 120.1ZM396 136.4L395.6 138L396.7 137.6L397.2 138.7L398.5 140.2L400 141.6L399.5 143.3L400.8 143.2L401.6 144.5L399.7 145.4L397.5 144.2L397.2 142.5L394.9 144.1L391.9 145.6L392.1 143.4L389.8 143.5L391.8 141.9L393.1 139.2L394.9 135.9L396 136.4ZM397.4 147.6L394.9 149.2L393.7 149L393.7 148L395.5 146.6L397.7 146.9L397.4 147.6ZM400.3 149.1L400.9 149.3L401.1 150L399.9 151.7L399.3 151.3L399.2 150.2L399.3 150L400.3 149.1ZM412.6 133.2L410.8 133.1L411.1 131.2L412.6 129.2L414.2 128.8L415 130.1L414.4 131.7L414 132.2L412.6 133.2ZM415.9 109.3L415.3 106.6L416.1 105L417 104.9L420 106L421.4 109L421 110.2L419.5 109.8L418 109.4L416.2 109.7L415.9 109.3ZM411.1 413.4L412.1 414.6L413.4 416.7L416.1 418.2L418.7 418.7L418.2 420.2L416.6 420.5L415.5 419.5L414.4 419.5L415.2 420.7L413.9 421.8L413.1 421.8L412 421.6L410.5 420.8L408.6 420.6L406.1 419.1L403.9 417.7L400.7 414.7L402.3 415.2L405.2 416.9L407.7 417.7L408.3 416.4L408.4 414.4L409.8 413.1L411.1 413.4ZM423.6 410.3L425.4 408.5L427 409.1L427.9 408L429.5 409.1L429.2 410.1L427 411L426 410.1L424.8 411.5L423.6 410.3ZM650.8 405.6L651.6 403L652.8 403.4L654.4 403.9L654.4 404.4L653.6 405.5L652.3 405.2L650.8 405.6ZM233 257L232.7 257.4L232.2 257.1L232.4 256.4L232.2 255.6L232.7 254.9L232.7 254.3L233.6 254.7L234.1 255.3L234.5 256.1L233.7 256.7L233 257ZM231.3 252.8L232.3 252.7L232.6 253.3L231.8 253.5L231.3 252.8ZM228.5 251.1L229.2 250.8L229.6 251.8L228.7 251.7ZM225.8 249.8L226.6 249.5L226.7 250.1L226.1 250.3ZM870.7 334.3L871.2 334L871.8 334.7L871.4 335.9L870.2 336.2L869.1 335.9L869.1 334.8L869.9 334L870.7 334.3ZM874.6 332.2L873.3 332.7L872 333.2L871.9 332.3L872.9 331.9L873.5 331.8L874.7 331.1M846 342.3L847.4 343.8L848.2 345L847.4 345.6L846.5 344.9L845.2 343.7L844.2 342.4L843.1 340.7L843 339.9L843.8 340L844.8 340.8L845.5 341.6L846 342.3ZM841.3 318.3L841.8 319L840.4 319L839.8 317.7L840.9 318.2L841.3 318.3ZM840.6 316.4L840.3 316.8L838.9 315L838.6 313.7L839.2 313.7L839.8 315.4L840.6 316.4ZM838.9 317L838.2 317L837 316.8L836.6 316.5L836.8 315.6L838 316L838.7 316.4L838.9 317ZM836.8 313.1L837.2 313.8L837.3 314.2L835.8 313.3L834.8 312.5L834.1 311.9L834.4 311.7L835.3 312.1L836.8 313.1ZM832.1 311L832.8 311.7L832.4 311.8L831.6 311.4L830.9 310.5L831 310.2L832.1 311ZM827.4 307L827.6 307.6L828.2 308.1L829.1 309.4L830 310L829.7 310.6L829.1 310.8L828.3 310L827.5 308.7L827.2 307.2L827.4 307ZM823 305.5L823 306.7L822.3 307.9L821.3 308L820.9 308.6L819.9 309.1L818.9 309.6L817.8 309.6L816.3 309L815.2 308.4L815.4 307.8L817.1 308.1L818.2 307.9L818.5 307L818.8 306.9L818.9 308L820 307.8L820.6 307.1L821.7 306.4L821.5 305.3L822.6 305.2L823 305.5ZM824.6 305.9L823.9 306.5L823.6 305.3L823.2 304.5L822.3 303.9L821.2 303L819.9 302.4L820.4 302L821.4 302.5L822.1 302.9L822.9 303.4L823.6 304.2L824.3 304.9L824.6 305.9ZM851.2 331.6L850.6 331.9L850 330.9L850.2 330.3L851.2 331.6ZM850.2 328.1L850.3 329.9L849.8 329.6L849.4 329.8L849.2 329.1L849.3 327.4L850.2 328.1ZM770 314.7L770.3 314.2L772 313.7L773.3 313.7L773.9 313.4L774.6 313.7L773.9 314.2L771.9 315.1L770.2 315.7L768.9 317.2L767.2 317.6L767 317.4L767.2 316.7L768.1 315.5L770 314.7ZM756.5 313L757.2 313.5L758.4 313.4L758.8 314.3L756.6 314.7L755.2 314.9L754.2 314.9L754.9 313.7L756 313.7L756.5 313ZM766.1 313L765.8 314.2L762.9 314.7L760.3 314.5L760.4 313.7L761.9 313.3L763.1 313.9L764.4 313.8L766.1 313ZM760.3 315.6L761.2 316.2L761.9 316.8L761.7 317.4L760.9 317.4L758.4 316L760.3 315.6ZM777.6 294.9L777.5 296.6L776.5 296.4L776.2 297.6L777 298.6L776.5 298.8L775.7 297.6L775.1 295.2L775.5 293.6L776.1 292.9L776.3 293.9L777.4 294.1L777.6 294.9ZM781 303.1L781.7 304.6L780.1 303.8L778.5 303.6L777.4 303.8L776 303.7L776.5 302.6L778.9 302.5L781 303.1ZM774.3 303.2L774.8 303.8L774 304.5L772.7 304.1L772.4 303.3L774.3 303.2ZM558.4 219.8L557.8 221.5L558.1 222.2L557.7 223.3L556.3 222.5L555.4 222.3L552.8 221.2L553 220L555.1 220.2L557 220L558.4 219.8ZM546.7 213.1L547.8 214.7L547.6 217.7L546.8 217.6L546.1 218.3L545.4 217.7L545.2 215L544.8 213.7L545.8 213.8L546.7 213.1ZM547.3 210.9L546.7 212.7L545.9 212.3L545.4 210.7L545.8 209.8L546.9 208.9L547.3 210.9ZM573.7 225.2L574.7 225.9L576.2 225.8L577.5 226L577.5 226.3L578.5 226.1L578.3 226.7L575.6 226.9L575.7 226.6L573.4 226.2L573.7 225.2ZM589.6 226.4L590.7 225.7L592.1 225.7L593.8 225L592.6 226L592.8 226.6L591 227.5L590 227.2L589.6 226.4ZM550.9 175.8L551.5 177.1L550.6 179.4L548.7 177.9L548.4 176.7L550.9 175.8ZM371.4 605L371.6 605L364.7 600.5L369.9 601.4L366.4 598.3L366.8 598.2L372.9 600.1L368.8 596.5L368.3 595.9L368.4 592.8L371.9 593.8L373.6 594.4L378.6 595.8L383.8 595.9L389.3 596.8L394.8 596.3L393.6 592.5L399 591.6L404.4 592.7L402.9 588.9L401.8 585.2L397.1 581.4L393.5 583.4L388.6 583.5L383.9 581.1L379.5 581.2L375.4 577.9L372 574.9L369 572L365.4 569.4L361.6 568.6L358.1 566.8L354 565.7L356.9 564.6L358.1 562.1L362.1 563.4L361.6 560.4L360.7 557.1L359.4 554.5L356.3 552.2L353.1 551.2L349.6 550.3L347 551.2L344.1 551.5L341.3 552.1L338.2 550.3L334.8 549.2L331.8 547.6L324.8 541.2L325.9 541.5L328.8 542.7L330.2 541.1L331.4 539.4L334.7 541.4L336.1 539.9L336.5 537.8L336.6 535.6L336.4 533.1L337.7 531.6L335.9 529.6L333.7 527.8L332.4 525.7L333.3 524L335.6 525.5L336.7 523.6L337.1 521.6L338.9 520.8L340.3 519.5L341.1 517.5L341.7 515.9L342.5 514.1L343.7 514.1L345 514.1L346.5 512.7L348.9 512.9L350.7 512.1L352 510.8L354.2 510.6L356.6 510.4L358.3 509.6L360.4 509L362.5 508.4L364.2 507.6L364.6 505.7L365.8 504.3L368.2 504.8L369.3 503.5L369.7 501.3L371.5 502.5L373.1 504.1L375 505.4L375.6 503.6L378.3 504.9L380.6 504.9L383 505.8L384.7 504.9L385.9 503.5L388.1 503.1L390.3 503.3L392.7 503.6L392.2 501.3L390.4 499.9L388.7 498.4L386.7 498.6L384.9 497L383.6 495.3L381.2 492L382.6 492.3L384.6 492.1L386.3 491.4L388.4 491.7L390.6 492.7L392.1 494.1L394.1 493.9L395.6 492.8L397.1 491.4L398.5 490.5L400.5 491.2L402.2 490.4L401.8 486.7L403.9 488.5L406 488.9L407.5 488L409.5 489.6L411.5 489.3L413.4 489.5L415.6 490.1L415.9 488.2L415.8 486.5L418 487.9L419.7 487.1L421.6 487.8L423.2 489.1L424.9 488.3L425.9 487L426.9 485.6L428.4 484.7L430.2 483.8L431.8 482.9L432.8 481.7L433.2 480.2L432.8 478.3L432.1 476.6L431 475.1L429.9 473.6L428.9 472.1L428 470.7L427.4 469.2L427 467.6L427.2 466.1L427.3 464.4L427 462.9L426.2 461.3L425.5 459.9L425.7 458.1L426.3 456.9L426.9 455.6L427.6 454.2L428.5 453L428.7 451.5L429.3 450.4L430.1 449.4L431.5 449L432.3 447.9L433.2 447.1L434.4 446.6L435.4 445.6L436 444.4L437.2 443.9L438.3 444.7L438 445.8L436.6 447L436.1 447.8L434.8 447.4L433.6 447.9L432.7 448.8L431.8 449.8L431.3 450.9L431.5 452.3L431.9 453.6L433 454.7L432.2 455.6L430.8 456.1L430.3 457.4L429.8 458.6L429.3 460.4L429.5 461.8L430.5 463.3L431.7 464.3L433.3 465L434.8 466.1L435.9 467.5L436.7 468.9L437.6 470.4L438.8 471.7L439.7 473.1L441.2 476.9L442.1 478.4L442.8 480L443.8 481.7L444.4 484L444.3 486L444 487.6L442.4 488.5L442.3 490.2L442.1 491.9L440.7 494.1L439.2 495.2L438 496.6L436.6 498L436.4 500.2L434.3 500.9L431.9 501.2L430 502L427.8 502.5L429.1 504.4L431.6 504.9L433.7 506L435.4 507.7L434.8 509.7L432.3 509.7L431.2 511.5L433.4 516L435.8 517.5L437.2 519.7L439.9 521.4L442.9 521.8L445.8 522.9L448.4 524.4L451.5 525.9L454.8 526.1L458.4 527.3L461.2 528.7L464.2 530.6L466.7 533.6L468.4 536.1L468.6 533.3L469.5 530.8L470.6 528.3L472.2 526.1L473.6 523.9L476.3 523.3L479.4 523.8L482.1 524.9L482 522L483 519.9L485.9 519.3L487.8 517.6L489.7 516.1L491.9 514.9L494.3 513.6L495.9 511.9L494.6 509.9L493.7 507.9L493.3 505.8L490.9 506.3L488.6 507.5L486.2 507.7L485.3 505.7L484.6 501.7L484.9 500.4L486.4 499.1L488.4 497.6L491 494.4L491.8 492.3L493.5 491.4L495.1 490.6L496 490.1L498 489.8L499.9 489L501.5 488L502.9 486.8L504.3 485.6L506.1 484.1L507.1 482.5L508.3 481.2L508.5 479.5L507 478.5L507.3 476.7L508.1 475.4L509.5 474.5L511 473.5L512.4 472.2L513.4 470.5L514 468.7L515 467.6L516.7 467.7L517.5 469L519.2 469.2L519.2 467.7L519.9 466.1L521.5 466.5L521.9 467.9L523.7 468.2L525.6 467.5L527.4 467L529 467.2L529.7 468.8L531.3 467.5L532.8 466.8L534.4 466.3L536.1 465.8L537.6 464.9L539.3 464.3L540.6 463.5L541.5 462.2L542.6 463.2L544.2 462.7L545.1 464.5L545.9 465.9L547.6 465.2L548.4 463.7L549.9 462.7L551.9 463L552.4 464.4L553.7 463L555.3 462.6L557.1 462.6L558.7 462.7L560.3 463.2L561.8 463.5L562.4 464.8L563.2 466L564.9 465.4L566.7 465.4L568.4 465.4L570 465.5L571.6 465L573.2 464.7L574.7 463.7L576.2 463.2L577.8 462.9L579.1 461.9L580.3 460L581.4 458.8L582.8 459.5L583.2 460.8L584.3 461.8L585.9 461.6L586.8 463L587.7 464.1L589.4 463.3L590.2 461.8L591.7 461.2L593.6 460.1L597.1 459.2L601.3 457.1L602.7 457.7L605.6 455.7L607.1 455.9L608.5 455.2L609.2 453.9L610.7 453.1L612.2 452.5L613.9 452.2L615.4 452L616.7 452.4L618.1 452.9L619.1 454L618.9 455.5L619.9 456.9L620.6 458L622.3 458.6L623 459.8L624 460.9L625.4 461.3L626.9 460.8L628.7 459.4L629.9 460.4L632.6 461.7L634 462.2L635.5 462.4L635.4 466.5L635 467.5L634.2 469.3L632.4 470L630.7 471.4L630.4 473L632.1 473.1L631.3 474.7L630 476.1L628.7 477.7L629.3 479.2L630.8 479.9L632.7 479.5L634.2 477.9L635.3 476.4L636.6 475.3L638 474.3L638.9 472.9L640.4 471L643.3 471L646.8 470.4L648.1 468.9L649.1 467.6L650.7 466.3L652.6 465.6L654.2 465L655.5 463.9L656.7 463.4L658.1 463L659.5 463.6L661 463.5L662.7 463.3L664.3 463.8L665.9 463L667.7 460.6L667.9 461.7L667.9 463.6L668.9 464.6L670.3 465.2L672 465L673.4 465.6L674.9 465.9L676 465.7L677.2 466.2L678 467.3L679.7 467L681.4 467.4L683 467.1L684.4 468L686 466.9L687.5 465.7L689 464.9L692.3 462.4L693.1 463.2L693.8 464.4L694.2 466L695.1 468.8L696.6 469.2L698 469.5L700 469.5L701.9 469.3L703.7 468.5L705.4 467.5L707.2 467.8L708.8 467.2L709.7 468.2L709.9 469.7L710.3 471.2L712.1 471.4L712.7 472.7L714 474.2L715.7 475.1L717.5 475.1L719.4 474.1L721.2 473.1L722.8 473.1L723.9 474L725.3 474.8L727.1 474.6L728.5 474.9L729.7 475.7L730.9 476.5L732.7 476.1L734.7 475.9L736.4 476.1L738.2 476.6L739.9 476.6L741.5 476.6L743.1 474.7L744.1 473L744.5 474.4L743.7 476.3L743.2 478.2L743 479.8L743.9 480.9L745.8 481.2L747.9 481.7L749.4 481.8L751.5 482.4L753 482.7L754.9 483.5L756.4 484.4L756.6 486L755.3 487.6L755.4 489.3L756.4 490.8L757.3 492.5L758.7 493.9L760.2 495.4L761.3 496.6L762.9 497.3L764.9 496L765.3 497.8L765.4 499.7L766 501.2L767.4 502.3L768.7 503.5L768 505.7L768.8 507.5L768.5 509.6L769.5 511.1L771.2 511.6L772.5 512.5L774.3 513.1L775.7 514.2L776.7 515.5L777.2 517.4L777.8 519L777.5 521L775.6 522.9L773.3 524.4L770.6 526.5L768.5 528.2L765.8 530.2L763.4 530.1L760.8 531.7L758.1 532.1L755.6 533.9L752.7 535.6L750.2 536.8L747.5 538.9L745.1 540.8L742.5 543.3L740.3 545.5L738.6 548.1L736.6 550.4L734.9 552.8L736.1 554.8L733.7 557.7L730.6 557.4L727.5 557.7L725.1 556.7L720.3 559.7L716.7 562.5L710.1 566.6L708.7 569.6L705.8 572.6L703.4 575.6L701.5 578.6L699.8 581.6L698 584.7L696.6 588.4L691.7 592.1L691.5 595.4L687.8 598.5L692.8 598.6L690.6 602.2L688.6 605M423.6 466.3L424.9 467.6L425.8 469L427.1 470.7L428.2 472.4L429.3 474.1L430.1 475.9L430.5 477.6L430.6 479.2L429.2 480.1L427.8 481.2L425.9 481.5L426 479.7L423.1 481.5L421.5 480.4L420.7 478.7L421.7 476.7L422.5 476.1L424.3 475.9L423.9 473.8L423.4 472.3L422.2 469.1L422.4 467.1L423.6 466.3ZM381.3 488.2L381.8 487.3L384 487.4L386.3 487.2L388.2 487.4L389.5 486.5L391.7 488.9L390.3 488.8L388.7 489.4L386.8 489.7L385 490.4L383.1 489.9L381.3 488.2ZM357.4 504.8L356.6 503.1L358.9 503.4L361.2 503.6L362.3 502.2L362.6 504.2L362.2 505.9L360 506.1L357.4 504.8ZM350.3 506L350.6 504.7L352.8 505.3L356.2 506.5L355.2 506.6L353.1 506.8L350.3 506ZM329 554.6L327.2 552L330.3 551.7L333.4 552.9L336.6 554.6L340 557.2L338.8 559.2L335 557.9L331.9 556.2L329 554.6ZM467.7 502.3L468.4 502.2L469.9 500.8L472.2 501.6L474.4 503.7L475.9 506.9L476.8 509.3L477.7 512.2L476.4 514.3L474.9 516.1L473.2 518L471.1 519.6L468.3 519.8L465.9 518L465.2 515.5L467.2 513.4L467.6 511.3L467.5 508.7L467.4 506.6L467.6 504.6L467.7 502.3ZM458.1 515.7L459 518.8L459.8 521.7L457 521.4L454.6 522.3L452.2 520.6L450.6 518.8L453.4 518.4L456.2 518.4L456.1 515.8L455.9 513.6L458.1 515.7Z"/>
</svg>
<div id="status" class="abs"></div>
<div class="fld" style="left:3px;top:715px;width:247px"></div><svg class="abs" style="left:11px;top:719px" width="14" height="14" viewBox="0 0 14 14"><circle cx="5.5" cy="5.5" r="4" fill="none" stroke="#7c7c7c" stroke-width="1.3"/><path d="M8.5 8.5L12.5 12.5" stroke="#7c7c7c" stroke-width="1.6"/></svg><div class="abs" style="left:32px;top:719px;line-height:17px;color:#808080">Type to locate (Ctrl+K)</div><div class="st" style="left:259px;top:721px">1 legend entries removed.</div><div class="st" style="left:527px;top:721px">Coordinate</div><div class="fld" style="left:580px;top:715px;width:102px;border:1.5px solid #3689d2;box-shadow:inset 0 0 0 1px #cfe3f6;border-radius:3px;height:22px"></div><div class="st" style="left:587px;top:721px">2658439,-4502993</div><div class="abs" style="left:674px;top:719px;width:1px;height:14px;background:#000"></div><svg class="abs" style="left:684px;top:718px" width="18" height="18" viewBox="0 0 18 18"><path d="M4.5 4.500c2-1.500 5-1 6.500 1.500l2 4c1.200 2.500.2 5-2 6s-5 0-6.200-2.500l-2-4c-1-2.500-.300-4 1.700-5z" fill="#e9e9e9" stroke="#3a3a3a" stroke-width="1.100"/><path d="M7.500 3.800l2.200 4.700M3 9.500l8.500-4" stroke="#3a3a3a" stroke-width="1"/><path d="M4 6l3 5M5.500 5l3 5M3.200 8l2 3.500" stroke="#555" stroke-width=".8"/><circle cx="9.500" cy="13" r="1.800" fill="#fff" stroke="#444" stroke-width=".8"/><path d="M11.500 1.500l4 4M15.500 1.500l-4 4" stroke="#3a3a3a" stroke-width="1.100"/></svg><div class="st" style="left:715px;top:721px">Scale</div><div class="fld" style="left:743px;top:715px;width:96px"></div><div class="abs" style="left:818px;top:716px;width:1px;height:20px;background:#c8c8c8"></div><div class="st" style="left:748px;top:721px">1:218427030</div><div class="arr" style="left:824.500px;top:725px;border-top-color:#5c5c5c"></div><svg class="abs" style="left:848px;top:718px" width="18" height="18" viewBox="0 0 18 18"><path d="M5.5 8V6a3.5 3.5 0 0 1 7 0v2" fill="none" stroke="#7a7a7a" stroke-width="1.6"/><rect x="3.5" y="8" width="11" height="8.5" rx="1.3" fill="#6e6e6e"/></svg><div class="st" style="left:872px;top:721px">Magnifier</div><div class="fld" style="left:918px;top:715px;width:94px"></div><div class="st" style="left:923px;top:721px">100%</div><div class="abs" style="left:998px;top:716px;width:1px;height:20px;background:#c8c8c8"></div><svg class="abs" style="left:1001.5px;top:719px" width="8" height="16" viewBox="0 0 8 16"><path d="M0.3 6.300L4 2.500L7.700 6.300Z" fill="#5a5a5a"/><path d="M0.3 9.700L4 13.500L7.700 9.700Z" fill="#5a5a5a"/></svg><div class="st" style="left:1022px;top:721px">Rotation</div><div class="fld" style="left:1069px;top:715px;width:90px"></div><div class="st" style="left:1074px;top:721px">0.0 °</div><div class="abs" style="left:1145px;top:716px;width:1px;height:20px;background:#c8c8c8"></div><svg class="abs" style="left:1148.5px;top:719px" width="8" height="16" viewBox="0 0 8 16"><path d="M0.3 6.300L4 2.500L7.700 6.300Z" fill="#5a5a5a"/><path d="M0.3 9.700L4 13.500L7.700 9.700Z" fill="#5a5a5a"/></svg><div class="abs" style="left:1166px;top:720px;width:14px;height:14px;background:#fff;border:1px solid #b8b8b8;border-radius:2px"></div><svg class="abs" style="left:1167.5px;top:721.5px" width="11" height="11" viewBox="0 0 11 11"><path d="M2 5.6L4.6 8.8L9.2 1.6" fill="none" stroke="#000" stroke-width="1.7"/></svg><div class="st" style="left:1185px;top:721px">Render</div><svg class="abs" style="left:1234px;top:718px" width="18" height="18" viewBox="0 0 18 18"><ellipse cx="9" cy="9" rx="7.400" ry="5.800" fill="none" stroke="#666" stroke-width=".9"/><ellipse cx="9" cy="9" rx="3.400" ry="5.800" fill="none" stroke="#666" stroke-width=".8"/><path d="M1.600 9h14.800M9 3.200v11.600M2.700 6.200h12.600M2.700 11.800h12.600" stroke="#666" stroke-width=".8"/><path d="M9 1.600l1.600 1.700h-3.200zM9 16.400l1.600-1.700h-3.200z" fill="#666"/></svg><div class="st" style="left:1255px;top:721px">USER:100025</div><svg class="abs" style="left:1335px;top:718px" width="18" height="18" viewBox="0 0 18 18"><path d="M9 2.500c4.3 0 7.5 2.5 7.5 5.800s-3.2 5.800-7.5 5.800c-.8 0-1.500-.100-2.200-.200L3.5 16l.8-3c-1.700-1-2.800-2.700-2.800-4.700c0-3.3 3.200-5.8 7.500-5.800z" fill="#5a5a5a"/><circle cx="5.8" cy="8.3" r="1" fill="#fff"/><circle cx="9" cy="8.3" r="1" fill="#fff"/><circle cx="12.2" cy="8.3" r="1" fill="#fff"/></svg>
</body></html>
